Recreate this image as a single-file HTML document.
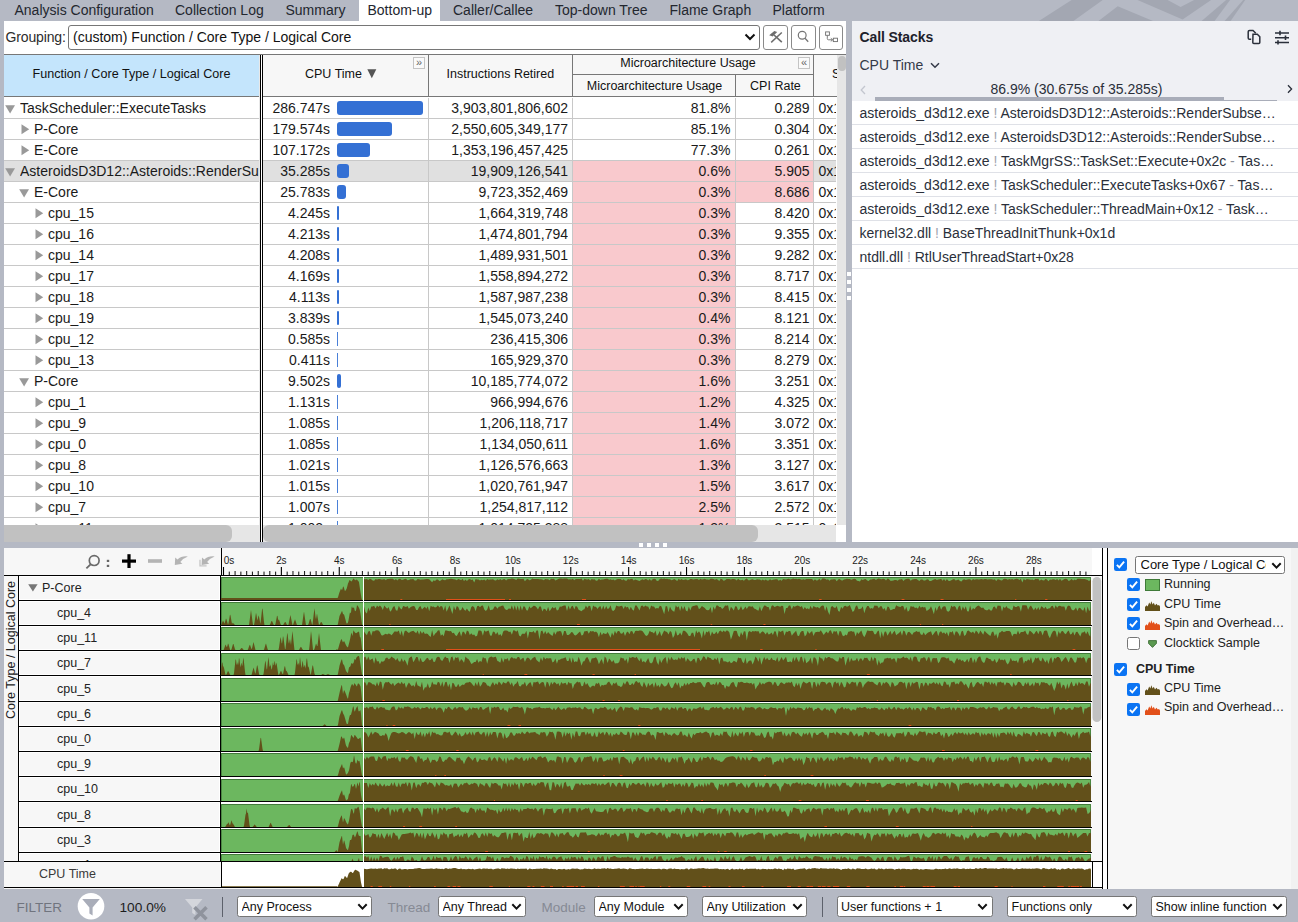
<!DOCTYPE html><html><head><meta charset="utf-8"><title>VTune</title><style>
*{box-sizing:border-box;margin:0;padding:0}
html,body{width:1298px;height:922px;overflow:hidden}
body{background:#b5b9c4;font-family:"Liberation Sans",sans-serif;font-size:14px;color:#1a1a1a;position:relative}
.abs{position:absolute}
.tab{position:absolute;top:0;height:21px;line-height:20px;font-size:14px;color:#23272f;white-space:nowrap}
.tab.act{background:#fff}
#tl{position:absolute;left:4px;top:21px;width:842px;height:521px;background:#fff;overflow:hidden}
.sel{position:absolute;background:#fff;border:1px solid #767676;border-radius:3px;white-space:nowrap;overflow:hidden}
.btn{position:absolute;top:4px;width:25px;height:25px;border:1px solid #8a8a8a;border-radius:3px;background:#fff}
.hd{position:absolute;background:#f7f7f7;font-size:12.5px;color:#111;text-align:center;white-space:nowrap}
.row{position:absolute;left:0;width:832px;height:21px;border-bottom:1px solid #c8c8c8;font-size:14px;line-height:21px;white-space:nowrap}
.row.selr{background:#e0e0e0}
.c{position:absolute;top:0;height:20px;overflow:hidden}
.num{text-align:right}
.pink{background:#f9c9cd}
.bar{position:absolute;left:337px;top:3px;height:14px;background:#3470d4;border-radius:3px}
</style></head><body>
<div class="tab" style="left:14.5px">Analysis Configuration</div>
<div class="tab" style="left:175px">Collection Log</div>
<div class="tab" style="left:285.5px">Summary</div>
<div class="tab act" style="left:359px;width:81px;padding-left:8.5px">Bottom-up</div>
<div class="tab" style="left:453px">Caller/Callee</div>
<div class="tab" style="left:555px">Top-down Tree</div>
<div class="tab" style="left:669.5px">Flame Graph</div>
<div class="tab" style="left:772.5px">Platform</div>
<svg class="abs" style="left:1030px;top:0" width="268" height="21" viewBox="1030 0 268 21"><g fill="#a3a7b2"><polygon points="1038.9,21 1071.6,0 1102.7,0 1073.4,21"/><polygon points="1098.5,21 1117.7,6.2 1153,21"/><polygon points="1137.5,0 1167.6,0 1180.6,7 1194.1,0 1211.1,0 1182.6,19.5"/><polygon points="1201.6,21 1226.1,0 1230.1,0 1214.6,21"/><polygon points="1224.6,21 1243.2,0 1245.2,0 1230.6,21"/></g></svg>
<div id="tl">
<div class="abs" style="left:1.6px;top:0;height:33px;line-height:32px;font-size:14px;letter-spacing:-0.15px;color:#2c2c2c">Grouping:</div>
<div class="sel" style="left:64px;top:4px;width:692px;height:25px;line-height:23px;font-size:14px;padding-left:4px;color:#111">(custom) Function / Core Type / Logical Core</div>
<svg class="abs" style="left:740px;top:12px" width="12" height="8" viewBox="0 0 12 8"><path d="M1.5 1.5 L6 6 L10.5 1.5" fill="none" stroke="#111" stroke-width="2"/></svg>
<div class="btn" style="left:759px;width:25px"></div>
<div class="btn" style="left:787px;width:25px"></div>
<div class="btn" style="left:815px;width:24px"></div>
<svg class="abs" style="left:759px;top:4px" width="84" height="25" viewBox="763 25 84 25"><g stroke="#6e6e6e" fill="none"><path d="M771.2 42.4 L781.8 32.5" stroke-width="1.5"/><path d="M774 35 L781.8 42.2" stroke-width="1.7"/><polygon points="769.2,35.3 774.3,30.9 777.2,32 772.7,36.6" fill="#6e6e6e" stroke="none"/><circle cx="802.2" cy="35.3" r="3.9" stroke-width="1.2" stroke="#757575"/><path d="M805 38.2 L808.2 41.7" stroke-width="1.3" stroke="#757575"/><rect x="825.6" y="31.9" width="3.8" height="3.4" stroke-width="0.9"/><rect x="833.3" y="38.2" width="4.2" height="3.4" stroke-width="0.9"/><path d="M827.3 35.5 V38.6 Q827.3 39.8 828.5 39.8 H832.6" stroke-width="0.9"/><path d="M830.8 38.2 L832.6 39.8 L830.8 41.4" stroke-width="0.9"/></g></svg>
<div class="abs" style="left:0;top:33px;width:843px;height:1px;background:#777"></div>
<div class="hd" style="left:0;top:34px;width:255px;height:41px;background:#c4e5fc;line-height:38px;font-size:12.6px">Function / Core Type / Logical Core</div>
<div class="abs" style="left:259px;top:34px;width:584px;height:41px;background:#f7f7f7"></div>
<div class="hd" style="left:259px;top:34px;width:165px;height:41px;line-height:38px;"><span style="position:absolute;left:42px;top:0">CPU Time</span></div>
<div class="hd" style="left:425px;top:34px;width:143px;height:41px;line-height:38px;"><span style="position:absolute;left:17.5px;top:0">Instructions Retired</span></div>
<div class="hd" style="left:569px;top:34px;width:240px;height:19px;line-height:17px;"><span style="position:absolute;left:47.3px;top:0">Microarchitecture Usage</span></div>
<div class="hd" style="left:569px;top:54px;width:162px;height:21px;line-height:22px;"><span style="position:absolute;left:13.8px;top:0">Microarchitecture Usage</span></div>
<div class="hd" style="left:732px;top:54px;width:77px;height:21px;line-height:22px;"><span style="position:absolute;left:14.1px;top:0">CPI Rate</span></div>
<div class="hd" style="left:810px;top:34px;width:23px;height:41px;line-height:38px;"><span style="position:absolute;left:18px;top:0">S</span></div>
<div class="abs" style="left:424px;top:34px;width:1px;height:41px;background:#777"></div>
<div class="abs" style="left:568px;top:34px;width:1px;height:41px;background:#777"></div>
<div class="abs" style="left:809px;top:34px;width:1px;height:41px;background:#777"></div>
<div class="abs" style="left:731px;top:54px;width:1px;height:21px;background:#777"></div>
<div class="abs" style="left:568px;top:53px;width:242px;height:1px;background:#777"></div>
<div class="abs" style="left:0px;top:75px;width:833px;height:1px;background:#777"></div>
<svg class="abs" style="left:363px;top:48px" width="10" height="10" viewBox="0 0 10 10"><polygon points="0.3,0.3 9.3,0.3 4.8,9.3" fill="#555"/></svg>
<div class="abs" style="left:409px;top:36px;width:12px;height:12px;border:1px solid #c4c4c4;background:#fafafa;font-size:11px;line-height:9px;text-align:center;color:#666">&raquo;</div>
<div class="abs" style="left:794px;top:36px;width:12px;height:12px;border:1px solid #c4c4c4;background:#fafafa;font-size:11px;line-height:9px;text-align:center;color:#666">&laquo;</div>
<div class="abs" style="left:0;top:77px;width:833px;height:427px;overflow:hidden">
<div class="row" style="top:0px">
<svg class="abs" style="left:1px;top:7px" width="11" height="9" viewBox="0 0 11 9"><polygon points="0.2,0.3 10,0.3 5.1,8.6" fill="#999"/></svg>
<div class="c" style="left:16px;width:239px">TaskScheduler::ExecuteTasks</div>
<div class="c num" style="left:259px;width:67px">286.747s</div>
<div class="bar" style="left:333px;width:86.0px"></div>
<div class="c num" style="left:425px;width:139px">3,903,801,806,602</div>
<div class="c num" style="left:569px;width:162px;padding-right:4.5px">81.8%</div>
<div class="c num" style="left:732px;width:77px;padding-right:3.5px">0.289</div>
<div class="c" style="left:810px;width:22px;padding-left:4.5px">0x1</div>
</div>
<div class="row" style="top:21px">
<svg class="abs" style="left:17px;top:5px" width="9" height="11" viewBox="0 0 9 11"><polygon points="0.5,0.3 8.2,5.3 0.5,10.3" fill="#999"/></svg>
<div class="c" style="left:30px;width:225px">P-Core</div>
<div class="c num" style="left:259px;width:67px">179.574s</div>
<div class="bar" style="left:333px;width:54.9px"></div>
<div class="c num" style="left:425px;width:139px">2,550,605,349,177</div>
<div class="c num" style="left:569px;width:162px;padding-right:4.5px">85.1%</div>
<div class="c num" style="left:732px;width:77px;padding-right:3.5px">0.304</div>
<div class="c" style="left:810px;width:22px;padding-left:4.5px">0x1</div>
</div>
<div class="row" style="top:42px">
<svg class="abs" style="left:17px;top:5px" width="9" height="11" viewBox="0 0 9 11"><polygon points="0.5,0.3 8.2,5.3 0.5,10.3" fill="#999"/></svg>
<div class="c" style="left:30px;width:225px">E-Core</div>
<div class="c num" style="left:259px;width:67px">107.172s</div>
<div class="bar" style="left:333px;width:33.1px"></div>
<div class="c num" style="left:425px;width:139px">1,353,196,457,425</div>
<div class="c num" style="left:569px;width:162px;padding-right:4.5px">77.3%</div>
<div class="c num" style="left:732px;width:77px;padding-right:3.5px">0.261</div>
<div class="c" style="left:810px;width:22px;padding-left:4.5px">0x1</div>
</div>
<div class="row selr" style="top:63px">
<svg class="abs" style="left:1px;top:7px" width="11" height="9" viewBox="0 0 11 9"><polygon points="0.2,0.3 10,0.3 5.1,8.6" fill="#999"/></svg>
<div class="c" style="left:16px;width:239px">AsteroidsD3D12::Asteroids::RenderSubsetFrame</div>
<div class="c num" style="left:259px;width:67px">35.285s</div>
<div class="bar" style="left:333px;width:11.6px"></div>
<div class="c num" style="left:425px;width:139px">19,909,126,541</div>
<div class="c num pink" style="left:569px;width:162px;padding-right:4.5px">0.6%</div>
<div class="c num pink" style="left:732px;width:77px;padding-right:3.5px">5.905</div>
<div class="c" style="left:810px;width:22px;padding-left:4.5px">0x1</div>
</div>
<div class="row" style="top:84px">
<svg class="abs" style="left:15px;top:7px" width="11" height="9" viewBox="0 0 11 9"><polygon points="0.2,0.3 10,0.3 5.1,8.6" fill="#999"/></svg>
<div class="c" style="left:30px;width:225px">E-Core</div>
<div class="c num" style="left:259px;width:67px">25.783s</div>
<div class="bar" style="left:333px;width:8.7px"></div>
<div class="c num" style="left:425px;width:139px">9,723,352,469</div>
<div class="c num pink" style="left:569px;width:162px;padding-right:4.5px">0.3%</div>
<div class="c num pink" style="left:732px;width:77px;padding-right:3.5px">8.686</div>
<div class="c" style="left:810px;width:22px;padding-left:4.5px">0x1</div>
</div>
<div class="row" style="top:105px">
<svg class="abs" style="left:31px;top:5px" width="9" height="11" viewBox="0 0 9 11"><polygon points="0.5,0.3 8.2,5.3 0.5,10.3" fill="#999"/></svg>
<div class="c" style="left:44px;width:211px">cpu_15</div>
<div class="c num" style="left:259px;width:67px">4.245s</div>
<div class="bar" style="left:333px;width:2.3px"></div>
<div class="c num" style="left:425px;width:139px">1,664,319,748</div>
<div class="c num pink" style="left:569px;width:162px;padding-right:4.5px">0.3%</div>
<div class="c num" style="left:732px;width:77px;padding-right:3.5px">8.420</div>
<div class="c" style="left:810px;width:22px;padding-left:4.5px">0x1</div>
</div>
<div class="row" style="top:126px">
<svg class="abs" style="left:31px;top:5px" width="9" height="11" viewBox="0 0 9 11"><polygon points="0.5,0.3 8.2,5.3 0.5,10.3" fill="#999"/></svg>
<div class="c" style="left:44px;width:211px">cpu_16</div>
<div class="c num" style="left:259px;width:67px">4.213s</div>
<div class="bar" style="left:333px;width:2.3px"></div>
<div class="c num" style="left:425px;width:139px">1,474,801,794</div>
<div class="c num pink" style="left:569px;width:162px;padding-right:4.5px">0.3%</div>
<div class="c num" style="left:732px;width:77px;padding-right:3.5px">9.355</div>
<div class="c" style="left:810px;width:22px;padding-left:4.5px">0x1</div>
</div>
<div class="row" style="top:147px">
<svg class="abs" style="left:31px;top:5px" width="9" height="11" viewBox="0 0 9 11"><polygon points="0.5,0.3 8.2,5.3 0.5,10.3" fill="#999"/></svg>
<div class="c" style="left:44px;width:211px">cpu_14</div>
<div class="c num" style="left:259px;width:67px">4.208s</div>
<div class="bar" style="left:333px;width:2.3px"></div>
<div class="c num" style="left:425px;width:139px">1,489,931,501</div>
<div class="c num pink" style="left:569px;width:162px;padding-right:4.5px">0.3%</div>
<div class="c num" style="left:732px;width:77px;padding-right:3.5px">9.282</div>
<div class="c" style="left:810px;width:22px;padding-left:4.5px">0x1</div>
</div>
<div class="row" style="top:168px">
<svg class="abs" style="left:31px;top:5px" width="9" height="11" viewBox="0 0 9 11"><polygon points="0.5,0.3 8.2,5.3 0.5,10.3" fill="#999"/></svg>
<div class="c" style="left:44px;width:211px">cpu_17</div>
<div class="c num" style="left:259px;width:67px">4.169s</div>
<div class="bar" style="left:333px;width:2.3px"></div>
<div class="c num" style="left:425px;width:139px">1,558,894,272</div>
<div class="c num pink" style="left:569px;width:162px;padding-right:4.5px">0.3%</div>
<div class="c num" style="left:732px;width:77px;padding-right:3.5px">8.717</div>
<div class="c" style="left:810px;width:22px;padding-left:4.5px">0x1</div>
</div>
<div class="row" style="top:189px">
<svg class="abs" style="left:31px;top:5px" width="9" height="11" viewBox="0 0 9 11"><polygon points="0.5,0.3 8.2,5.3 0.5,10.3" fill="#999"/></svg>
<div class="c" style="left:44px;width:211px">cpu_18</div>
<div class="c num" style="left:259px;width:67px">4.113s</div>
<div class="bar" style="left:333px;width:2.2px"></div>
<div class="c num" style="left:425px;width:139px">1,587,987,238</div>
<div class="c num pink" style="left:569px;width:162px;padding-right:4.5px">0.3%</div>
<div class="c num" style="left:732px;width:77px;padding-right:3.5px">8.415</div>
<div class="c" style="left:810px;width:22px;padding-left:4.5px">0x1</div>
</div>
<div class="row" style="top:210px">
<svg class="abs" style="left:31px;top:5px" width="9" height="11" viewBox="0 0 9 11"><polygon points="0.5,0.3 8.2,5.3 0.5,10.3" fill="#999"/></svg>
<div class="c" style="left:44px;width:211px">cpu_19</div>
<div class="c num" style="left:259px;width:67px">3.839s</div>
<div class="bar" style="left:333px;width:2.2px"></div>
<div class="c num" style="left:425px;width:139px">1,545,073,240</div>
<div class="c num pink" style="left:569px;width:162px;padding-right:4.5px">0.4%</div>
<div class="c num" style="left:732px;width:77px;padding-right:3.5px">8.121</div>
<div class="c" style="left:810px;width:22px;padding-left:4.5px">0x1</div>
</div>
<div class="row" style="top:231px">
<svg class="abs" style="left:31px;top:5px" width="9" height="11" viewBox="0 0 9 11"><polygon points="0.5,0.3 8.2,5.3 0.5,10.3" fill="#999"/></svg>
<div class="c" style="left:44px;width:211px">cpu_12</div>
<div class="c num" style="left:259px;width:67px">0.585s</div>
<div class="bar" style="left:333px;width:1.2px;border-radius:0;background:#4a80d8"></div>
<div class="c num" style="left:425px;width:139px">236,415,306</div>
<div class="c num pink" style="left:569px;width:162px;padding-right:4.5px">0.3%</div>
<div class="c num" style="left:732px;width:77px;padding-right:3.5px">8.214</div>
<div class="c" style="left:810px;width:22px;padding-left:4.5px">0x1</div>
</div>
<div class="row" style="top:252px">
<svg class="abs" style="left:31px;top:5px" width="9" height="11" viewBox="0 0 9 11"><polygon points="0.5,0.3 8.2,5.3 0.5,10.3" fill="#999"/></svg>
<div class="c" style="left:44px;width:211px">cpu_13</div>
<div class="c num" style="left:259px;width:67px">0.411s</div>
<div class="bar" style="left:333px;width:1.2px;border-radius:0;background:#4a80d8"></div>
<div class="c num" style="left:425px;width:139px">165,929,370</div>
<div class="c num pink" style="left:569px;width:162px;padding-right:4.5px">0.3%</div>
<div class="c num" style="left:732px;width:77px;padding-right:3.5px">8.279</div>
<div class="c" style="left:810px;width:22px;padding-left:4.5px">0x1</div>
</div>
<div class="row" style="top:273px">
<svg class="abs" style="left:15px;top:7px" width="11" height="9" viewBox="0 0 11 9"><polygon points="0.2,0.3 10,0.3 5.1,8.6" fill="#999"/></svg>
<div class="c" style="left:30px;width:225px">P-Core</div>
<div class="c num" style="left:259px;width:67px">9.502s</div>
<div class="bar" style="left:333px;width:3.8px"></div>
<div class="c num" style="left:425px;width:139px">10,185,774,072</div>
<div class="c num pink" style="left:569px;width:162px;padding-right:4.5px">1.6%</div>
<div class="c num" style="left:732px;width:77px;padding-right:3.5px">3.251</div>
<div class="c" style="left:810px;width:22px;padding-left:4.5px">0x1</div>
</div>
<div class="row" style="top:294px">
<svg class="abs" style="left:31px;top:5px" width="9" height="11" viewBox="0 0 9 11"><polygon points="0.5,0.3 8.2,5.3 0.5,10.3" fill="#999"/></svg>
<div class="c" style="left:44px;width:211px">cpu_1</div>
<div class="c num" style="left:259px;width:67px">1.131s</div>
<div class="bar" style="left:333px;width:1.2px;border-radius:0;background:#4a80d8"></div>
<div class="c num" style="left:425px;width:139px">966,994,676</div>
<div class="c num pink" style="left:569px;width:162px;padding-right:4.5px">1.2%</div>
<div class="c num" style="left:732px;width:77px;padding-right:3.5px">4.325</div>
<div class="c" style="left:810px;width:22px;padding-left:4.5px">0x1</div>
</div>
<div class="row" style="top:315px">
<svg class="abs" style="left:31px;top:5px" width="9" height="11" viewBox="0 0 9 11"><polygon points="0.5,0.3 8.2,5.3 0.5,10.3" fill="#999"/></svg>
<div class="c" style="left:44px;width:211px">cpu_9</div>
<div class="c num" style="left:259px;width:67px">1.085s</div>
<div class="bar" style="left:333px;width:1.2px;border-radius:0;background:#4a80d8"></div>
<div class="c num" style="left:425px;width:139px">1,206,118,717</div>
<div class="c num pink" style="left:569px;width:162px;padding-right:4.5px">1.4%</div>
<div class="c num" style="left:732px;width:77px;padding-right:3.5px">3.072</div>
<div class="c" style="left:810px;width:22px;padding-left:4.5px">0x1</div>
</div>
<div class="row" style="top:336px">
<svg class="abs" style="left:31px;top:5px" width="9" height="11" viewBox="0 0 9 11"><polygon points="0.5,0.3 8.2,5.3 0.5,10.3" fill="#999"/></svg>
<div class="c" style="left:44px;width:211px">cpu_0</div>
<div class="c num" style="left:259px;width:67px">1.085s</div>
<div class="bar" style="left:333px;width:1.2px;border-radius:0;background:#4a80d8"></div>
<div class="c num" style="left:425px;width:139px">1,134,050,611</div>
<div class="c num pink" style="left:569px;width:162px;padding-right:4.5px">1.6%</div>
<div class="c num" style="left:732px;width:77px;padding-right:3.5px">3.351</div>
<div class="c" style="left:810px;width:22px;padding-left:4.5px">0x1</div>
</div>
<div class="row" style="top:357px">
<svg class="abs" style="left:31px;top:5px" width="9" height="11" viewBox="0 0 9 11"><polygon points="0.5,0.3 8.2,5.3 0.5,10.3" fill="#999"/></svg>
<div class="c" style="left:44px;width:211px">cpu_8</div>
<div class="c num" style="left:259px;width:67px">1.021s</div>
<div class="bar" style="left:333px;width:1.2px;border-radius:0;background:#4a80d8"></div>
<div class="c num" style="left:425px;width:139px">1,126,576,663</div>
<div class="c num pink" style="left:569px;width:162px;padding-right:4.5px">1.3%</div>
<div class="c num" style="left:732px;width:77px;padding-right:3.5px">3.127</div>
<div class="c" style="left:810px;width:22px;padding-left:4.5px">0x1</div>
</div>
<div class="row" style="top:378px">
<svg class="abs" style="left:31px;top:5px" width="9" height="11" viewBox="0 0 9 11"><polygon points="0.5,0.3 8.2,5.3 0.5,10.3" fill="#999"/></svg>
<div class="c" style="left:44px;width:211px">cpu_10</div>
<div class="c num" style="left:259px;width:67px">1.015s</div>
<div class="bar" style="left:333px;width:1.2px;border-radius:0;background:#4a80d8"></div>
<div class="c num" style="left:425px;width:139px">1,020,761,947</div>
<div class="c num pink" style="left:569px;width:162px;padding-right:4.5px">1.5%</div>
<div class="c num" style="left:732px;width:77px;padding-right:3.5px">3.617</div>
<div class="c" style="left:810px;width:22px;padding-left:4.5px">0x1</div>
</div>
<div class="row" style="top:399px">
<svg class="abs" style="left:31px;top:5px" width="9" height="11" viewBox="0 0 9 11"><polygon points="0.5,0.3 8.2,5.3 0.5,10.3" fill="#999"/></svg>
<div class="c" style="left:44px;width:211px">cpu_7</div>
<div class="c num" style="left:259px;width:67px">1.007s</div>
<div class="bar" style="left:333px;width:1.2px;border-radius:0;background:#4a80d8"></div>
<div class="c num" style="left:425px;width:139px">1,254,817,112</div>
<div class="c num pink" style="left:569px;width:162px;padding-right:4.5px">2.5%</div>
<div class="c num" style="left:732px;width:77px;padding-right:3.5px">2.572</div>
<div class="c" style="left:810px;width:22px;padding-left:4.5px">0x1</div>
</div>
<div class="row" style="top:420px">
<svg class="abs" style="left:31px;top:5px" width="9" height="11" viewBox="0 0 9 11"><polygon points="0.5,0.3 8.2,5.3 0.5,10.3" fill="#999"/></svg>
<div class="c" style="left:44px;width:211px">cpu_11</div>
<div class="c num" style="left:259px;width:67px">1.002s</div>
<div class="bar" style="left:333px;width:1.2px;border-radius:0;background:#4a80d8"></div>
<div class="c num" style="left:425px;width:139px">1,014,725,388</div>
<div class="c num pink" style="left:569px;width:162px;padding-right:4.5px">1.3%</div>
<div class="c num" style="left:732px;width:77px;padding-right:3.5px">3.515</div>
<div class="c" style="left:810px;width:22px;padding-left:4.5px">0x1</div>
</div>
<div class="abs" style="left:424px;top:0;width:1px;height:428px;background:#c8c8c8"></div>
<div class="abs" style="left:568px;top:0;width:1px;height:428px;background:#c8c8c8"></div>
<div class="abs" style="left:731px;top:0;width:1px;height:428px;background:#c8c8c8"></div>
<div class="abs" style="left:809px;top:0;width:1px;height:428px;background:#c8c8c8"></div>
</div>
<div class="abs" style="left:255px;top:34px;width:1px;height:470px;background:#e8e8e8"></div>
<div class="abs" style="left:256px;top:34px;width:1px;height:487px;background:#000"></div>
<div class="abs" style="left:257px;top:34px;width:1px;height:487px;background:#fff"></div>
<div class="abs" style="left:258px;top:34px;width:1px;height:487px;background:#000"></div>
<div class="abs" style="left:833px;top:34px;width:9px;height:470px;background:#e6e6e6"></div>
<div class="abs" style="left:833.5px;top:35px;width:8.5px;height:15px;background:#c1c1c1;border-radius:4.5px"></div>
<div class="abs" style="left:0;top:504px;width:832px;height:17px;background:#e6e6e6"></div>
<div class="abs" style="left:0;top:504px;width:228px;height:17px;background:#c1c1c1;border-radius:0 6px 6px 0"></div>
<div class="abs" style="left:259px;top:504px;width:495px;height:17px;background:#c1c1c1;border-radius:6px"></div>
<div class="abs" style="left:256px;top:504px;width:1px;height:17px;background:#000"></div>
<div class="abs" style="left:257px;top:504px;width:1px;height:17px;background:#fff"></div>
<div class="abs" style="left:258px;top:504px;width:1px;height:17px;background:#000"></div>
</div>
<div class="abs" style="left:847px;top:272px;width:4px;height:4px;background:#fff"></div>
<div class="abs" style="left:847px;top:280px;width:4px;height:4px;background:#fff"></div>
<div class="abs" style="left:847px;top:288px;width:4px;height:4px;background:#fff"></div>
<div class="abs" style="left:847px;top:296px;width:4px;height:4px;background:#fff"></div>
<div class="abs" id="cs" style="left:852px;top:21px;width:446px;height:521px;background:#fff;overflow:hidden">
<div class="abs" style="left:0;top:0;width:446px;height:80px;background:#eff0f4"></div>
<div class="abs" style="left:7.5px;top:8px;font-size:14px;font-weight:bold;line-height:16px;color:#1d212b;letter-spacing:-0.1px">Call Stacks</div>
<div class="abs" style="left:7.5px;top:36px;font-size:14px;line-height:16px;color:#343a48">CPU Time</div>
<svg class="abs" style="left:78px;top:41px" width="10" height="7" viewBox="0 0 10 7"><path d="M1 1.2 L5 5.2 L9 1.2" fill="none" stroke="#343a48" stroke-width="1.5"/></svg>
<svg class="abs" style="left:395px;top:8px" width="15" height="16" viewBox="0 0 15 16"><g fill="none" stroke="#2a2f3a" stroke-width="1.5"><path d="M4.2 10.2 H2.5 Q1.2 10.2 1.2 8.9 V2.8 Q1.2 1.5 2.5 1.5 H6 L8.8 4.3"/><path d="M6 5.2 H10.3 L12.8 7.7 V13.4 Q12.8 14.4 11.8 14.4 H6.8 Q5.8 14.4 5.8 13.4 Z"/></g></svg>
<svg class="abs" style="left:422px;top:9px" width="16" height="15" viewBox="0 0 16 15"><g fill="none" stroke="#2a2f3a" stroke-width="1.5"><path d="M1 3 H15 M1 7.7 H15 M1 12.4 H15"/><path d="M6 0.8 V5.2 M11.5 5.5 V9.9 M4 10.2 V14.6" stroke-width="1.6"/></g></svg>
<svg class="abs" style="left:8px;top:64px" width="6" height="10" viewBox="0 0 6 10"><path d="M5 1 L1.2 5 L5 9" fill="none" stroke="#c3c6cf" stroke-width="1.3"/></svg>
<svg class="abs" style="left:434.6px;top:63.4px" width="6" height="10" viewBox="0 0 6 10"><path d="M1 1.2 L4.6 5 L1 8.8" fill="none" stroke="#2a2f3a" stroke-width="1.3"/></svg>
<div class="abs" style="left:0;top:59.6px;width:446px;text-align:center;font-size:14px;line-height:16px;color:#2a2f3a;padding-left:3px">86.9% (30.675s of 35.285s)</div>
<div class="abs" style="left:23px;top:76.2px;width:349px;height:3.8px;background:#a9adb9"></div>
<div class="abs" style="left:372px;top:79px;width:53px;height:1px;background:#a9adb9"></div>
<div class="abs" style="left:0;top:80px;width:446px;height:24px;border-bottom:1px solid #dfe1e7;line-height:25px;font-size:14px;color:#2a2f3a;padding-left:7.5px;white-space:nowrap">asteroids_d3d12.exe <span style="color:#a0a4af">!</span> AsteroidsD3D12::Asteroids::RenderSubse&hellip;</div>
<div class="abs" style="left:0;top:104px;width:446px;height:24px;border-bottom:1px solid #dfe1e7;line-height:25px;font-size:14px;color:#2a2f3a;padding-left:7.5px;white-space:nowrap">asteroids_d3d12.exe <span style="color:#a0a4af">!</span> AsteroidsD3D12::Asteroids::RenderSubse&hellip;</div>
<div class="abs" style="left:0;top:128px;width:446px;height:24px;border-bottom:1px solid #dfe1e7;line-height:25px;font-size:14px;color:#2a2f3a;padding-left:7.5px;white-space:nowrap">asteroids_d3d12.exe <span style="color:#a0a4af">!</span> TaskMgrSS::TaskSet::Execute+0x2c <span style="color:#8d919c">-</span> Tas&hellip;</div>
<div class="abs" style="left:0;top:152px;width:446px;height:24px;border-bottom:1px solid #dfe1e7;line-height:25px;font-size:14px;color:#2a2f3a;padding-left:7.5px;white-space:nowrap">asteroids_d3d12.exe <span style="color:#a0a4af">!</span> TaskScheduler::ExecuteTasks+0x67 <span style="color:#8d919c">-</span> Tas&hellip;</div>
<div class="abs" style="left:0;top:176px;width:446px;height:24px;border-bottom:1px solid #dfe1e7;line-height:25px;font-size:14px;color:#2a2f3a;padding-left:7.5px;white-space:nowrap">asteroids_d3d12.exe <span style="color:#a0a4af">!</span> TaskScheduler::ThreadMain+0x12 <span style="color:#8d919c">-</span> Task&hellip;</div>
<div class="abs" style="left:0;top:200px;width:446px;height:24px;border-bottom:1px solid #dfe1e7;line-height:25px;font-size:14px;color:#2a2f3a;padding-left:7.5px;white-space:nowrap">kernel32.dll <span style="color:#a0a4af">!</span> BaseThreadInitThunk+0x1d</div>
<div class="abs" style="left:0;top:224px;width:446px;height:24px;border-bottom:1px solid #dfe1e7;line-height:25px;font-size:14px;color:#2a2f3a;padding-left:7.5px;white-space:nowrap">ntdll.dll <span style="color:#a0a4af">!</span> RtlUserThreadStart+0x28</div>
</div>
<div class="abs" style="left:639px;top:543px;width:4px;height:4px;background:#fff"></div>
<div class="abs" style="left:647px;top:543px;width:4px;height:4px;background:#fff"></div>
<div class="abs" style="left:655px;top:543px;width:4px;height:4px;background:#fff"></div>
<div class="abs" style="left:663px;top:543px;width:4px;height:4px;background:#fff"></div>
<div class="abs" id="tp" style="left:4px;top:548px;width:1099px;height:341px;background:#f7f7f7;overflow:hidden">
<svg class="abs" style="left:0;top:0" width="1099" height="341" viewBox="4 548 1099 341">
<rect x="221" y="576" width="870" height="285" fill="#fff"/>
<rect x="222" y="862" width="880" height="25" fill="#fff"/>
<rect x="1092" y="576" width="10" height="285" fill="#f8f8f8"/>
<rect x="1092" y="548" width="10" height="27" fill="#fff"/>
<rect x="221" y="577" width="870" height="23" fill="#6cb75f"/>
<rect x="221" y="577" width="870" height="1" fill="#417a39"/>
<rect x="221" y="577" width="1" height="23" fill="#4a8741"/>
<rect x="1090" y="577" width="1" height="23" fill="#4a8741"/>
<path d="M221 600L221.0 598.0L221.5 598.0L222.0 598.0L222.5 598.0L223.0 598.0L223.5 598.0L224.0 598.0L224.5 598.0L225.0 598.0L225.5 598.0L226.0 598.0L226.5 598.0L227.0 598.0L227.5 598.0L228.0 598.0L228.5 598.0L229.0 598.0L229.5 598.0L230.0 598.0L230.5 598.0L231.0 598.0L231.5 598.0L232.0 598.0L232.5 598.0L233.0 598.0L233.5 598.0L234.0 598.0L234.5 598.0L235.0 598.0L235.5 598.0L236.0 598.0L236.5 598.0L237.0 598.0L237.5 598.0L238.0 598.0L238.5 598.0L239.0 598.0L239.5 598.0L240.0 598.0L240.5 598.0L241.0 598.0L241.5 598.0L242.0 598.0L242.5 598.0L243.0 598.0L243.5 598.0L244.0 598.0L244.5 598.0L245.0 598.0L245.5 598.0L246.0 598.0L246.5 598.0L247.0 598.0L247.5 598.0L248.0 598.0L248.5 598.0L249.0 598.0L249.5 598.0L250.0 598.0L250.5 598.0L251.0 598.0L251.5 598.0L252.0 598.0L252.5 598.0L253.0 598.0L253.5 598.0L254.0 598.0L254.5 598.0L255.0 598.0L255.5 598.0L256.0 598.0L256.5 598.0L257.0 598.0L257.5 598.0L258.0 598.0L258.5 598.0L259.0 598.0L259.5 598.0L260.0 598.0L260.5 598.0L261.0 598.0L261.5 598.0L262.0 598.0L262.5 598.0L263.0 598.0L263.5 598.0L264.0 598.0L264.5 598.0L265.0 598.0L265.5 598.0L266.0 598.0L266.5 598.0L267.0 598.0L267.5 598.0L268.0 598.0L268.5 598.0L269.0 598.0L269.5 598.0L270.0 598.0L270.5 598.0L271.0 598.0L271.5 598.0L272.0 598.0L272.5 598.0L273.0 598.0L273.5 598.0L274.0 598.0L274.5 598.0L275.0 598.0L275.5 598.0L276.0 598.0L276.5 598.0L277.0 598.0L277.5 598.0L278.0 598.0L278.5 598.0L279.0 598.0L279.5 598.0L280.0 598.0L280.5 598.0L281.0 598.0L281.5 598.0L282.0 598.0L282.5 598.0L283.0 598.0L283.5 598.0L284.0 598.0L284.5 598.0L285.0 598.0L285.5 598.0L286.0 598.0L286.5 598.0L287.0 598.0L287.5 598.0L288.0 598.0L288.5 598.0L289.0 598.0L289.5 598.0L290.0 598.0L290.5 598.0L291.0 598.0L291.5 598.0L292.0 598.0L292.5 598.0L293.0 598.0L293.5 598.0L294.0 598.0L294.5 598.0L295.0 598.0L295.5 598.0L296.0 598.0L296.5 598.0L297.0 598.0L297.5 598.0L298.0 598.0L298.5 598.0L299.0 598.0L299.5 598.0L300.0 598.0L300.5 598.0L301.0 598.0L301.5 598.0L302.0 598.0L302.5 598.0L303.0 598.0L303.5 598.0L304.0 598.0L304.5 598.0L305.0 598.0L305.5 598.0L306.0 598.0L306.5 598.0L307.0 598.0L307.5 598.0L308.0 598.0L308.5 598.0L309.0 598.0L309.5 598.0L310.0 598.0L310.5 598.0L311.0 598.0L311.5 598.0L312.0 598.0L312.5 598.0L313.0 598.0L313.5 598.0L314.0 598.0L314.5 598.0L315.0 598.0L315.5 598.0L316.0 598.0L316.5 598.0L317.0 598.0L317.5 598.0L318.0 598.0L318.5 598.0L319.0 598.0L319.5 598.0L320.0 598.0L320.5 598.0L321.0 598.0L321.5 598.0L322.0 598.0L322.5 598.0L323.0 598.0L323.5 598.0L324.0 598.0L324.5 598.0L325.0 598.0L325.5 598.0L326.0 598.0L326.5 598.0L327.0 598.0L327.5 598.0L328.0 598.0L328.5 598.0L329.0 598.0L329.5 598.0L330.0 598.0L330.5 598.0L331.0 598.0L331.5 598.0L332.0 598.0L332.5 598.0L333.0 598.0L333.5 598.0L334.0 598.0L334.5 598.0L335.0 598.0L335.5 598.0L336.0 598.0L336.5 598.0L337.0 598.0L337.5 598.0L338.0 597.3L338.5 595.6L339.0 593.8L339.5 592.3L340.0 591.0L340.5 589.7L341.0 588.6L341.5 589.4L342.0 590.2L342.5 588.8L343.0 586.8L343.5 586.5L344.0 588.1L344.5 589.7L345.0 591.3L345.5 590.5L346.0 589.7L346.5 588.9L347.0 587.4L347.5 585.5L348.0 583.6L348.5 582.5L349.0 581.3L349.5 580.1L350.0 580.2L350.5 580.7L351.0 581.2L351.5 581.4L352.0 580.7L352.5 579.9L353.0 579.2L353.5 578.4L354.0 578.7L354.5 579.5L355.0 580.2L355.5 580.2L356.0 579.8L356.5 579.4L357.0 579.7L357.5 580.2L358.0 580.7L358.5 581.2L359.0 582.3L359.5 585.6L360.0 589.0L360.5 592.3L361.0 595.3L361.5 598.3L362.0 600.0L362.5 600.0L363.0 600.0L363.5 579.1L364.0 579.1L365.4 579.2L366.9 578.9L368.3 580.1L369.8 578.8L371.2 579.3L372.7 580.4L374.1 580.7L375.6 578.9L377.0 579.6L378.5 579.1L379.9 579.1L381.4 579.4L382.8 579.5L384.3 579.0L385.7 580.3L387.2 579.1L388.6 579.1L390.1 578.7L391.5 578.8L393.0 578.8L394.4 580.3L395.9 579.1L397.3 580.4L398.8 579.1L400.2 578.8L401.7 580.1L403.1 579.8L404.6 578.9L406.0 578.8L407.5 580.3L408.9 579.9L410.4 579.2L411.8 579.3L413.3 579.1L414.7 580.4L416.2 580.5L417.6 579.0L419.1 579.2L420.5 579.7L422.0 579.4L423.4 579.5L424.9 579.3L426.3 578.9L427.8 579.1L429.2 579.3L430.7 580.7L432.1 582.2L433.6 580.2L435.0 581.1L436.5 579.4L437.9 579.4L439.4 581.0L440.8 580.4L442.3 579.3L443.7 580.0L445.2 580.3L446.6 579.3L448.1 579.2L449.5 579.0L451.0 578.8L452.4 578.9L453.9 579.2L455.3 579.6L456.8 580.3L458.2 579.1L459.7 579.5L461.1 580.2L462.6 578.8L464.0 580.9L465.5 579.4L466.9 581.1L468.4 579.5L469.8 579.1L471.3 579.9L472.7 579.4L474.2 582.5L475.6 579.1L477.1 579.4L478.5 579.5L480.0 580.5L481.4 579.7L482.9 580.3L484.3 579.4L485.8 580.7L487.2 579.1L488.7 579.7L490.1 579.4L491.6 579.4L493.0 579.3L494.5 580.3L495.9 580.5L497.4 579.3L498.8 580.0L500.3 578.9L501.7 580.3L503.2 579.2L504.6 578.9L506.1 580.6L507.5 579.3L509.0 578.9L510.4 579.1L511.9 578.5L513.3 578.7L514.8 579.2L516.2 580.1L517.7 578.6L519.1 578.7L520.6 578.9L522.0 578.9L523.5 578.7L524.9 581.2L526.4 579.5L527.8 578.9L529.3 580.2L530.7 579.9L532.2 578.6L533.6 579.0L535.1 578.9L536.5 579.0L538.0 579.0L539.4 579.2L540.9 579.2L542.3 579.5L543.8 580.2L545.2 579.1L546.7 579.2L548.1 579.3L549.6 580.3L551.1 578.8L552.5 579.0L554.0 578.8L555.4 580.4L556.9 579.7L558.3 578.9L559.8 578.6L561.2 578.4L562.7 578.8L564.1 578.4L565.6 578.5L567.0 578.6L568.5 579.5L569.9 579.3L571.4 579.6L572.8 578.7L574.3 580.3L575.7 578.9L577.2 579.1L578.6 578.9L580.1 579.1L581.5 578.6L583.0 580.8L584.4 578.8L585.9 579.3L587.3 579.4L588.8 579.1L590.2 580.5L591.7 579.1L593.1 579.4L594.6 579.3L596.0 580.7L597.5 580.5L598.9 578.8L600.4 580.1L601.8 579.5L603.3 579.4L604.7 578.9L606.2 578.7L607.6 578.7L609.1 579.7L610.5 579.2L612.0 580.0L613.4 579.4L614.9 580.6L616.3 579.4L617.8 579.0L619.2 578.9L620.7 578.9L622.1 580.2L623.6 579.2L625.0 580.4L626.5 580.7L627.9 579.1L629.4 579.5L630.8 579.1L632.3 578.8L633.7 580.5L635.2 579.4L636.6 580.0L638.1 580.4L639.5 581.0L641.0 580.1L642.4 579.3L643.9 580.0L645.3 578.9L646.8 579.3L648.2 580.5L649.7 579.0L651.1 580.7L652.6 579.3L654.0 578.7L655.5 579.0L656.9 581.0L658.4 580.8L659.8 578.9L661.3 578.6L662.7 579.1L664.2 578.6L665.6 578.9L667.1 578.8L668.5 579.2L670.0 579.3L671.4 580.3L672.9 579.7L674.3 579.0L675.8 579.9L677.2 581.1L678.7 578.8L680.1 580.0L681.6 579.1L683.0 579.9L684.5 579.7L685.9 579.2L687.4 580.3L688.8 579.9L690.3 578.9L691.7 579.1L693.2 579.5L694.6 579.2L696.1 579.0L697.5 578.9L699.0 579.9L700.4 578.8L701.9 579.5L703.3 579.3L704.8 578.7L706.2 579.4L707.7 579.4L709.1 579.8L710.6 578.7L712.0 578.8L713.5 578.9L714.9 579.7L716.4 579.1L717.8 579.8L719.3 581.1L720.7 578.8L722.2 579.2L723.6 580.8L725.1 580.2L726.5 579.0L728.0 578.9L729.4 579.1L730.9 579.4L732.3 579.0L733.8 579.0L735.2 579.3L736.7 580.4L738.1 578.7L739.6 580.1L741.0 580.2L742.5 579.8L743.9 580.7L745.4 579.2L746.8 578.6L748.3 580.2L749.7 580.3L751.2 579.5L752.6 579.3L754.1 580.0L755.5 580.0L757.0 579.2L758.4 579.6L759.9 579.5L761.3 580.4L762.8 579.4L764.2 580.4L765.7 579.4L767.1 580.4L768.6 580.4L770.0 579.2L771.5 580.3L772.9 579.7L774.4 579.4L775.8 579.2L777.3 579.2L778.7 580.8L780.2 579.7L781.6 580.7L783.1 579.0L784.5 579.2L786.0 579.6L787.4 578.9L788.9 578.8L790.3 579.4L791.8 578.9L793.2 578.6L794.7 579.0L796.1 578.7L797.6 579.2L799.0 578.8L800.5 579.2L801.9 579.7L803.4 579.2L804.8 579.7L806.3 579.0L807.7 578.9L809.2 578.9L810.6 578.9L812.1 579.0L813.5 580.7L815.0 579.3L816.4 580.5L817.9 580.2L819.3 578.8L820.8 580.5L822.2 578.6L823.7 578.6L825.1 578.8L826.6 579.8L828.0 579.3L829.5 580.7L830.9 579.5L832.4 579.4L833.8 579.3L835.3 579.3L836.7 581.3L838.2 579.5L839.6 579.1L841.1 580.2L842.5 580.5L844.0 579.4L845.4 579.3L846.9 578.8L848.3 578.9L849.8 579.1L851.2 579.7L852.7 579.3L854.1 578.7L855.6 578.9L857.0 580.7L858.5 580.9L859.9 581.4L861.4 579.2L862.8 580.1L864.3 579.2L865.7 579.0L867.2 580.5L868.6 581.1L870.1 579.5L871.5 579.6L873.0 579.0L874.4 578.8L875.9 580.0L877.3 578.9L878.8 578.6L880.2 579.1L881.7 579.2L883.1 578.8L884.6 578.9L886.0 580.6L887.5 578.6L888.9 579.0L890.4 580.7L891.8 580.8L893.3 580.4L894.7 580.0L896.2 580.1L897.6 580.7L899.1 579.5L900.5 579.6L902.0 579.1L903.4 581.1L904.9 579.5L906.3 579.1L907.8 578.8L909.2 578.8L910.7 580.8L912.1 579.4L913.6 579.3L915.0 579.0L916.5 579.0L917.9 580.0L919.4 580.9L920.8 579.4L922.3 579.4L923.7 580.4L925.2 580.6L926.6 579.6L928.1 579.3L929.5 581.0L931.0 581.0L932.4 580.3L933.9 579.6L935.3 579.1L936.8 580.1L938.2 579.6L939.7 579.3L941.1 578.8L942.6 580.7L944.0 579.1L945.5 580.9L946.9 578.9L948.4 580.7L949.8 581.0L951.3 580.3L952.7 579.5L954.2 579.0L955.6 580.6L957.1 580.0L958.5 579.4L960.0 580.9L961.4 581.4L962.9 579.7L964.3 579.3L965.8 580.0L967.2 579.4L968.7 579.3L970.1 579.2L971.6 580.5L973.0 579.1L974.5 579.8L975.9 579.3L977.4 579.2L978.8 579.4L980.3 579.2L981.7 579.1L983.2 579.4L984.6 579.1L986.1 579.1L987.5 579.6L989.0 579.3L990.4 579.2L991.9 579.3L993.3 579.8L994.8 579.2L996.2 581.1L997.7 579.3L999.1 579.4L1000.6 580.3L1002.0 580.4L1003.5 579.0L1004.9 578.7L1006.4 578.9L1007.8 579.7L1009.3 578.9L1010.7 579.4L1012.2 579.1L1013.6 579.7L1015.1 578.9L1016.5 578.8L1018.0 578.9L1019.4 580.0L1020.9 578.8L1022.3 582.5L1023.8 578.8L1025.2 580.3L1026.7 579.1L1028.1 579.3L1029.6 579.6L1031.0 579.7L1032.5 579.5L1033.9 580.2L1035.4 578.8L1036.8 579.1L1038.3 578.7L1039.7 580.7L1041.2 579.6L1042.6 580.3L1044.1 580.4L1045.5 578.7L1047.0 579.4L1048.4 581.3L1049.9 579.4L1051.3 579.8L1052.8 579.3L1054.2 579.2L1055.7 580.0L1057.1 579.0L1058.6 580.6L1060.0 578.8L1061.5 580.7L1062.9 580.1L1064.4 579.1L1065.8 578.8L1067.3 579.2L1068.7 580.9L1070.2 580.3L1071.6 579.1L1073.1 580.4L1074.5 579.4L1076.0 580.3L1077.4 578.8L1078.9 578.7L1080.3 578.7L1081.8 579.0L1083.2 579.0L1084.7 578.9L1086.1 579.4L1087.6 580.0L1089.0 581.0L1090.5 580.1L1091.0 580.6L1091 600Z" fill="#62501a"/>
<rect x="221" y="602" width="870" height="23" fill="#6cb75f"/>
<rect x="221" y="602" width="870" height="1" fill="#417a39"/>
<rect x="221" y="602" width="1" height="23" fill="#4a8741"/>
<rect x="1090" y="602" width="1" height="23" fill="#4a8741"/>
<path d="M221 625L221.0 625.0L221.5 624.1L222.0 622.9L222.5 621.7L223.0 620.6L223.5 621.4L224.0 622.6L224.5 623.7L225.0 622.0L225.5 620.3L226.0 618.5L226.5 619.4L227.0 621.2L227.5 622.9L228.0 624.7L228.5 623.3L229.0 620.4L229.5 617.5L230.0 614.6L230.5 615.4L231.0 618.3L231.5 621.2L232.0 623.7L232.5 623.2L233.0 622.8L233.5 623.4L234.0 624.0L234.5 624.6L235.0 625.0L235.5 625.0L236.0 625.0L236.5 625.0L237.0 625.0L237.5 625.0L238.0 625.0L238.5 625.0L239.0 625.0L239.5 625.0L240.0 625.0L240.5 625.0L241.0 625.0L241.5 625.0L242.0 625.0L242.5 625.0L243.0 625.0L243.5 625.0L244.0 625.0L244.5 625.0L245.0 625.0L245.5 625.0L246.0 625.0L246.5 625.0L247.0 625.0L247.5 625.0L248.0 625.0L248.5 625.0L249.0 625.0L249.5 621.4L250.0 617.6L250.5 613.8L251.0 610.1L251.5 613.9L252.0 617.7L252.5 621.5L253.0 625.0L253.5 625.0L254.0 625.0L254.5 622.4L255.0 619.2L255.5 616.0L256.0 612.8L256.5 615.1L257.0 618.3L257.5 620.5L258.0 617.9L258.5 615.2L259.0 616.7L259.5 619.3L260.0 622.0L260.5 623.7L261.0 619.1L261.5 614.4L262.0 609.7L262.5 608.2L263.0 612.8L263.5 617.5L264.0 622.2L264.5 625.0L265.0 625.0L265.5 625.0L266.0 625.0L266.5 625.0L267.0 625.0L267.5 625.0L268.0 625.0L268.5 625.0L269.0 625.0L269.5 625.0L270.0 624.6L270.5 623.5L271.0 622.3L271.5 621.1L272.0 620.9L272.5 622.0L273.0 623.2L273.5 624.4L274.0 625.0L274.5 625.0L275.0 625.0L275.5 623.7L276.0 621.1L276.5 618.4L277.0 615.8L277.5 616.1L278.0 618.7L278.5 620.5L279.0 619.5L279.5 621.0L280.0 622.4L280.5 623.9L281.0 625.0L281.5 625.0L282.0 625.0L282.5 625.0L283.0 625.0L283.5 624.5L284.0 623.6L284.5 622.7L285.0 621.9L285.5 622.1L286.0 623.0L286.5 623.9L287.0 624.8L287.5 625.0L288.0 625.0L288.5 624.7L289.0 622.1L289.5 619.5L290.0 616.9L290.5 615.1L291.0 617.7L291.5 620.3L292.0 623.0L292.5 625.0L293.0 625.0L293.5 623.6L294.0 622.1L294.5 620.7L295.0 619.3L295.5 620.7L296.0 622.2L296.5 623.7L297.0 625.0L297.5 625.0L298.0 625.0L298.5 625.0L299.0 625.0L299.5 625.0L300.0 625.0L300.5 625.0L301.0 625.0L301.5 625.0L302.0 624.9L302.5 621.4L303.0 617.9L303.5 614.4L304.0 611.5L304.5 615.0L305.0 618.5L305.5 622.0L306.0 625.0L306.5 625.0L307.0 625.0L307.5 625.0L308.0 625.0L308.5 624.1L309.0 622.4L309.5 620.6L310.0 618.9L310.5 619.1L311.0 620.8L311.5 622.6L312.0 624.4L312.5 624.8L313.0 620.4L313.5 616.0L314.0 611.7L314.5 608.2L315.0 612.6L315.5 617.0L316.0 619.3L316.5 616.3L317.0 613.6L317.5 616.5L318.0 619.4L318.5 622.4L319.0 625.0L319.5 624.6L320.0 623.7L320.5 622.8L321.0 621.9L321.5 622.0L322.0 622.9L322.5 623.8L323.0 624.7L323.5 625.0L324.0 625.0L324.5 625.0L325.0 625.0L325.5 625.0L326.0 625.0L326.5 625.0L327.0 625.0L327.5 625.0L328.0 625.0L328.5 625.0L329.0 625.0L329.5 625.0L330.0 625.0L330.5 625.0L331.0 625.0L331.5 625.0L332.0 625.0L332.5 625.0L333.0 625.0L333.5 625.0L334.0 625.0L334.5 625.0L335.0 625.0L335.5 625.0L336.0 625.0L336.5 625.0L337.0 625.0L337.5 625.0L338.0 623.7L338.5 621.1L339.0 618.4L339.5 616.1L340.0 615.1L340.5 614.0L341.0 612.9L341.5 611.9L342.0 610.8L342.5 612.3L343.0 614.1L343.5 614.2L344.0 614.4L344.5 615.9L345.0 617.9L345.5 619.8L346.0 621.8L346.5 623.5L347.0 623.4L347.5 623.3L348.0 622.6L348.5 620.2L349.0 617.6L349.5 614.6L350.0 612.2L350.5 613.3L351.0 612.5L351.5 607.8L352.0 606.3L352.5 607.7L353.0 608.3L353.5 607.5L354.0 607.4L354.5 609.4L355.0 611.3L355.5 610.9L356.0 610.4L356.5 608.1L357.0 605.2L357.5 605.6L358.0 606.2L358.5 607.0L359.0 608.0L359.5 609.1L360.0 611.0L360.5 613.6L361.0 617.0L361.5 620.7L362.0 624.5L362.5 625.0L363.0 625.0L363.5 606.3L364.0 606.3L365.4 612.0L366.9 613.6L368.3 607.6L369.8 611.1L371.2 606.6L372.7 606.4L374.1 605.7L375.6 608.5L377.0 605.6L378.5 607.0L379.9 605.6L381.4 606.9L382.8 610.1L384.3 605.5L385.7 607.2L387.2 608.8L388.6 607.0L390.1 611.8L391.5 610.2L393.0 607.0L394.4 606.1L395.9 610.2L397.3 610.7L398.8 605.7L400.2 608.3L401.7 609.5L403.1 605.9L404.6 606.4L406.0 606.9L407.5 605.9L408.9 608.7L410.4 607.3L411.8 606.5L413.3 606.0L414.7 606.4L416.2 609.9L417.6 610.1L419.1 607.0L420.5 606.0L422.0 609.6L423.4 608.0L424.9 606.8L426.3 608.7L427.8 606.2L429.2 611.2L430.7 605.8L432.1 606.7L433.6 606.4L435.0 607.5L436.5 607.0L437.9 605.2L439.4 607.5L440.8 606.0L442.3 606.6L443.7 610.6L445.2 605.6L446.6 611.7L448.1 608.5L449.5 605.4L451.0 609.8L452.4 614.0L453.9 606.1L455.3 610.2L456.8 605.9L458.2 606.9L459.7 610.4L461.1 609.9L462.6 607.1L464.0 609.4L465.5 610.8L466.9 608.6L468.4 610.8L469.8 611.8L471.3 607.0L472.7 606.0L474.2 607.2L475.6 611.2L477.1 606.3L478.5 605.8L480.0 607.3L481.4 605.7L482.9 605.5L484.3 609.6L485.8 611.1L487.2 609.5L488.7 605.2L490.1 610.2L491.6 609.8L493.0 609.6L494.5 606.6L495.9 606.6L497.4 608.7L498.8 606.8L500.3 606.6L501.7 605.7L503.2 605.5L504.6 608.4L506.1 610.0L507.5 609.8L509.0 608.2L510.4 609.2L511.9 605.2L513.3 610.1L514.8 605.3L516.2 610.4L517.7 605.4L519.1 610.9L520.6 605.5L522.0 610.5L523.5 606.3L524.9 606.7L526.4 610.3L527.8 610.4L529.3 606.3L530.7 608.3L532.2 607.1L533.6 605.8L535.1 606.1L536.5 607.2L538.0 609.6L539.4 606.5L540.9 606.6L542.3 611.4L543.8 608.8L545.2 608.9L546.7 611.2L548.1 606.8L549.6 611.2L551.1 608.9L552.5 606.9L554.0 608.4L555.4 607.1L556.9 610.5L558.3 610.1L559.8 606.5L561.2 606.7L562.7 605.9L564.1 605.5L565.6 605.4L567.0 611.0L568.5 605.5L569.9 609.6L571.4 606.6L572.8 605.8L574.3 609.5L575.7 606.0L577.2 606.7L578.6 609.8L580.1 610.5L581.5 611.3L583.0 609.8L584.4 609.2L585.9 605.6L587.3 607.9L588.8 605.8L590.2 606.0L591.7 611.3L593.1 605.6L594.6 606.7L596.0 606.8L597.5 608.9L598.9 607.1L600.4 606.1L601.8 609.8L603.3 605.5L604.7 609.6L606.2 606.1L607.6 609.0L609.1 608.3L610.5 605.3L612.0 610.2L613.4 611.1L614.9 609.6L616.3 605.4L617.8 606.2L619.2 606.6L620.7 605.9L622.1 605.8L623.6 609.1L625.0 606.1L626.5 607.5L627.9 606.8L629.4 610.0L630.8 606.8L632.3 609.4L633.7 610.8L635.2 605.4L636.6 605.4L638.1 608.0L639.5 610.5L641.0 605.9L642.4 605.6L643.9 607.1L645.3 605.6L646.8 606.5L648.2 606.6L649.7 609.8L651.1 605.6L652.6 606.6L654.0 606.5L655.5 608.7L656.9 608.0L658.4 608.6L659.8 605.7L661.3 606.3L662.7 610.1L664.2 614.3L665.6 606.2L667.1 606.3L668.5 612.2L670.0 606.4L671.4 609.5L672.9 610.9L674.3 611.8L675.8 605.2L677.2 607.6L678.7 606.2L680.1 610.9L681.6 605.7L683.0 609.7L684.5 606.1L685.9 610.4L687.4 611.4L688.8 606.5L690.3 610.5L691.7 606.7L693.2 606.1L694.6 605.8L696.1 605.3L697.5 605.5L699.0 609.2L700.4 608.1L701.9 606.0L703.3 607.1L704.8 608.1L706.2 609.7L707.7 610.3L709.1 609.9L710.6 606.9L712.0 613.2L713.5 606.5L714.9 609.7L716.4 605.5L717.8 605.6L719.3 606.9L720.7 606.9L722.2 609.0L723.6 607.8L725.1 605.5L726.5 605.8L728.0 605.3L729.4 611.5L730.9 606.7L732.3 608.3L733.8 610.6L735.2 606.2L736.7 606.5L738.1 610.2L739.6 609.3L741.0 605.9L742.5 610.0L743.9 609.0L745.4 606.6L746.8 609.0L748.3 606.6L749.7 606.2L751.2 606.7L752.6 606.3L754.1 608.4L755.5 609.0L757.0 610.0L758.4 610.7L759.9 606.3L761.3 611.3L762.8 607.9L764.2 605.5L765.7 605.8L767.1 607.0L768.6 606.9L770.0 610.7L771.5 606.1L772.9 605.3L774.4 607.0L775.8 606.4L777.3 605.8L778.7 606.2L780.2 606.7L781.6 605.7L783.1 606.0L784.5 614.0L786.0 607.9L787.4 607.9L788.9 605.5L790.3 605.5L791.8 609.4L793.2 605.9L794.7 606.8L796.1 606.1L797.6 605.4L799.0 605.9L800.5 607.0L801.9 606.1L803.4 609.6L804.8 606.9L806.3 609.1L807.7 608.3L809.2 609.4L810.6 605.8L812.1 609.0L813.5 605.9L815.0 607.0L816.4 607.6L817.9 607.1L819.3 608.6L820.8 606.5L822.2 605.4L823.7 605.8L825.1 610.9L826.6 606.3L828.0 611.4L829.5 614.9L830.9 606.9L832.4 605.9L833.8 607.6L835.3 608.0L836.7 605.9L838.2 611.1L839.6 611.7L841.1 606.8L842.5 608.8L844.0 606.2L845.4 605.7L846.9 606.8L848.3 606.2L849.8 605.1L851.2 608.4L852.7 612.1L854.1 610.7L855.6 606.6L857.0 605.3L858.5 609.2L859.9 608.9L861.4 608.6L862.8 606.2L864.3 613.2L865.7 608.8L867.2 606.0L868.6 606.1L870.1 608.8L871.5 607.9L873.0 608.7L874.4 605.4L875.9 605.8L877.3 605.7L878.8 608.3L880.2 606.2L881.7 606.3L883.1 609.6L884.6 608.1L886.0 611.2L887.5 606.5L888.9 606.9L890.4 610.3L891.8 609.7L893.3 609.1L894.7 609.1L896.2 605.3L897.6 606.2L899.1 606.8L900.5 606.9L902.0 605.8L903.4 606.3L904.9 610.6L906.3 606.7L907.8 611.7L909.2 610.5L910.7 606.1L912.1 606.7L913.6 606.5L915.0 607.9L916.5 607.6L917.9 608.7L919.4 605.7L920.8 607.8L922.3 606.8L923.7 607.4L925.2 606.9L926.6 611.1L928.1 610.0L929.5 608.9L931.0 606.2L932.4 609.7L933.9 614.3L935.3 607.1L936.8 611.1L938.2 607.0L939.7 605.6L941.1 609.7L942.6 607.0L944.0 606.2L945.5 606.6L946.9 611.0L948.4 611.7L949.8 610.6L951.3 605.4L952.7 607.0L954.2 606.0L955.6 607.0L957.1 610.5L958.5 606.7L960.0 605.4L961.4 610.8L962.9 606.3L964.3 609.5L965.8 606.3L967.2 611.3L968.7 611.6L970.1 605.5L971.6 610.6L973.0 608.1L974.5 609.3L975.9 607.2L977.4 606.0L978.8 605.5L980.3 606.9L981.7 608.1L983.2 607.6L984.6 609.6L986.1 610.2L987.5 610.2L989.0 609.1L990.4 610.4L991.9 610.4L993.3 607.0L994.8 606.4L996.2 609.2L997.7 605.5L999.1 605.8L1000.6 605.8L1002.0 611.5L1003.5 606.4L1004.9 608.3L1006.4 606.0L1007.8 608.3L1009.3 608.5L1010.7 609.8L1012.2 610.3L1013.6 605.6L1015.1 606.9L1016.5 606.9L1018.0 606.1L1019.4 606.4L1020.9 611.7L1022.3 605.2L1023.8 605.2L1025.2 605.2L1026.7 605.5L1028.1 609.7L1029.6 606.7L1031.0 605.6L1032.5 608.2L1033.9 610.3L1035.4 607.4L1036.8 610.1L1038.3 606.9L1039.7 610.2L1041.2 606.2L1042.6 607.0L1044.1 608.8L1045.5 606.7L1047.0 609.3L1048.4 608.6L1049.9 608.2L1051.3 606.2L1052.8 605.8L1054.2 609.1L1055.7 605.2L1057.1 607.8L1058.6 606.0L1060.0 605.7L1061.5 606.4L1062.9 606.6L1064.4 606.4L1065.8 610.7L1067.3 606.4L1068.7 605.5L1070.2 606.2L1071.6 609.5L1073.1 610.4L1074.5 609.5L1076.0 607.5L1077.4 611.0L1078.9 607.7L1080.3 608.0L1081.8 609.7L1083.2 610.8L1084.7 607.0L1086.1 613.3L1087.6 606.5L1089.0 610.7L1090.5 610.2L1091.0 606.6L1091 625Z" fill="#62501a"/>
<rect x="221" y="627" width="870" height="23" fill="#6cb75f"/>
<rect x="221" y="627" width="870" height="1" fill="#417a39"/>
<rect x="221" y="627" width="1" height="23" fill="#4a8741"/>
<rect x="1090" y="627" width="1" height="23" fill="#4a8741"/>
<path d="M221 650L221.0 650.0L221.5 650.0L222.0 650.0L222.5 650.0L223.0 650.0L223.5 650.0L224.0 649.0L224.5 647.5L225.0 646.0L225.5 644.6L226.0 645.4L226.5 646.8L227.0 647.1L227.5 645.4L228.0 643.6L228.5 644.3L229.0 646.1L229.5 647.8L230.0 649.6L230.5 650.0L231.0 650.0L231.5 649.2L232.0 647.4L232.5 645.7L233.0 643.9L233.5 644.1L234.0 645.8L234.5 647.6L235.0 649.3L235.5 650.0L236.0 650.0L236.5 650.0L237.0 650.0L237.5 650.0L238.0 650.0L238.5 650.0L239.0 650.0L239.5 650.0L240.0 649.7L240.5 649.1L241.0 648.5L241.5 647.9L242.0 648.1L242.5 648.6L243.0 649.2L243.5 649.8L244.0 650.0L244.5 650.0L245.0 650.0L245.5 650.0L246.0 650.0L246.5 650.0L247.0 650.0L247.5 650.0L248.0 649.5L248.5 648.1L249.0 646.6L249.5 645.2L250.0 644.8L250.5 646.3L251.0 647.7L251.5 649.2L252.0 648.2L252.5 646.2L253.0 644.1L253.5 642.1L254.0 643.9L254.5 645.9L255.0 648.0L255.5 650.0L256.0 650.0L256.5 650.0L257.0 650.0L257.5 650.0L258.0 650.0L258.5 650.0L259.0 650.0L259.5 650.0L260.0 650.0L260.5 650.0L261.0 650.0L261.5 650.0L262.0 650.0L262.5 650.0L263.0 650.0L263.5 650.0L264.0 649.7L264.5 648.0L265.0 646.2L265.5 644.4L266.0 643.5L266.5 645.3L267.0 647.0L267.5 648.8L268.0 650.0L268.5 650.0L269.0 650.0L269.5 650.0L270.0 650.0L270.5 650.0L271.0 650.0L271.5 650.0L272.0 650.0L272.5 650.0L273.0 650.0L273.5 650.0L274.0 650.0L274.5 650.0L275.0 650.0L275.5 650.0L276.0 650.0L276.5 650.0L277.0 650.0L277.5 650.0L278.0 650.0L278.5 650.0L279.0 647.5L279.5 644.0L280.0 640.4L280.5 636.9L281.0 639.0L281.5 642.5L282.0 643.7L282.5 639.9L283.0 636.1L283.5 637.8L284.0 641.6L284.5 645.4L285.0 649.2L285.5 649.1L286.0 644.4L286.5 639.8L287.0 635.1L287.5 632.8L288.0 637.5L288.5 642.1L289.0 643.8L289.5 640.9L290.0 639.0L290.5 641.9L291.0 644.9L291.5 639.9L292.0 634.9L292.5 630.9L293.0 635.9L293.5 640.9L294.0 645.8L294.5 650.0L295.0 650.0L295.5 650.0L296.0 650.0L296.5 650.0L297.0 650.0L297.5 650.0L298.0 650.0L298.5 650.0L299.0 649.9L299.5 649.0L300.0 648.1L300.5 647.3L301.0 646.7L301.5 647.6L302.0 648.5L302.5 649.3L303.0 650.0L303.5 650.0L304.0 650.0L304.5 650.0L305.0 650.0L305.5 650.0L306.0 650.0L306.5 650.0L307.0 650.0L307.5 650.0L308.0 650.0L308.5 650.0L309.0 650.0L309.5 646.0L310.0 641.0L310.5 636.0L311.0 631.1L311.5 634.8L312.0 639.8L312.5 644.7L313.0 649.7L313.5 650.0L314.0 650.0L314.5 648.8L315.0 647.1L315.5 645.3L316.0 643.6L316.5 644.4L317.0 646.1L317.5 646.0L318.0 641.6L318.5 637.3L319.0 632.9L319.5 637.0L320.0 641.4L320.5 645.8L321.0 650.0L321.5 650.0L322.0 650.0L322.5 650.0L323.0 650.0L323.5 650.0L324.0 650.0L324.5 650.0L325.0 650.0L325.5 650.0L326.0 650.0L326.5 650.0L327.0 650.0L327.5 650.0L328.0 650.0L328.5 650.0L329.0 650.0L329.5 650.0L330.0 650.0L330.5 650.0L331.0 650.0L331.5 650.0L332.0 650.0L332.5 650.0L333.0 650.0L333.5 650.0L334.0 650.0L334.5 650.0L335.0 650.0L335.5 650.0L336.0 650.0L336.5 649.6L337.0 649.0L337.5 650.0L338.0 649.2L338.5 647.5L339.0 645.7L339.5 644.0L340.0 642.5L340.5 641.1L341.0 639.7L341.5 638.9L342.0 640.1L342.5 641.4L343.0 642.5L343.5 641.8L344.0 641.0L344.5 641.7L345.0 642.9L345.5 644.1L346.0 645.3L346.5 646.1L347.0 646.7L347.5 647.2L348.0 647.3L348.5 645.3L349.0 643.4L349.5 641.5L350.0 639.6L350.5 636.9L351.0 634.2L351.5 632.5L352.0 634.4L352.5 636.0L353.0 632.8L353.5 630.2L354.0 631.1L354.5 631.9L355.0 632.5L355.5 633.0L356.0 633.3L356.5 633.1L357.0 632.8L357.5 632.3L358.0 632.0L358.5 631.8L359.0 631.6L359.5 634.6L360.0 637.5L360.5 636.9L361.0 640.2L361.5 644.8L362.0 649.3L362.5 650.0L363.0 650.0L363.5 631.4L364.0 631.4L365.4 633.6L366.9 635.3L368.3 631.4L369.8 631.0L371.2 635.8L372.7 631.0L374.1 631.4L375.6 630.4L377.0 630.3L378.5 630.4L379.9 632.1L381.4 635.3L382.8 635.4L384.3 634.4L385.7 633.8L387.2 634.5L388.6 633.4L390.1 633.9L391.5 635.2L393.0 633.6L394.4 631.4L395.9 631.5L397.3 631.7L398.8 630.4L400.2 635.2L401.7 630.6L403.1 636.7L404.6 631.3L406.0 630.5L407.5 631.9L408.9 632.9L410.4 631.7L411.8 631.2L413.3 630.8L414.7 632.1L416.2 633.2L417.6 630.4L419.1 634.8L420.5 630.7L422.0 633.7L423.4 631.6L424.9 634.1L426.3 633.6L427.8 634.0L429.2 635.8L430.7 637.0L432.1 630.1L433.6 636.2L435.0 633.8L436.5 632.5L437.9 630.5L439.4 630.2L440.8 635.8L442.3 634.2L443.7 636.2L445.2 630.6L446.6 630.5L448.1 630.9L449.5 631.3L451.0 631.1L452.4 633.3L453.9 632.8L455.3 635.2L456.8 636.0L458.2 633.3L459.7 631.2L461.1 636.6L462.6 631.8L464.0 631.7L465.5 634.7L466.9 630.5L468.4 631.3L469.8 635.0L471.3 633.2L472.7 635.0L474.2 634.6L475.6 636.6L477.1 635.8L478.5 630.5L480.0 630.4L481.4 631.0L482.9 635.8L484.3 630.3L485.8 631.8L487.2 631.0L488.7 630.5L490.1 635.4L491.6 635.7L493.0 631.5L494.5 632.0L495.9 634.4L497.4 631.9L498.8 635.4L500.3 634.0L501.7 636.3L503.2 631.6L504.6 630.6L506.1 630.5L507.5 630.8L509.0 631.9L510.4 631.5L511.9 634.8L513.3 630.2L514.8 630.4L516.2 631.7L517.7 630.2L519.1 635.6L520.6 636.6L522.0 633.7L523.5 633.7L524.9 633.7L526.4 630.8L527.8 638.5L529.3 631.7L530.7 632.1L532.2 632.3L533.6 631.1L535.1 633.6L536.5 630.5L538.0 630.6L539.4 639.6L540.9 631.3L542.3 630.5L543.8 634.2L545.2 631.1L546.7 634.2L548.1 632.1L549.6 633.8L551.1 635.0L552.5 636.0L554.0 631.4L555.4 634.7L556.9 631.5L558.3 631.4L559.8 630.9L561.2 631.4L562.7 636.3L564.1 631.0L565.6 631.1L567.0 634.9L568.5 634.9L569.9 634.0L571.4 632.0L572.8 632.6L574.3 635.1L575.7 635.4L577.2 634.2L578.6 632.8L580.1 631.5L581.5 635.5L583.0 635.0L584.4 631.2L585.9 631.2L587.3 630.7L588.8 633.7L590.2 631.0L591.7 631.5L593.1 631.1L594.6 632.2L596.0 631.5L597.5 633.1L598.9 637.3L600.4 631.8L601.8 635.3L603.3 632.9L604.7 633.8L606.2 634.1L607.6 632.0L609.1 634.8L610.5 637.7L612.0 632.6L613.4 635.7L614.9 630.8L616.3 633.8L617.8 631.1L619.2 631.0L620.7 633.5L622.1 633.7L623.6 631.8L625.0 636.1L626.5 632.5L627.9 631.6L629.4 634.3L630.8 631.0L632.3 631.3L633.7 634.3L635.2 630.9L636.6 630.8L638.1 631.0L639.5 630.6L641.0 630.4L642.4 630.9L643.9 633.0L645.3 635.3L646.8 636.0L648.2 634.6L649.7 630.7L651.1 631.9L652.6 632.2L654.0 633.6L655.5 630.4L656.9 636.1L658.4 634.0L659.8 631.0L661.3 636.2L662.7 633.6L664.2 630.5L665.6 631.4L667.1 632.0L668.5 634.4L670.0 631.0L671.4 631.9L672.9 638.1L674.3 635.7L675.8 630.2L677.2 635.6L678.7 634.8L680.1 632.5L681.6 635.5L683.0 630.8L684.5 630.7L685.9 631.8L687.4 633.4L688.8 635.9L690.3 636.0L691.7 632.8L693.2 632.7L694.6 637.6L696.1 630.2L697.5 633.2L699.0 631.2L700.4 633.4L701.9 638.6L703.3 630.3L704.8 636.0L706.2 631.5L707.7 632.6L709.1 630.4L710.6 636.2L712.0 631.5L713.5 633.9L714.9 633.7L716.4 631.4L717.8 634.2L719.3 631.3L720.7 630.6L722.2 632.2L723.6 630.5L725.1 631.9L726.5 630.6L728.0 630.8L729.4 632.6L730.9 639.7L732.3 635.8L733.8 630.9L735.2 630.8L736.7 631.1L738.1 635.6L739.6 637.2L741.0 632.0L742.5 635.4L743.9 631.2L745.4 631.5L746.8 640.4L748.3 632.0L749.7 631.1L751.2 632.2L752.6 631.1L754.1 631.5L755.5 631.0L757.0 631.5L758.4 631.1L759.9 634.0L761.3 632.3L762.8 631.2L764.2 632.4L765.7 634.5L767.1 632.1L768.6 634.5L770.0 634.0L771.5 632.6L772.9 635.1L774.4 631.3L775.8 631.6L777.3 637.5L778.7 630.6L780.2 632.1L781.6 631.2L783.1 630.6L784.5 635.8L786.0 631.4L787.4 632.1L788.9 631.1L790.3 631.0L791.8 635.8L793.2 633.8L794.7 632.2L796.1 630.8L797.6 635.8L799.0 636.0L800.5 632.3L801.9 630.9L803.4 631.0L804.8 636.4L806.3 634.8L807.7 630.7L809.2 633.8L810.6 632.2L812.1 631.1L813.5 636.0L815.0 632.5L816.4 632.1L817.9 631.8L819.3 632.1L820.8 630.3L822.2 632.6L823.7 635.1L825.1 632.9L826.6 631.4L828.0 633.4L829.5 630.8L830.9 630.3L832.4 634.2L833.8 631.0L835.3 631.8L836.7 631.0L838.2 636.0L839.6 631.0L841.1 631.5L842.5 635.5L844.0 636.2L845.4 634.4L846.9 635.4L848.3 631.7L849.8 631.5L851.2 630.9L852.7 631.8L854.1 631.4L855.6 636.4L857.0 632.1L858.5 634.1L859.9 632.0L861.4 630.4L862.8 634.8L864.3 637.2L865.7 634.5L867.2 630.4L868.6 630.7L870.1 631.0L871.5 630.8L873.0 631.1L874.4 634.3L875.9 634.2L877.3 631.5L878.8 630.6L880.2 638.5L881.7 631.2L883.1 636.9L884.6 631.8L886.0 631.6L887.5 635.7L888.9 633.2L890.4 630.8L891.8 634.7L893.3 632.3L894.7 630.8L896.2 635.2L897.6 633.9L899.1 633.1L900.5 630.9L902.0 635.8L903.4 630.4L904.9 631.5L906.3 635.7L907.8 632.3L909.2 631.8L910.7 633.3L912.1 634.9L913.6 632.5L915.0 632.1L916.5 631.0L917.9 631.9L919.4 631.5L920.8 634.6L922.3 635.1L923.7 632.3L925.2 635.3L926.6 633.7L928.1 632.4L929.5 631.9L931.0 631.2L932.4 635.5L933.9 633.5L935.3 631.5L936.8 631.0L938.2 636.2L939.7 632.0L941.1 631.3L942.6 633.4L944.0 632.2L945.5 634.3L946.9 632.0L948.4 636.5L949.8 631.4L951.3 632.4L952.7 631.1L954.2 635.8L955.6 631.4L957.1 631.6L958.5 633.5L960.0 636.4L961.4 631.6L962.9 630.7L964.3 636.1L965.8 634.7L967.2 631.1L968.7 630.5L970.1 632.0L971.6 632.8L973.0 631.6L974.5 633.7L975.9 630.5L977.4 632.0L978.8 634.3L980.3 630.6L981.7 632.4L983.2 634.7L984.6 630.8L986.1 632.4L987.5 633.7L989.0 634.9L990.4 636.1L991.9 631.9L993.3 631.4L994.8 636.2L996.2 633.4L997.7 638.7L999.1 632.8L1000.6 632.2L1002.0 630.7L1003.5 632.1L1004.9 631.8L1006.4 631.0L1007.8 631.1L1009.3 631.1L1010.7 632.0L1012.2 636.5L1013.6 634.1L1015.1 633.8L1016.5 634.4L1018.0 630.5L1019.4 634.3L1020.9 632.1L1022.3 632.0L1023.8 631.7L1025.2 630.6L1026.7 634.1L1028.1 635.0L1029.6 630.5L1031.0 631.6L1032.5 633.0L1033.9 634.5L1035.4 631.9L1036.8 630.8L1038.3 634.2L1039.7 630.8L1041.2 631.4L1042.6 635.4L1044.1 630.9L1045.5 630.4L1047.0 630.8L1048.4 635.4L1049.9 638.2L1051.3 634.2L1052.8 631.6L1054.2 630.6L1055.7 631.5L1057.1 637.6L1058.6 631.0L1060.0 633.9L1061.5 631.3L1062.9 631.1L1064.4 633.2L1065.8 634.3L1067.3 631.8L1068.7 630.6L1070.2 634.6L1071.6 634.0L1073.1 631.4L1074.5 635.4L1076.0 632.0L1077.4 631.7L1078.9 634.2L1080.3 636.4L1081.8 632.5L1083.2 632.5L1084.7 631.3L1086.1 634.2L1087.6 631.2L1089.0 634.9L1090.5 636.7L1091.0 630.7L1091 650Z" fill="#62501a"/>
<rect x="221" y="653" width="870" height="22" fill="#6cb75f"/>
<rect x="221" y="653" width="870" height="1" fill="#417a39"/>
<rect x="221" y="653" width="1" height="22" fill="#4a8741"/>
<rect x="1090" y="653" width="1" height="22" fill="#4a8741"/>
<path d="M221 675L221.0 669.6L221.5 666.0L222.0 662.4L222.5 662.7L223.0 666.3L223.5 666.6L224.0 668.1L224.5 670.3L225.0 672.5L225.5 674.8L226.0 675.0L226.5 674.3L227.0 673.2L227.5 672.1L228.0 670.9L228.5 671.4L229.0 672.5L229.5 673.6L230.0 674.7L230.5 675.0L231.0 675.0L231.5 675.0L232.0 675.0L232.5 675.0L233.0 675.0L233.5 675.0L234.0 673.2L234.5 668.7L235.0 664.3L235.5 659.8L236.0 659.5L236.5 664.0L237.0 664.9L237.5 662.1L238.0 665.4L238.5 662.5L239.0 657.7L239.5 659.6L240.0 664.4L240.5 667.5L241.0 664.1L241.5 662.8L242.0 666.2L242.5 664.7L243.0 659.9L243.5 657.4L244.0 662.2L244.5 666.9L245.0 671.7L245.5 675.0L246.0 675.0L246.5 675.0L247.0 675.0L247.5 675.0L248.0 675.0L248.5 675.0L249.0 675.0L249.5 675.0L250.0 675.0L250.5 675.0L251.0 675.0L251.5 675.0L252.0 673.3L252.5 671.3L253.0 669.4L253.5 667.4L254.0 669.1L254.5 671.1L255.0 673.0L255.5 673.8L256.0 671.0L256.5 668.2L257.0 665.4L257.5 665.4L258.0 668.2L258.5 671.0L259.0 673.8L259.5 675.0L260.0 675.0L260.5 675.0L261.0 675.0L261.5 675.0L262.0 675.0L262.5 675.0L263.0 675.0L263.5 674.3L264.0 670.4L264.5 666.5L265.0 662.6L265.5 660.6L266.0 664.5L266.5 668.4L267.0 669.8L267.5 665.1L268.0 660.3L268.5 657.0L269.0 661.8L269.5 666.5L270.0 666.5L270.5 664.3L271.0 667.1L271.5 669.8L272.0 668.5L272.5 665.1L273.0 661.9L273.5 665.2L274.0 664.9L274.5 661.0L275.0 662.1L275.5 666.0L276.0 664.3L276.5 662.6L277.0 666.0L277.5 669.3L278.0 672.7L278.5 675.0L279.0 674.9L279.5 673.8L280.0 672.7L280.5 671.6L281.0 670.7L281.5 671.8L282.0 673.0L282.5 674.1L283.0 674.3L283.5 671.8L284.0 669.3L284.5 666.8L285.0 665.9L285.5 668.4L286.0 671.0L286.5 670.7L287.0 671.7L287.5 672.8L288.0 673.9L288.5 675.0L289.0 675.0L289.5 675.0L290.0 675.0L290.5 675.0L291.0 675.0L291.5 675.0L292.0 675.0L292.5 675.0L293.0 675.0L293.5 675.0L294.0 675.0L294.5 675.0L295.0 672.4L295.5 668.0L296.0 663.5L296.5 659.0L297.0 660.3L297.5 664.7L298.0 664.3L298.5 662.7L299.0 666.0L299.5 661.7L300.0 656.9L300.5 660.4L301.0 665.2L301.5 668.2L302.0 664.3L302.5 660.4L303.0 662.7L303.5 666.6L304.0 667.5L304.5 664.7L305.0 666.1L305.5 668.8L306.0 664.2L306.5 659.5L307.0 657.9L307.5 662.6L308.0 667.4L308.5 666.3L309.0 668.3L309.5 670.6L310.0 672.8L310.5 675.0L311.0 673.8L311.5 671.0L312.0 668.2L312.5 665.4L313.0 665.4L313.5 668.2L314.0 671.0L314.5 673.8L315.0 675.0L315.5 675.0L316.0 675.0L316.5 675.0L317.0 675.0L317.5 675.0L318.0 675.0L318.5 675.0L319.0 675.0L319.5 675.0L320.0 675.0L320.5 675.0L321.0 675.0L321.5 674.7L322.0 674.4L322.5 674.1L323.0 674.0L323.5 674.2L324.0 674.5L324.5 674.8L325.0 675.0L325.5 675.0L326.0 675.0L326.5 674.7L327.0 674.4L327.5 674.2L328.0 673.9L328.5 674.2L329.0 674.5L329.5 674.7L330.0 675.0L330.5 675.0L331.0 675.0L331.5 675.0L332.0 675.0L332.5 675.0L333.0 675.0L333.5 675.0L334.0 675.0L334.5 675.0L335.0 675.0L335.5 675.0L336.0 675.0L336.5 675.0L337.0 675.0L337.5 675.0L338.0 673.7L338.5 671.1L339.0 668.4L339.5 665.7L340.0 664.0L340.5 662.6L341.0 661.1L341.5 659.7L342.0 659.3L342.5 661.8L343.0 664.1L343.5 664.5L344.0 665.0L344.5 666.3L345.0 667.9L345.5 669.6L346.0 671.1L346.5 671.7L347.0 672.3L347.5 672.9L348.0 672.8L348.5 670.0L349.0 667.4L349.5 667.0L350.0 666.7L350.5 665.9L351.0 664.0L351.5 663.1L352.0 663.4L352.5 663.7L353.0 663.4L353.5 663.0L354.0 661.3L354.5 659.1L355.0 659.3L355.5 659.9L356.0 658.8L356.5 657.6L357.0 656.7L357.5 656.5L358.0 656.2L358.5 656.0L359.0 655.9L359.5 658.1L360.0 661.2L360.5 664.4L361.0 667.7L361.5 671.1L362.0 674.5L362.5 675.0L363.0 675.0L363.5 657.6L364.0 657.6L365.4 656.6L366.9 660.2L368.3 656.6L369.8 660.2L371.2 659.3L372.7 658.4L374.1 663.8L375.6 657.2L377.0 661.5L378.5 661.1L379.9 664.2L381.4 661.2L382.8 661.7L384.3 661.1L385.7 657.9L387.2 657.4L388.6 659.3L390.1 658.5L391.5 656.4L393.0 657.8L394.4 658.6L395.9 660.6L397.3 657.9L398.8 661.2L400.2 661.8L401.7 658.3L403.1 661.9L404.6 659.6L406.0 662.0L407.5 665.7L408.9 658.5L410.4 657.1L411.8 656.6L413.3 662.3L414.7 659.9L416.2 657.0L417.6 656.9L419.1 661.9L420.5 657.7L422.0 661.8L423.4 662.1L424.9 660.6L426.3 658.4L427.8 657.7L429.2 660.3L430.7 660.1L432.1 658.0L433.6 661.9L435.0 661.7L436.5 657.7L437.9 656.7L439.4 657.0L440.8 660.1L442.3 661.0L443.7 658.4L445.2 656.6L446.6 657.9L448.1 657.9L449.5 662.9L451.0 657.3L452.4 656.6L453.9 661.2L455.3 657.2L456.8 658.0L458.2 657.1L459.7 662.0L461.1 659.0L462.6 660.6L464.0 662.8L465.5 656.5L466.9 658.3L468.4 659.0L469.8 660.9L471.3 664.0L472.7 663.3L474.2 662.1L475.6 661.9L477.1 658.9L478.5 662.8L480.0 660.7L481.4 662.1L482.9 656.9L484.3 658.3L485.8 658.2L487.2 663.7L488.7 658.0L490.1 657.1L491.6 656.6L493.0 657.5L494.5 656.9L495.9 656.8L497.4 661.1L498.8 661.6L500.3 662.7L501.7 657.6L503.2 662.6L504.6 658.6L506.1 659.5L507.5 658.0L509.0 661.4L510.4 658.2L511.9 657.0L513.3 658.4L514.8 658.3L516.2 659.1L517.7 656.9L519.1 656.9L520.6 659.9L522.0 658.6L523.5 657.8L524.9 661.9L526.4 658.4L527.8 657.4L529.3 658.5L530.7 660.6L532.2 658.4L533.6 657.6L535.1 656.7L536.5 660.0L538.0 661.2L539.4 662.4L540.9 657.4L542.3 660.9L543.8 656.8L545.2 659.2L546.7 658.1L548.1 658.6L549.6 658.3L551.1 658.2L552.5 662.6L554.0 661.6L555.4 658.6L556.9 663.8L558.3 659.7L559.8 659.7L561.2 658.7L562.7 658.5L564.1 658.1L565.6 657.2L567.0 661.1L568.5 661.0L569.9 657.2L571.4 663.1L572.8 657.6L574.3 662.3L575.7 661.3L577.2 661.9L578.6 656.7L580.1 660.4L581.5 665.7L583.0 661.6L584.4 661.3L585.9 658.0L587.3 656.9L588.8 659.7L590.2 663.3L591.7 658.6L593.1 658.2L594.6 658.1L596.0 657.2L597.5 659.7L598.9 664.2L600.4 660.9L601.8 658.9L603.3 664.6L604.7 656.5L606.2 658.2L607.6 663.0L609.1 658.5L610.5 659.9L612.0 662.2L613.4 660.1L614.9 663.4L616.3 663.3L617.8 663.3L619.2 662.1L620.7 657.3L622.1 658.3L623.6 658.2L625.0 661.3L626.5 658.5L627.9 663.8L629.4 656.9L630.8 658.0L632.3 656.9L633.7 657.2L635.2 657.9L636.6 656.8L638.1 659.2L639.5 661.3L641.0 657.7L642.4 662.3L643.9 660.9L645.3 662.8L646.8 660.5L648.2 658.0L649.7 662.6L651.1 663.4L652.6 662.2L654.0 657.8L655.5 656.5L656.9 661.9L658.4 665.0L659.8 658.4L661.3 663.0L662.7 660.0L664.2 658.3L665.6 656.9L667.1 664.3L668.5 656.9L670.0 660.5L671.4 656.7L672.9 659.6L674.3 660.1L675.8 659.2L677.2 660.3L678.7 657.2L680.1 659.4L681.6 657.1L683.0 658.8L684.5 657.1L685.9 662.0L687.4 658.2L688.8 659.7L690.3 661.5L691.7 661.0L693.2 659.0L694.6 658.8L696.1 663.5L697.5 657.8L699.0 658.0L700.4 661.2L701.9 659.3L703.3 656.3L704.8 657.1L706.2 659.9L707.7 656.6L709.1 657.7L710.6 658.0L712.0 659.7L713.5 660.0L714.9 658.0L716.4 660.0L717.8 657.2L719.3 664.6L720.7 658.3L722.2 657.6L723.6 661.5L725.1 661.3L726.5 661.8L728.0 662.5L729.4 661.0L730.9 663.3L732.3 662.5L733.8 660.7L735.2 661.5L736.7 662.6L738.1 657.5L739.6 658.3L741.0 657.9L742.5 662.1L743.9 663.2L745.4 657.4L746.8 664.0L748.3 661.6L749.7 660.6L751.2 660.6L752.6 664.6L754.1 660.9L755.5 656.6L757.0 658.5L758.4 661.7L759.9 656.9L761.3 664.7L762.8 660.2L764.2 656.9L765.7 660.0L767.1 657.8L768.6 660.1L770.0 660.0L771.5 657.4L772.9 659.9L774.4 660.1L775.8 660.9L777.3 657.1L778.7 661.9L780.2 659.7L781.6 656.9L783.1 660.4L784.5 658.8L786.0 656.8L787.4 661.9L788.9 661.9L790.3 661.2L791.8 662.6L793.2 657.1L794.7 661.2L796.1 656.8L797.6 659.8L799.0 662.2L800.5 657.1L801.9 656.7L803.4 663.0L804.8 657.3L806.3 663.3L807.7 661.9L809.2 660.8L810.6 657.6L812.1 664.3L813.5 657.5L815.0 657.4L816.4 659.5L817.9 666.0L819.3 656.6L820.8 658.3L822.2 658.5L823.7 661.4L825.1 656.9L826.6 658.4L828.0 657.1L829.5 656.9L830.9 658.2L832.4 658.3L833.8 659.3L835.3 660.4L836.7 661.6L838.2 661.6L839.6 656.9L841.1 658.9L842.5 657.1L844.0 657.1L845.4 665.7L846.9 660.4L848.3 656.8L849.8 662.6L851.2 658.0L852.7 660.7L854.1 660.5L855.6 660.3L857.0 657.7L858.5 661.7L859.9 658.6L861.4 658.6L862.8 660.9L864.3 657.7L865.7 658.1L867.2 657.8L868.6 660.3L870.1 661.5L871.5 656.5L873.0 661.2L874.4 657.5L875.9 658.5L877.3 665.8L878.8 659.7L880.2 664.0L881.7 662.6L883.1 662.4L884.6 658.6L886.0 658.4L887.5 657.7L888.9 658.6L890.4 657.7L891.8 659.8L893.3 658.4L894.7 658.4L896.2 662.9L897.6 657.7L899.1 658.5L900.5 658.6L902.0 657.8L903.4 656.5L904.9 658.2L906.3 657.4L907.8 658.2L909.2 660.2L910.7 656.7L912.1 661.8L913.6 657.0L915.0 656.6L916.5 656.9L917.9 661.1L919.4 662.3L920.8 658.2L922.3 658.3L923.7 657.2L925.2 657.8L926.6 661.2L928.1 657.3L929.5 657.5L931.0 662.9L932.4 658.6L933.9 658.1L935.3 658.2L936.8 657.9L938.2 663.3L939.7 661.5L941.1 657.8L942.6 657.3L944.0 657.2L945.5 657.8L946.9 658.7L948.4 657.4L949.8 661.1L951.3 660.6L952.7 661.8L954.2 663.8L955.6 660.4L957.1 657.7L958.5 660.2L960.0 658.9L961.4 661.1L962.9 660.1L964.3 662.3L965.8 661.3L967.2 658.8L968.7 662.6L970.1 658.0L971.6 657.4L973.0 663.2L974.5 658.4L975.9 662.9L977.4 658.4L978.8 656.8L980.3 656.6L981.7 660.7L983.2 662.7L984.6 662.5L986.1 657.7L987.5 657.8L989.0 659.1L990.4 659.0L991.9 661.3L993.3 661.2L994.8 658.7L996.2 662.9L997.7 661.5L999.1 658.0L1000.6 660.2L1002.0 659.4L1003.5 660.4L1004.9 658.9L1006.4 662.8L1007.8 664.6L1009.3 662.1L1010.7 657.8L1012.2 661.1L1013.6 660.5L1015.1 661.3L1016.5 660.3L1018.0 663.2L1019.4 658.6L1020.9 657.4L1022.3 657.1L1023.8 663.7L1025.2 660.8L1026.7 661.6L1028.1 659.2L1029.6 660.7L1031.0 657.1L1032.5 663.4L1033.9 661.3L1035.4 657.4L1036.8 658.7L1038.3 657.2L1039.7 660.5L1041.2 661.6L1042.6 657.4L1044.1 660.3L1045.5 662.4L1047.0 659.4L1048.4 664.1L1049.9 659.0L1051.3 657.1L1052.8 663.3L1054.2 657.8L1055.7 658.8L1057.1 656.9L1058.6 656.9L1060.0 658.2L1061.5 661.9L1062.9 660.2L1064.4 658.3L1065.8 657.1L1067.3 659.7L1068.7 662.4L1070.2 657.8L1071.6 657.5L1073.1 659.8L1074.5 662.5L1076.0 662.5L1077.4 657.2L1078.9 658.0L1080.3 657.3L1081.8 658.4L1083.2 657.0L1084.7 658.5L1086.1 663.3L1087.6 658.8L1089.0 657.4L1090.5 658.6L1091.0 657.7L1091 675Z" fill="#62501a"/>
<rect x="221" y="678" width="870" height="23" fill="#6cb75f"/>
<rect x="221" y="678" width="870" height="1" fill="#417a39"/>
<rect x="221" y="678" width="1" height="23" fill="#4a8741"/>
<rect x="1090" y="678" width="1" height="23" fill="#4a8741"/>
<path d="M221 701L221.0 701.0L221.5 701.0L222.0 701.0L222.5 701.0L223.0 701.0L223.5 701.0L224.0 701.0L224.5 701.0L225.0 701.0L225.5 701.0L226.0 701.0L226.5 701.0L227.0 701.0L227.5 701.0L228.0 701.0L228.5 701.0L229.0 701.0L229.5 701.0L230.0 701.0L230.5 701.0L231.0 701.0L231.5 701.0L232.0 701.0L232.5 701.0L233.0 701.0L233.5 701.0L234.0 701.0L234.5 701.0L235.0 701.0L235.5 701.0L236.0 701.0L236.5 701.0L237.0 701.0L237.5 701.0L238.0 701.0L238.5 701.0L239.0 701.0L239.5 701.0L240.0 701.0L240.5 701.0L241.0 701.0L241.5 701.0L242.0 701.0L242.5 701.0L243.0 701.0L243.5 701.0L244.0 701.0L244.5 701.0L245.0 701.0L245.5 701.0L246.0 701.0L246.5 701.0L247.0 701.0L247.5 701.0L248.0 701.0L248.5 701.0L249.0 701.0L249.5 701.0L250.0 701.0L250.5 701.0L251.0 701.0L251.5 701.0L252.0 701.0L252.5 701.0L253.0 701.0L253.5 701.0L254.0 701.0L254.5 701.0L255.0 701.0L255.5 701.0L256.0 701.0L256.5 701.0L257.0 701.0L257.5 701.0L258.0 701.0L258.5 701.0L259.0 701.0L259.5 701.0L260.0 701.0L260.5 701.0L261.0 701.0L261.5 701.0L262.0 701.0L262.5 701.0L263.0 701.0L263.5 701.0L264.0 701.0L264.5 701.0L265.0 701.0L265.5 701.0L266.0 701.0L266.5 701.0L267.0 701.0L267.5 701.0L268.0 701.0L268.5 701.0L269.0 701.0L269.5 701.0L270.0 701.0L270.5 701.0L271.0 701.0L271.5 701.0L272.0 701.0L272.5 701.0L273.0 701.0L273.5 701.0L274.0 701.0L274.5 701.0L275.0 701.0L275.5 701.0L276.0 701.0L276.5 701.0L277.0 701.0L277.5 701.0L278.0 701.0L278.5 701.0L279.0 701.0L279.5 701.0L280.0 701.0L280.5 701.0L281.0 701.0L281.5 701.0L282.0 701.0L282.5 701.0L283.0 701.0L283.5 701.0L284.0 701.0L284.5 701.0L285.0 701.0L285.5 701.0L286.0 701.0L286.5 701.0L287.0 701.0L287.5 701.0L288.0 701.0L288.5 701.0L289.0 701.0L289.5 701.0L290.0 701.0L290.5 701.0L291.0 701.0L291.5 701.0L292.0 701.0L292.5 701.0L293.0 701.0L293.5 701.0L294.0 701.0L294.5 701.0L295.0 701.0L295.5 701.0L296.0 701.0L296.5 701.0L297.0 701.0L297.5 701.0L298.0 701.0L298.5 701.0L299.0 701.0L299.5 701.0L300.0 701.0L300.5 701.0L301.0 701.0L301.5 701.0L302.0 701.0L302.5 701.0L303.0 701.0L303.5 701.0L304.0 701.0L304.5 701.0L305.0 701.0L305.5 701.0L306.0 701.0L306.5 701.0L307.0 701.0L307.5 701.0L308.0 701.0L308.5 701.0L309.0 701.0L309.5 701.0L310.0 701.0L310.5 701.0L311.0 701.0L311.5 701.0L312.0 701.0L312.5 701.0L313.0 701.0L313.5 701.0L314.0 701.0L314.5 701.0L315.0 701.0L315.5 701.0L316.0 701.0L316.5 701.0L317.0 701.0L317.5 701.0L318.0 701.0L318.5 701.0L319.0 701.0L319.5 701.0L320.0 701.0L320.5 701.0L321.0 701.0L321.5 701.0L322.0 701.0L322.5 701.0L323.0 701.0L323.5 701.0L324.0 701.0L324.5 701.0L325.0 701.0L325.5 701.0L326.0 701.0L326.5 701.0L327.0 701.0L327.5 701.0L328.0 701.0L328.5 701.0L329.0 701.0L329.5 701.0L330.0 701.0L330.5 701.0L331.0 701.0L331.5 701.0L332.0 701.0L332.5 701.0L333.0 701.0L333.5 701.0L334.0 701.0L334.5 701.0L335.0 701.0L335.5 701.0L336.0 701.0L336.5 701.0L337.0 701.0L337.5 701.0L338.0 699.9L338.5 697.6L339.0 695.3L339.5 693.0L340.0 690.7L340.5 688.9L341.0 687.1L341.5 685.3L342.0 685.2L342.5 689.7L343.0 693.9L343.5 692.0L344.0 690.2L344.5 690.6L345.0 691.8L345.5 693.0L346.0 694.3L346.5 695.5L347.0 696.9L347.5 698.3L348.0 698.8L348.5 695.8L349.0 693.1L349.5 691.5L350.0 689.7L350.5 687.6L351.0 685.9L351.5 684.9L352.0 683.9L352.5 684.2L353.0 685.4L353.5 685.7L354.0 684.4L354.5 683.1L355.0 683.7L355.5 684.4L356.0 685.3L356.5 686.2L357.0 686.3L357.5 684.6L358.0 683.5L358.5 683.4L359.0 683.8L359.5 684.6L360.0 685.4L360.5 686.3L361.0 690.2L361.5 695.3L362.0 700.3L362.5 701.0L363.0 701.0L363.5 682.3L364.0 682.3L365.4 682.5L366.9 685.9L368.3 682.2L369.8 682.2L371.2 682.9L372.7 684.4L374.1 684.3L375.6 686.3L377.0 682.0L378.5 686.2L379.9 681.5L381.4 682.0L382.8 689.8L384.3 683.7L385.7 682.0L387.2 682.5L388.6 681.7L390.1 683.6L391.5 684.8L393.0 682.7L394.4 686.1L395.9 684.3L397.3 683.2L398.8 682.6L400.2 684.3L401.7 681.8L403.1 684.2L404.6 682.7L406.0 688.0L407.5 684.8L408.9 682.4L410.4 684.6L411.8 686.3L413.3 685.1L414.7 687.1L416.2 681.1L417.6 685.4L419.1 686.1L420.5 687.2L422.0 681.7L423.4 690.8L424.9 687.3L426.3 687.6L427.8 683.3L429.2 688.0L430.7 686.7L432.1 681.6L433.6 684.5L435.0 684.2L436.5 685.0L437.9 681.8L439.4 682.6L440.8 686.5L442.3 681.5L443.7 686.9L445.2 682.2L446.6 681.7L448.1 687.3L449.5 683.5L451.0 690.3L452.4 682.8L453.9 683.4L455.3 686.8L456.8 686.8L458.2 683.7L459.7 686.9L461.1 685.6L462.6 684.6L464.0 685.1L465.5 682.9L466.9 682.4L468.4 682.6L469.8 681.8L471.3 682.9L472.7 684.7L474.2 686.4L475.6 682.2L477.1 686.1L478.5 681.2L480.0 686.7L481.4 684.9L482.9 681.9L484.3 682.3L485.8 683.1L487.2 685.5L488.7 685.8L490.1 687.0L491.6 684.1L493.0 682.1L494.5 685.4L495.9 683.0L497.4 684.9L498.8 681.6L500.3 682.9L501.7 685.1L503.2 682.0L504.6 682.9L506.1 683.6L507.5 681.6L509.0 681.4L510.4 685.1L511.9 682.2L513.3 686.7L514.8 684.3L516.2 683.6L517.7 681.1L519.1 685.9L520.6 686.4L522.0 684.3L523.5 684.4L524.9 681.8L526.4 686.6L527.8 684.4L529.3 682.8L530.7 682.3L532.2 687.2L533.6 682.1L535.1 682.4L536.5 682.0L538.0 681.5L539.4 684.6L540.9 682.8L542.3 682.0L543.8 682.5L545.2 687.8L546.7 681.8L548.1 682.6L549.6 686.8L551.1 681.7L552.5 684.6L554.0 682.0L555.4 682.7L556.9 684.5L558.3 683.0L559.8 686.2L561.2 682.1L562.7 683.8L564.1 683.3L565.6 682.8L567.0 685.6L568.5 681.8L569.9 683.5L571.4 682.9L572.8 688.9L574.3 684.5L575.7 683.2L577.2 681.4L578.6 682.4L580.1 682.0L581.5 686.3L583.0 685.9L584.4 681.5L585.9 685.0L587.3 683.1L588.8 686.1L590.2 687.8L591.7 686.2L593.1 685.4L594.6 686.4L596.0 682.9L597.5 684.1L598.9 682.5L600.4 687.1L601.8 684.8L603.3 685.6L604.7 684.7L606.2 684.8L607.6 682.6L609.1 681.6L610.5 683.7L612.0 686.1L613.4 682.8L614.9 684.0L616.3 681.9L617.8 685.8L619.2 685.7L620.7 686.9L622.1 686.2L623.6 682.3L625.0 684.8L626.5 681.5L627.9 681.6L629.4 685.0L630.8 685.0L632.3 682.9L633.7 685.0L635.2 681.8L636.6 681.1L638.1 682.9L639.5 681.9L641.0 685.6L642.4 687.0L643.9 681.7L645.3 684.7L646.8 687.8L648.2 682.7L649.7 685.9L651.1 684.6L652.6 683.3L654.0 687.8L655.5 682.0L656.9 686.8L658.4 684.8L659.8 687.5L661.3 683.2L662.7 684.6L664.2 686.6L665.6 686.3L667.1 685.1L668.5 682.0L670.0 685.7L671.4 688.2L672.9 687.6L674.3 683.9L675.8 682.3L677.2 685.7L678.7 682.3L680.1 688.4L681.6 685.4L683.0 686.4L684.5 682.9L685.9 685.7L687.4 682.8L688.8 685.0L690.3 682.9L691.7 683.0L693.2 682.1L694.6 683.1L696.1 683.3L697.5 682.3L699.0 682.2L700.4 682.1L701.9 684.0L703.3 686.5L704.8 687.4L706.2 683.0L707.7 681.9L709.1 682.0L710.6 684.7L712.0 684.8L713.5 683.8L714.9 684.9L716.4 681.6L717.8 685.6L719.3 682.1L720.7 682.6L722.2 684.9L723.6 684.9L725.1 689.0L726.5 685.4L728.0 686.8L729.4 686.5L730.9 683.5L732.3 682.3L733.8 682.2L735.2 686.3L736.7 687.5L738.1 682.0L739.6 682.6L741.0 681.7L742.5 681.9L743.9 683.0L745.4 683.0L746.8 682.4L748.3 682.9L749.7 683.4L751.2 682.7L752.6 684.7L754.1 682.7L755.5 689.4L757.0 686.6L758.4 685.1L759.9 681.7L761.3 684.8L762.8 683.1L764.2 684.3L765.7 682.7L767.1 682.2L768.6 681.8L770.0 681.7L771.5 682.4L772.9 685.5L774.4 682.0L775.8 682.5L777.3 686.0L778.7 685.7L780.2 683.1L781.6 682.3L783.1 683.4L784.5 684.2L786.0 682.4L787.4 682.7L788.9 682.3L790.3 683.0L791.8 681.5L793.2 685.7L794.7 687.3L796.1 682.4L797.6 686.0L799.0 682.4L800.5 688.9L801.9 684.1L803.4 681.6L804.8 682.6L806.3 683.5L807.7 683.1L809.2 681.8L810.6 682.6L812.1 689.1L813.5 682.0L815.0 682.3L816.4 687.3L817.9 682.3L819.3 686.0L820.8 682.3L822.2 681.8L823.7 682.1L825.1 682.2L826.6 684.8L828.0 682.8L829.5 682.3L830.9 683.0L832.4 687.9L833.8 682.7L835.3 681.5L836.7 683.8L838.2 682.1L839.6 686.8L841.1 681.8L842.5 683.8L844.0 687.6L845.4 687.0L846.9 681.5L848.3 683.1L849.8 684.5L851.2 682.2L852.7 681.7L854.1 682.7L855.6 681.9L857.0 687.0L858.5 682.8L859.9 681.4L861.4 682.8L862.8 688.0L864.3 684.8L865.7 683.2L867.2 681.8L868.6 681.3L870.1 682.1L871.5 681.8L873.0 682.1L874.4 683.5L875.9 684.6L877.3 685.5L878.8 682.2L880.2 682.1L881.7 686.2L883.1 682.3L884.6 683.8L886.0 681.8L887.5 682.8L888.9 684.3L890.4 687.6L891.8 682.0L893.3 682.9L894.7 686.5L896.2 685.6L897.6 684.7L899.1 682.2L900.5 681.8L902.0 681.9L903.4 683.6L904.9 682.1L906.3 689.2L907.8 682.9L909.2 681.9L910.7 687.1L912.1 681.9L913.6 683.7L915.0 682.7L916.5 681.8L917.9 682.3L919.4 689.5L920.8 683.3L922.3 682.7L923.7 686.7L925.2 682.5L926.6 683.1L928.1 686.2L929.5 683.1L931.0 684.1L932.4 683.1L933.9 681.9L935.3 684.3L936.8 682.3L938.2 684.9L939.7 682.3L941.1 685.5L942.6 686.2L944.0 681.5L945.5 682.1L946.9 684.9L948.4 684.3L949.8 687.7L951.3 682.2L952.7 682.3L954.2 681.5L955.6 684.4L957.1 683.0L958.5 684.4L960.0 681.6L961.4 681.2L962.9 682.9L964.3 685.6L965.8 683.5L967.2 686.3L968.7 688.8L970.1 683.6L971.6 681.8L973.0 687.6L974.5 686.3L975.9 683.5L977.4 681.9L978.8 682.5L980.3 684.6L981.7 683.3L983.2 686.9L984.6 681.7L986.1 681.7L987.5 683.1L989.0 681.5L990.4 685.1L991.9 681.8L993.3 684.5L994.8 682.6L996.2 686.7L997.7 682.1L999.1 682.4L1000.6 681.6L1002.0 683.0L1003.5 682.2L1004.9 685.7L1006.4 682.6L1007.8 682.8L1009.3 683.2L1010.7 685.3L1012.2 687.2L1013.6 682.1L1015.1 685.7L1016.5 684.9L1018.0 681.7L1019.4 682.0L1020.9 683.0L1022.3 685.7L1023.8 686.3L1025.2 682.3L1026.7 684.8L1028.1 681.8L1029.6 685.9L1031.0 685.2L1032.5 683.1L1033.9 686.4L1035.4 682.1L1036.8 683.5L1038.3 682.6L1039.7 686.2L1041.2 682.1L1042.6 682.5L1044.1 682.3L1045.5 683.2L1047.0 682.9L1048.4 684.7L1049.9 685.8L1051.3 682.7L1052.8 687.1L1054.2 690.9L1055.7 687.3L1057.1 681.5L1058.6 684.6L1060.0 681.4L1061.5 688.4L1062.9 684.5L1064.4 685.6L1065.8 689.8L1067.3 683.5L1068.7 688.7L1070.2 684.2L1071.6 681.5L1073.1 686.2L1074.5 685.9L1076.0 682.3L1077.4 686.0L1078.9 681.5L1080.3 684.1L1081.8 682.9L1083.2 683.5L1084.7 685.2L1086.1 681.5L1087.6 681.5L1089.0 686.7L1090.5 683.3L1091.0 683.2L1091 701Z" fill="#62501a"/>
<rect x="221" y="703" width="870" height="23" fill="#6cb75f"/>
<rect x="221" y="703" width="870" height="1" fill="#417a39"/>
<rect x="221" y="703" width="1" height="23" fill="#4a8741"/>
<rect x="1090" y="703" width="1" height="23" fill="#4a8741"/>
<path d="M221 726L221.0 726.0L221.5 726.0L222.0 726.0L222.5 726.0L223.0 726.0L223.5 726.0L224.0 726.0L224.5 726.0L225.0 726.0L225.5 726.0L226.0 726.0L226.5 726.0L227.0 726.0L227.5 726.0L228.0 726.0L228.5 726.0L229.0 726.0L229.5 726.0L230.0 726.0L230.5 726.0L231.0 726.0L231.5 726.0L232.0 726.0L232.5 726.0L233.0 726.0L233.5 726.0L234.0 726.0L234.5 726.0L235.0 726.0L235.5 726.0L236.0 726.0L236.5 726.0L237.0 726.0L237.5 726.0L238.0 726.0L238.5 726.0L239.0 726.0L239.5 726.0L240.0 726.0L240.5 726.0L241.0 726.0L241.5 726.0L242.0 726.0L242.5 726.0L243.0 726.0L243.5 726.0L244.0 726.0L244.5 726.0L245.0 726.0L245.5 726.0L246.0 726.0L246.5 726.0L247.0 726.0L247.5 726.0L248.0 726.0L248.5 726.0L249.0 726.0L249.5 726.0L250.0 726.0L250.5 726.0L251.0 726.0L251.5 726.0L252.0 726.0L252.5 726.0L253.0 726.0L253.5 726.0L254.0 726.0L254.5 726.0L255.0 726.0L255.5 726.0L256.0 726.0L256.5 726.0L257.0 726.0L257.5 726.0L258.0 726.0L258.5 726.0L259.0 726.0L259.5 726.0L260.0 726.0L260.5 726.0L261.0 726.0L261.5 726.0L262.0 726.0L262.5 726.0L263.0 726.0L263.5 726.0L264.0 726.0L264.5 726.0L265.0 726.0L265.5 726.0L266.0 726.0L266.5 726.0L267.0 726.0L267.5 726.0L268.0 726.0L268.5 726.0L269.0 726.0L269.5 726.0L270.0 726.0L270.5 726.0L271.0 726.0L271.5 726.0L272.0 726.0L272.5 726.0L273.0 726.0L273.5 726.0L274.0 726.0L274.5 726.0L275.0 726.0L275.5 726.0L276.0 726.0L276.5 726.0L277.0 726.0L277.5 726.0L278.0 726.0L278.5 726.0L279.0 726.0L279.5 726.0L280.0 726.0L280.5 726.0L281.0 726.0L281.5 726.0L282.0 726.0L282.5 726.0L283.0 726.0L283.5 726.0L284.0 726.0L284.5 726.0L285.0 726.0L285.5 726.0L286.0 726.0L286.5 726.0L287.0 726.0L287.5 726.0L288.0 726.0L288.5 726.0L289.0 726.0L289.5 726.0L290.0 726.0L290.5 726.0L291.0 726.0L291.5 726.0L292.0 726.0L292.5 726.0L293.0 726.0L293.5 726.0L294.0 726.0L294.5 726.0L295.0 726.0L295.5 726.0L296.0 726.0L296.5 726.0L297.0 726.0L297.5 726.0L298.0 726.0L298.5 726.0L299.0 726.0L299.5 726.0L300.0 726.0L300.5 726.0L301.0 726.0L301.5 726.0L302.0 726.0L302.5 726.0L303.0 726.0L303.5 726.0L304.0 726.0L304.5 726.0L305.0 726.0L305.5 726.0L306.0 726.0L306.5 726.0L307.0 726.0L307.5 726.0L308.0 726.0L308.5 726.0L309.0 726.0L309.5 726.0L310.0 726.0L310.5 726.0L311.0 726.0L311.5 726.0L312.0 726.0L312.5 726.0L313.0 726.0L313.5 726.0L314.0 726.0L314.5 726.0L315.0 726.0L315.5 726.0L316.0 726.0L316.5 726.0L317.0 726.0L317.5 726.0L318.0 726.0L318.5 726.0L319.0 726.0L319.5 726.0L320.0 726.0L320.5 726.0L321.0 726.0L321.5 726.0L322.0 726.0L322.5 726.0L323.0 725.7L323.5 725.2L324.0 724.7L324.5 724.3L325.0 724.5L325.5 725.0L326.0 725.5L326.5 725.9L327.0 726.0L327.5 726.0L328.0 726.0L328.5 726.0L329.0 726.0L329.5 726.0L330.0 726.0L330.5 726.0L331.0 726.0L331.5 726.0L332.0 726.0L332.5 726.0L333.0 726.0L333.5 726.0L334.0 726.0L334.5 726.0L335.0 726.0L335.5 726.0L336.0 726.0L336.5 726.0L337.0 726.0L337.5 726.0L338.0 724.7L338.5 721.9L339.0 719.0L339.5 716.2L340.0 714.8L340.5 713.5L341.0 712.1L341.5 710.7L342.0 709.9L342.5 711.6L343.0 713.3L343.5 714.2L344.0 715.0L344.5 716.5L345.0 718.3L345.5 720.1L346.0 721.8L346.5 723.6L347.0 723.9L347.5 724.1L348.0 723.7L348.5 721.1L349.0 718.5L349.5 716.6L350.0 715.0L350.5 714.9L351.0 714.7L351.5 712.8L352.0 710.9L352.5 708.7L353.0 706.5L353.5 706.6L354.0 709.1L354.5 711.5L355.0 711.2L355.5 709.8L356.0 708.4L356.5 707.5L357.0 706.8L357.5 706.1L358.0 708.5L358.5 711.0L359.0 711.6L359.5 711.1L360.0 710.5L360.5 710.0L361.0 714.1L361.5 719.6L362.0 725.2L362.5 726.0L363.0 726.0L363.5 707.4L364.0 707.4L365.4 708.0L366.9 706.7L368.3 708.8L369.8 706.7L371.2 707.1L372.7 706.5L374.1 709.0L375.6 709.6L377.0 706.4L378.5 708.7L379.9 707.3L381.4 706.9L382.8 707.7L384.3 707.6L385.7 709.8L387.2 709.8L388.6 710.3L390.1 710.2L391.5 707.5L393.0 706.5L394.4 706.5L395.9 710.4L397.3 709.5L398.8 706.4L400.2 708.4L401.7 707.3L403.1 708.9L404.6 706.5L406.0 706.9L407.5 706.6L408.9 706.8L410.4 707.4L411.8 708.8L413.3 708.2L414.7 707.0L416.2 708.2L417.6 707.1L419.1 707.8L420.5 709.5L422.0 707.5L423.4 708.0L424.9 708.0L426.3 707.0L427.8 707.3L429.2 709.3L430.7 707.0L432.1 709.3L433.6 707.7L435.0 707.3L436.5 710.2L437.9 708.0L439.4 707.4L440.8 707.7L442.3 709.4L443.7 712.8L445.2 708.1L446.6 709.2L448.1 706.7L449.5 707.2L451.0 709.0L452.4 709.9L453.9 708.0L455.3 707.1L456.8 709.1L458.2 707.4L459.7 706.9L461.1 707.6L462.6 707.1L464.0 709.1L465.5 710.4L466.9 710.6L468.4 709.3L469.8 707.0L471.3 709.7L472.7 707.3L474.2 707.9L475.6 708.3L477.1 707.4L478.5 710.0L480.0 706.9L481.4 706.9L482.9 710.1L484.3 709.2L485.8 708.0L487.2 707.5L488.7 706.6L490.1 714.1L491.6 707.0L493.0 708.0L494.5 706.8L495.9 707.7L497.4 706.7L498.8 707.0L500.3 710.1L501.7 709.7L503.2 707.5L504.6 710.6L506.1 709.9L507.5 712.4L509.0 707.2L510.4 708.9L511.9 707.9L513.3 706.7L514.8 706.9L516.2 707.1L517.7 706.8L519.1 707.7L520.6 707.8L522.0 706.8L523.5 709.6L524.9 714.5L526.4 707.8L527.8 707.3L529.3 708.3L530.7 708.0L532.2 709.5L533.6 708.0L535.1 707.7L536.5 707.6L538.0 707.4L539.4 706.7L540.9 708.1L542.3 708.2L543.8 708.0L545.2 708.6L546.7 707.7L548.1 708.1L549.6 707.6L551.1 709.1L552.5 709.9L554.0 707.6L555.4 710.2L556.9 708.6L558.3 706.8L559.8 708.5L561.2 709.9L562.7 709.1L564.1 707.9L565.6 709.9L567.0 707.7L568.5 707.4L569.9 707.2L571.4 708.3L572.8 707.5L574.3 707.8L575.7 707.2L577.2 708.2L578.6 707.5L580.1 707.2L581.5 709.0L583.0 709.6L584.4 706.7L585.9 707.6L587.3 708.7L588.8 709.6L590.2 708.8L591.7 708.7L593.1 714.2L594.6 708.7L596.0 707.7L597.5 709.2L598.9 708.9L600.4 707.5L601.8 707.8L603.3 708.0L604.7 706.7L606.2 707.7L607.6 709.7L609.1 709.5L610.5 707.9L612.0 710.6L613.4 709.3L614.9 707.6L616.3 712.2L617.8 709.4L619.2 707.7L620.7 706.4L622.1 707.2L623.6 711.0L625.0 707.2L626.5 707.4L627.9 707.6L629.4 708.0L630.8 707.2L632.3 707.3L633.7 709.1L635.2 710.2L636.6 709.0L638.1 710.7L639.5 707.1L641.0 707.8L642.4 708.1L643.9 707.7L645.3 708.2L646.8 708.1L648.2 708.1L649.7 708.5L651.1 709.8L652.6 709.1L654.0 707.8L655.5 708.2L656.9 707.3L658.4 707.2L659.8 710.4L661.3 710.6L662.7 707.6L664.2 707.8L665.6 709.1L667.1 707.3L668.5 709.3L670.0 709.9L671.4 707.3L672.9 708.1L674.3 709.1L675.8 706.8L677.2 710.7L678.7 707.8L680.1 707.5L681.6 706.9L683.0 709.3L684.5 708.1L685.9 707.9L687.4 711.6L688.8 708.8L690.3 708.5L691.7 711.2L693.2 708.5L694.6 708.4L696.1 708.9L697.5 708.2L699.0 707.6L700.4 706.8L701.9 708.9L703.3 706.6L704.8 709.9L706.2 709.7L707.7 710.3L709.1 710.3L710.6 708.1L712.0 707.6L713.5 707.1L714.9 708.5L716.4 706.8L717.8 708.6L719.3 707.7L720.7 706.8L722.2 707.9L723.6 709.7L725.1 709.0L726.5 707.6L728.0 708.0L729.4 709.3L730.9 707.2L732.3 707.0L733.8 710.2L735.2 707.1L736.7 707.8L738.1 709.8L739.6 707.1L741.0 706.8L742.5 710.6L743.9 710.6L745.4 706.8L746.8 707.7L748.3 707.6L749.7 707.8L751.2 707.0L752.6 707.3L754.1 707.7L755.5 709.7L757.0 708.1L758.4 707.4L759.9 707.1L761.3 708.0L762.8 709.5L764.2 708.1L765.7 708.8L767.1 709.2L768.6 709.0L770.0 707.6L771.5 707.2L772.9 708.0L774.4 707.9L775.8 707.8L777.3 709.9L778.7 708.1L780.2 708.2L781.6 708.8L783.1 707.2L784.5 707.8L786.0 715.9L787.4 708.1L788.9 710.9L790.3 706.8L791.8 709.1L793.2 707.2L794.7 708.3L796.1 709.0L797.6 707.4L799.0 707.8L800.5 708.0L801.9 708.2L803.4 710.2L804.8 709.9L806.3 706.9L807.7 709.2L809.2 707.0L810.6 707.9L812.1 707.4L813.5 711.2L815.0 709.0L816.4 708.9L817.9 707.6L819.3 708.3L820.8 710.1L822.2 710.7L823.7 708.9L825.1 707.7L826.6 710.0L828.0 709.3L829.5 711.3L830.9 708.3L832.4 709.3L833.8 710.5L835.3 714.0L836.7 710.5L838.2 708.2L839.6 709.1L841.1 707.4L842.5 706.9L844.0 709.8L845.4 707.8L846.9 709.3L848.3 707.9L849.8 709.6L851.2 711.0L852.7 709.2L854.1 709.5L855.6 710.6L857.0 707.2L858.5 707.9L859.9 706.9L861.4 708.0L862.8 707.7L864.3 707.0L865.7 707.2L867.2 708.9L868.6 708.0L870.1 709.6L871.5 708.1L873.0 708.3L874.4 707.5L875.9 708.0L877.3 707.9L878.8 709.7L880.2 709.6L881.7 707.6L883.1 709.3L884.6 710.2L886.0 707.7L887.5 709.6L888.9 706.5L890.4 708.8L891.8 709.4L893.3 707.4L894.7 706.9L896.2 710.2L897.6 707.6L899.1 707.6L900.5 709.1L902.0 708.4L903.4 709.7L904.9 708.4L906.3 707.4L907.8 709.3L909.2 706.9L910.7 708.1L912.1 710.6L913.6 707.6L915.0 710.5L916.5 707.9L917.9 708.0L919.4 708.9L920.8 711.4L922.3 707.5L923.7 707.7L925.2 709.6L926.6 710.3L928.1 706.8L929.5 707.4L931.0 706.9L932.4 708.2L933.9 708.0L935.3 710.5L936.8 706.9L938.2 706.6L939.7 707.0L941.1 709.3L942.6 708.1L944.0 709.3L945.5 707.8L946.9 708.1L948.4 707.8L949.8 707.1L951.3 710.4L952.7 707.4L954.2 707.8L955.6 710.4L957.1 707.6L958.5 707.7L960.0 707.8L961.4 710.9L962.9 707.0L964.3 709.6L965.8 707.5L967.2 707.5L968.7 709.8L970.1 707.1L971.6 707.1L973.0 707.0L974.5 707.6L975.9 707.9L977.4 708.9L978.8 707.9L980.3 707.2L981.7 707.7L983.2 707.0L984.6 707.8L986.1 709.6L987.5 708.6L989.0 706.6L990.4 708.6L991.9 708.0L993.3 706.9L994.8 707.5L996.2 707.5L997.7 707.7L999.1 711.2L1000.6 709.0L1002.0 709.8L1003.5 708.1L1004.9 707.4L1006.4 706.5L1007.8 709.2L1009.3 709.6L1010.7 707.4L1012.2 706.5L1013.6 708.0L1015.1 709.2L1016.5 708.9L1018.0 706.8L1019.4 706.6L1020.9 709.3L1022.3 708.0L1023.8 706.8L1025.2 707.4L1026.7 707.1L1028.1 708.3L1029.6 708.1L1031.0 707.0L1032.5 706.8L1033.9 706.7L1035.4 708.2L1036.8 707.0L1038.3 708.2L1039.7 707.8L1041.2 709.2L1042.6 708.6L1044.1 708.9L1045.5 707.4L1047.0 709.0L1048.4 708.7L1049.9 706.8L1051.3 707.6L1052.8 706.6L1054.2 715.2L1055.7 708.4L1057.1 707.7L1058.6 706.7L1060.0 710.1L1061.5 709.4L1062.9 707.7L1064.4 708.0L1065.8 710.0L1067.3 709.2L1068.7 707.9L1070.2 707.8L1071.6 710.1L1073.1 709.6L1074.5 706.7L1076.0 707.6L1077.4 707.6L1078.9 707.8L1080.3 706.5L1081.8 707.1L1083.2 714.4L1084.7 708.2L1086.1 708.7L1087.6 707.4L1089.0 707.0L1090.5 706.5L1091.0 709.4L1091 726Z" fill="#62501a"/>
<rect x="221" y="728" width="870" height="23" fill="#6cb75f"/>
<rect x="221" y="728" width="870" height="1" fill="#417a39"/>
<rect x="221" y="728" width="1" height="23" fill="#4a8741"/>
<rect x="1090" y="728" width="1" height="23" fill="#4a8741"/>
<path d="M221 751L221.0 751.0L221.5 751.0L222.0 751.0L222.5 751.0L223.0 751.0L223.5 751.0L224.0 751.0L224.5 751.0L225.0 751.0L225.5 751.0L226.0 751.0L226.5 751.0L227.0 751.0L227.5 751.0L228.0 751.0L228.5 751.0L229.0 751.0L229.5 751.0L230.0 751.0L230.5 751.0L231.0 751.0L231.5 751.0L232.0 751.0L232.5 751.0L233.0 751.0L233.5 751.0L234.0 751.0L234.5 751.0L235.0 751.0L235.5 751.0L236.0 751.0L236.5 751.0L237.0 751.0L237.5 751.0L238.0 751.0L238.5 751.0L239.0 751.0L239.5 751.0L240.0 751.0L240.5 751.0L241.0 751.0L241.5 751.0L242.0 751.0L242.5 751.0L243.0 751.0L243.5 751.0L244.0 751.0L244.5 751.0L245.0 751.0L245.5 751.0L246.0 751.0L246.5 751.0L247.0 751.0L247.5 751.0L248.0 751.0L248.5 751.0L249.0 751.0L249.5 751.0L250.0 751.0L250.5 751.0L251.0 751.0L251.5 751.0L252.0 751.0L252.5 751.0L253.0 751.0L253.5 751.0L254.0 751.0L254.5 751.0L255.0 751.0L255.5 751.0L256.0 751.0L256.5 751.0L257.0 751.0L257.5 751.0L258.0 751.0L258.5 751.0L259.0 749.6L259.5 745.8L260.0 742.0L260.5 738.2L261.0 737.7L261.5 741.5L262.0 745.3L262.5 749.1L263.0 751.0L263.5 751.0L264.0 751.0L264.5 751.0L265.0 751.0L265.5 751.0L266.0 751.0L266.5 751.0L267.0 751.0L267.5 751.0L268.0 751.0L268.5 751.0L269.0 751.0L269.5 751.0L270.0 751.0L270.5 751.0L271.0 751.0L271.5 751.0L272.0 751.0L272.5 751.0L273.0 751.0L273.5 751.0L274.0 751.0L274.5 751.0L275.0 751.0L275.5 751.0L276.0 751.0L276.5 751.0L277.0 751.0L277.5 751.0L278.0 751.0L278.5 751.0L279.0 751.0L279.5 751.0L280.0 751.0L280.5 751.0L281.0 751.0L281.5 751.0L282.0 751.0L282.5 751.0L283.0 751.0L283.5 751.0L284.0 751.0L284.5 751.0L285.0 751.0L285.5 751.0L286.0 751.0L286.5 751.0L287.0 751.0L287.5 751.0L288.0 751.0L288.5 751.0L289.0 751.0L289.5 751.0L290.0 751.0L290.5 751.0L291.0 751.0L291.5 751.0L292.0 751.0L292.5 751.0L293.0 751.0L293.5 751.0L294.0 751.0L294.5 751.0L295.0 751.0L295.5 751.0L296.0 751.0L296.5 751.0L297.0 751.0L297.5 751.0L298.0 751.0L298.5 751.0L299.0 751.0L299.5 751.0L300.0 751.0L300.5 751.0L301.0 751.0L301.5 751.0L302.0 751.0L302.5 751.0L303.0 751.0L303.5 751.0L304.0 751.0L304.5 751.0L305.0 751.0L305.5 751.0L306.0 751.0L306.5 751.0L307.0 751.0L307.5 751.0L308.0 751.0L308.5 751.0L309.0 751.0L309.5 751.0L310.0 751.0L310.5 751.0L311.0 751.0L311.5 751.0L312.0 751.0L312.5 751.0L313.0 751.0L313.5 751.0L314.0 751.0L314.5 751.0L315.0 751.0L315.5 751.0L316.0 751.0L316.5 751.0L317.0 751.0L317.5 751.0L318.0 751.0L318.5 751.0L319.0 751.0L319.5 751.0L320.0 751.0L320.5 751.0L321.0 751.0L321.5 751.0L322.0 751.0L322.5 751.0L323.0 751.0L323.5 751.0L324.0 751.0L324.5 751.0L325.0 751.0L325.5 751.0L326.0 751.0L326.5 751.0L327.0 751.0L327.5 751.0L328.0 751.0L328.5 751.0L329.0 751.0L329.5 751.0L330.0 751.0L330.5 751.0L331.0 751.0L331.5 751.0L332.0 751.0L332.5 751.0L333.0 751.0L333.5 751.0L334.0 751.0L334.5 751.0L335.0 751.0L335.5 751.0L336.0 751.0L336.5 751.0L337.0 751.0L337.5 751.0L338.0 750.0L338.5 748.0L339.0 745.9L339.5 743.9L340.0 741.8L340.5 739.4L341.0 737.0L341.5 736.3L342.0 737.3L342.5 738.3L343.0 739.2L343.5 738.3L344.0 737.4L344.5 738.8L345.0 741.2L345.5 743.5L346.0 745.6L346.5 746.3L347.0 747.0L347.5 747.8L348.0 747.8L348.5 745.2L349.0 743.0L349.5 742.1L350.0 740.9L350.5 738.2L351.0 735.4L351.5 734.9L352.0 735.8L352.5 736.6L353.0 737.3L353.5 737.9L354.0 736.8L354.5 735.0L355.0 735.0L355.5 735.8L356.0 736.4L356.5 737.1L357.0 737.8L357.5 738.4L358.0 739.1L358.5 738.9L359.0 738.6L359.5 738.3L360.0 737.8L360.5 737.4L361.0 740.8L361.5 745.6L362.0 750.3L362.5 751.0L363.0 751.0L363.5 732.3L364.0 732.3L365.4 732.2L366.9 734.1L368.3 737.5L369.8 734.8L371.2 731.5L372.7 734.7L374.1 732.6L375.6 731.9L377.0 732.8L378.5 733.5L379.9 735.7L381.4 735.9L382.8 735.1L384.3 735.8L385.7 733.0L387.2 735.5L388.6 740.9L390.1 736.2L391.5 733.0L393.0 732.0L394.4 731.9L395.9 732.2L397.3 733.0L398.8 733.5L400.2 733.0L401.7 732.0L403.1 732.3L404.6 733.3L406.0 734.6L407.5 733.1L408.9 732.0L410.4 732.7L411.8 734.2L413.3 732.4L414.7 738.9L416.2 732.1L417.6 734.6L419.1 734.9L420.5 731.4L422.0 737.1L423.4 732.9L424.9 737.5L426.3 732.7L427.8 734.7L429.2 731.3L430.7 737.0L432.1 731.4L433.6 732.9L435.0 732.5L436.5 734.4L437.9 734.1L439.4 734.9L440.8 735.4L442.3 735.2L443.7 732.0L445.2 731.7L446.6 732.4L448.1 732.7L449.5 731.6L451.0 735.2L452.4 735.5L453.9 733.5L455.3 731.6L456.8 732.9L458.2 736.1L459.7 733.1L461.1 736.6L462.6 736.1L464.0 735.0L465.5 732.1L466.9 735.0L468.4 733.8L469.8 731.7L471.3 735.4L472.7 731.5L474.2 735.8L475.6 732.5L477.1 731.9L478.5 731.6L480.0 734.0L481.4 734.8L482.9 732.4L484.3 732.1L485.8 736.9L487.2 731.6L488.7 737.0L490.1 732.1L491.6 735.3L493.0 731.9L494.5 732.0L495.9 732.3L497.4 738.4L498.8 733.1L500.3 732.3L501.7 733.6L503.2 739.3L504.6 733.0L506.1 738.2L507.5 737.4L509.0 735.8L510.4 732.5L511.9 732.6L513.3 735.4L514.8 735.8L516.2 732.9L517.7 733.7L519.1 733.1L520.6 734.2L522.0 731.5L523.5 733.3L524.9 734.2L526.4 731.9L527.8 731.4L529.3 733.6L530.7 732.4L532.2 732.4L533.6 732.2L535.1 731.9L536.5 733.4L538.0 734.0L539.4 735.2L540.9 731.9L542.3 732.8L543.8 732.0L545.2 732.6L546.7 736.8L548.1 734.8L549.6 731.5L551.1 732.3L552.5 731.8L554.0 733.9L555.4 739.7L556.9 731.7L558.3 731.6L559.8 731.7L561.2 732.4L562.7 737.8L564.1 731.6L565.6 736.5L567.0 732.3L568.5 734.3L569.9 732.4L571.4 739.8L572.8 732.8L574.3 737.6L575.7 731.6L577.2 731.6L578.6 736.0L580.1 736.2L581.5 732.3L583.0 732.2L584.4 731.8L585.9 735.4L587.3 731.7L588.8 734.5L590.2 732.4L591.7 736.6L593.1 736.3L594.6 732.0L596.0 736.8L597.5 736.7L598.9 731.3L600.4 734.3L601.8 732.8L603.3 731.9L604.7 735.5L606.2 731.7L607.6 732.8L609.1 736.0L610.5 732.6L612.0 737.0L613.4 734.0L614.9 735.1L616.3 732.7L617.8 734.7L619.2 734.9L620.7 731.6L622.1 732.4L623.6 734.3L625.0 734.9L626.5 735.1L627.9 731.2L629.4 732.8L630.8 739.3L632.3 732.4L633.7 732.4L635.2 736.1L636.6 732.0L638.1 736.3L639.5 732.2L641.0 732.9L642.4 734.8L643.9 734.4L645.3 735.3L646.8 732.7L648.2 731.5L649.7 732.1L651.1 735.8L652.6 734.6L654.0 735.4L655.5 740.0L656.9 732.1L658.4 732.2L659.8 733.2L661.3 732.9L662.7 732.3L664.2 736.2L665.6 731.9L667.1 733.4L668.5 734.9L670.0 734.2L671.4 735.9L672.9 734.1L674.3 733.0L675.8 734.6L677.2 735.5L678.7 735.1L680.1 731.8L681.6 731.4L683.0 735.9L684.5 734.4L685.9 735.7L687.4 737.2L688.8 732.6L690.3 736.5L691.7 738.4L693.2 733.5L694.6 735.3L696.1 733.3L697.5 733.1L699.0 732.9L700.4 732.1L701.9 733.5L703.3 732.7L704.8 731.9L706.2 731.6L707.7 732.8L709.1 733.2L710.6 737.9L712.0 732.8L713.5 732.3L714.9 735.9L716.4 734.7L717.8 734.9L719.3 736.2L720.7 732.9L722.2 735.9L723.6 731.6L725.1 732.0L726.5 731.4L728.0 734.8L729.4 736.1L730.9 737.6L732.3 731.1L733.8 737.1L735.2 732.4L736.7 735.0L738.1 736.4L739.6 732.1L741.0 734.3L742.5 731.4L743.9 736.9L745.4 732.6L746.8 732.2L748.3 731.7L749.7 736.0L751.2 731.7L752.6 732.5L754.1 732.4L755.5 735.5L757.0 735.8L758.4 735.3L759.9 736.1L761.3 732.3L762.8 734.4L764.2 738.0L765.7 737.3L767.1 732.7L768.6 731.5L770.0 736.8L771.5 736.6L772.9 739.5L774.4 731.9L775.8 733.6L777.3 732.1L778.7 732.2L780.2 731.8L781.6 731.4L783.1 736.2L784.5 732.2L786.0 736.4L787.4 735.3L788.9 733.1L790.3 736.8L791.8 732.4L793.2 731.8L794.7 732.6L796.1 734.6L797.6 732.5L799.0 734.4L800.5 736.1L801.9 736.7L803.4 732.4L804.8 734.8L806.3 732.8L807.7 735.5L809.2 732.0L810.6 733.9L812.1 738.7L813.5 733.0L815.0 732.4L816.4 734.9L817.9 735.1L819.3 733.2L820.8 732.7L822.2 731.7L823.7 732.8L825.1 735.2L826.6 734.4L828.0 738.9L829.5 732.6L830.9 733.0L832.4 733.1L833.8 732.2L835.3 734.9L836.7 731.4L838.2 733.0L839.6 733.8L841.1 735.8L842.5 732.4L844.0 733.0L845.4 732.9L846.9 734.4L848.3 735.7L849.8 731.7L851.2 731.5L852.7 733.4L854.1 736.3L855.6 734.3L857.0 732.9L858.5 736.8L859.9 735.6L861.4 735.1L862.8 737.2L864.3 731.8L865.7 731.9L867.2 732.7L868.6 735.4L870.1 731.6L871.5 732.1L873.0 732.5L874.4 731.7L875.9 734.5L877.3 735.0L878.8 736.2L880.2 733.0L881.7 734.0L883.1 732.6L884.6 736.6L886.0 731.7L887.5 735.9L888.9 737.1L890.4 735.4L891.8 732.9L893.3 736.5L894.7 737.8L896.2 733.3L897.6 733.2L899.1 733.2L900.5 732.9L902.0 734.0L903.4 731.5L904.9 736.9L906.3 735.3L907.8 731.8L909.2 732.0L910.7 734.9L912.1 734.6L913.6 736.2L915.0 732.5L916.5 735.8L917.9 733.8L919.4 731.3L920.8 731.6L922.3 732.3L923.7 731.7L925.2 731.4L926.6 736.1L928.1 732.5L929.5 733.3L931.0 733.2L932.4 735.2L933.9 731.9L935.3 734.1L936.8 733.7L938.2 731.9L939.7 731.9L941.1 736.3L942.6 733.9L944.0 738.4L945.5 732.7L946.9 732.9L948.4 737.0L949.8 735.9L951.3 733.5L952.7 736.1L954.2 733.1L955.6 732.3L957.1 734.4L958.5 731.9L960.0 733.5L961.4 733.2L962.9 732.3L964.3 735.1L965.8 732.8L967.2 735.7L968.7 732.1L970.1 735.1L971.6 734.3L973.0 733.1L974.5 734.8L975.9 731.7L977.4 733.2L978.8 732.6L980.3 737.1L981.7 732.3L983.2 735.5L984.6 733.1L986.1 735.7L987.5 733.4L989.0 733.3L990.4 734.7L991.9 732.2L993.3 737.7L994.8 732.4L996.2 737.9L997.7 732.8L999.1 736.9L1000.6 732.9L1002.0 733.0L1003.5 732.6L1004.9 733.0L1006.4 735.3L1007.8 731.6L1009.3 734.6L1010.7 731.7L1012.2 736.6L1013.6 731.4L1015.1 736.0L1016.5 737.0L1018.0 733.7L1019.4 734.2L1020.9 735.3L1022.3 736.7L1023.8 731.3L1025.2 734.4L1026.7 732.8L1028.1 733.8L1029.6 734.1L1031.0 736.8L1032.5 732.3L1033.9 732.0L1035.4 734.4L1036.8 736.3L1038.3 732.0L1039.7 732.3L1041.2 735.6L1042.6 732.6L1044.1 733.8L1045.5 734.2L1047.0 732.0L1048.4 736.0L1049.9 737.0L1051.3 732.3L1052.8 731.5L1054.2 736.0L1055.7 736.9L1057.1 731.7L1058.6 732.7L1060.0 731.7L1061.5 731.4L1062.9 732.5L1064.4 734.1L1065.8 731.2L1067.3 736.1L1068.7 732.9L1070.2 735.3L1071.6 737.8L1073.1 733.9L1074.5 735.9L1076.0 732.9L1077.4 731.5L1078.9 738.9L1080.3 734.0L1081.8 732.9L1083.2 731.8L1084.7 733.2L1086.1 732.5L1087.6 732.5L1089.0 731.6L1090.5 737.1L1091.0 732.8L1091 751Z" fill="#62501a"/>
<rect x="221" y="753" width="870" height="23" fill="#6cb75f"/>
<rect x="221" y="753" width="870" height="1" fill="#417a39"/>
<rect x="221" y="753" width="1" height="23" fill="#4a8741"/>
<rect x="1090" y="753" width="1" height="23" fill="#4a8741"/>
<path d="M221 776L221.0 776.0L221.5 776.0L222.0 776.0L222.5 776.0L223.0 776.0L223.5 776.0L224.0 776.0L224.5 776.0L225.0 776.0L225.5 776.0L226.0 776.0L226.5 776.0L227.0 776.0L227.5 776.0L228.0 776.0L228.5 776.0L229.0 776.0L229.5 776.0L230.0 776.0L230.5 776.0L231.0 776.0L231.5 776.0L232.0 776.0L232.5 776.0L233.0 776.0L233.5 776.0L234.0 776.0L234.5 776.0L235.0 776.0L235.5 776.0L236.0 776.0L236.5 776.0L237.0 776.0L237.5 776.0L238.0 776.0L238.5 776.0L239.0 776.0L239.5 776.0L240.0 776.0L240.5 776.0L241.0 776.0L241.5 776.0L242.0 776.0L242.5 776.0L243.0 776.0L243.5 776.0L244.0 776.0L244.5 776.0L245.0 776.0L245.5 776.0L246.0 776.0L246.5 776.0L247.0 776.0L247.5 776.0L248.0 776.0L248.5 776.0L249.0 776.0L249.5 776.0L250.0 776.0L250.5 776.0L251.0 776.0L251.5 776.0L252.0 776.0L252.5 776.0L253.0 776.0L253.5 776.0L254.0 776.0L254.5 776.0L255.0 776.0L255.5 776.0L256.0 776.0L256.5 776.0L257.0 776.0L257.5 776.0L258.0 776.0L258.5 776.0L259.0 776.0L259.5 776.0L260.0 776.0L260.5 776.0L261.0 776.0L261.5 776.0L262.0 776.0L262.5 776.0L263.0 776.0L263.5 776.0L264.0 776.0L264.5 776.0L265.0 776.0L265.5 776.0L266.0 776.0L266.5 776.0L267.0 776.0L267.5 776.0L268.0 776.0L268.5 776.0L269.0 776.0L269.5 776.0L270.0 776.0L270.5 776.0L271.0 776.0L271.5 776.0L272.0 776.0L272.5 776.0L273.0 776.0L273.5 776.0L274.0 776.0L274.5 776.0L275.0 776.0L275.5 776.0L276.0 776.0L276.5 776.0L277.0 776.0L277.5 776.0L278.0 776.0L278.5 776.0L279.0 776.0L279.5 776.0L280.0 776.0L280.5 776.0L281.0 776.0L281.5 776.0L282.0 776.0L282.5 776.0L283.0 776.0L283.5 776.0L284.0 776.0L284.5 776.0L285.0 776.0L285.5 776.0L286.0 776.0L286.5 776.0L287.0 776.0L287.5 776.0L288.0 776.0L288.5 776.0L289.0 776.0L289.5 776.0L290.0 776.0L290.5 776.0L291.0 776.0L291.5 776.0L292.0 776.0L292.5 776.0L293.0 776.0L293.5 776.0L294.0 776.0L294.5 776.0L295.0 776.0L295.5 776.0L296.0 776.0L296.5 776.0L297.0 776.0L297.5 776.0L298.0 776.0L298.5 776.0L299.0 776.0L299.5 776.0L300.0 776.0L300.5 776.0L301.0 776.0L301.5 776.0L302.0 776.0L302.5 776.0L303.0 776.0L303.5 776.0L304.0 776.0L304.5 776.0L305.0 776.0L305.5 776.0L306.0 776.0L306.5 776.0L307.0 776.0L307.5 776.0L308.0 776.0L308.5 776.0L309.0 776.0L309.5 776.0L310.0 776.0L310.5 776.0L311.0 776.0L311.5 776.0L312.0 776.0L312.5 776.0L313.0 776.0L313.5 776.0L314.0 776.0L314.5 776.0L315.0 776.0L315.5 776.0L316.0 776.0L316.5 776.0L317.0 776.0L317.5 776.0L318.0 776.0L318.5 776.0L319.0 776.0L319.5 776.0L320.0 776.0L320.5 776.0L321.0 776.0L321.5 776.0L322.0 776.0L322.5 776.0L323.0 776.0L323.5 776.0L324.0 776.0L324.5 776.0L325.0 776.0L325.5 776.0L326.0 776.0L326.5 776.0L327.0 776.0L327.5 776.0L328.0 776.0L328.5 776.0L329.0 776.0L329.5 776.0L330.0 776.0L330.5 776.0L331.0 776.0L331.5 776.0L332.0 776.0L332.5 776.0L333.0 776.0L333.5 776.0L334.0 776.0L334.5 776.0L335.0 776.0L335.5 776.0L336.0 776.0L336.5 776.0L337.0 776.0L337.5 776.0L338.0 775.1L338.5 773.3L339.0 771.4L339.5 769.6L340.0 768.2L340.5 767.2L341.0 766.2L341.5 765.1L342.0 764.1L342.5 766.1L343.0 768.4L343.5 767.8L344.0 767.2L344.5 768.5L345.0 770.5L345.5 772.5L346.0 774.5L346.5 774.6L347.0 774.1L347.5 773.5L348.0 772.8L348.5 771.6L349.0 770.4L349.5 768.1L350.0 765.0L350.5 762.5L351.0 762.2L351.5 761.8L352.0 761.8L352.5 762.2L353.0 761.6L353.5 758.5L354.0 755.3L354.5 757.7L355.0 760.8L355.5 763.1L356.0 763.4L356.5 763.4L357.0 761.2L357.5 759.6L358.0 760.8L358.5 761.5L359.0 760.7L359.5 760.9L360.0 763.6L360.5 766.3L361.0 769.3L361.5 772.4L362.0 775.5L362.5 776.0L363.0 776.0L363.5 757.3L364.0 757.3L365.4 759.7L366.9 756.5L368.3 758.7L369.8 756.9L371.2 756.4L372.7 756.6L374.1 756.4L375.6 760.8L377.0 761.1L378.5 756.2L379.9 757.3L381.4 759.6L382.8 756.7L384.3 756.2L385.7 756.1L387.2 761.3L388.6 758.0L390.1 758.9L391.5 757.4L393.0 757.9L394.4 757.0L395.9 758.9L397.3 756.3L398.8 760.8L400.2 762.0L401.7 757.3L403.1 757.7L404.6 757.4L406.0 759.6L407.5 759.4L408.9 757.4L410.4 756.2L411.8 756.4L413.3 757.3L414.7 759.9L416.2 762.9L417.6 756.6L419.1 756.2L420.5 759.0L422.0 758.3L423.4 762.1L424.9 759.9L426.3 760.0L427.8 756.8L429.2 759.9L430.7 763.2L432.1 759.7L433.6 760.0L435.0 759.7L436.5 762.0L437.9 760.7L439.4 756.4L440.8 757.0L442.3 761.3L443.7 761.9L445.2 759.8L446.6 759.8L448.1 757.5L449.5 756.7L451.0 757.8L452.4 759.3L453.9 760.4L455.3 762.1L456.8 757.4L458.2 757.9L459.7 757.4L461.1 760.2L462.6 760.6L464.0 764.3L465.5 760.6L466.9 758.1L468.4 756.4L469.8 757.5L471.3 758.9L472.7 760.7L474.2 757.9L475.6 757.6L477.1 762.4L478.5 761.3L480.0 758.0L481.4 760.0L482.9 760.1L484.3 759.3L485.8 760.3L487.2 761.0L488.7 757.5L490.1 757.1L491.6 761.2L493.0 758.7L494.5 757.2L495.9 758.7L497.4 762.0L498.8 756.8L500.3 757.9L501.7 759.5L503.2 761.7L504.6 757.8L506.1 764.1L507.5 757.3L509.0 761.1L510.4 759.5L511.9 759.2L513.3 760.7L514.8 757.6L516.2 757.3L517.7 758.2L519.1 759.5L520.6 758.0L522.0 757.1L523.5 761.0L524.9 760.4L526.4 757.7L527.8 761.3L529.3 757.1L530.7 759.6L532.2 756.7L533.6 757.5L535.1 758.9L536.5 760.3L538.0 757.0L539.4 756.8L540.9 756.2L542.3 758.3L543.8 757.3L545.2 756.6L546.7 758.7L548.1 762.5L549.6 760.4L551.1 759.8L552.5 760.7L554.0 760.1L555.4 762.7L556.9 756.7L558.3 756.6L559.8 757.2L561.2 757.4L562.7 763.7L564.1 756.9L565.6 757.2L567.0 762.9L568.5 760.1L569.9 757.2L571.4 757.5L572.8 758.6L574.3 762.1L575.7 762.7L577.2 760.6L578.6 757.6L580.1 756.9L581.5 762.5L583.0 759.8L584.4 756.9L585.9 757.5L587.3 756.7L588.8 757.1L590.2 756.2L591.7 756.5L593.1 761.9L594.6 759.9L596.0 756.9L597.5 762.7L598.9 757.7L600.4 757.6L601.8 757.4L603.3 761.4L604.7 761.2L606.2 760.6L607.6 759.3L609.1 760.6L610.5 757.6L612.0 761.2L613.4 757.0L614.9 758.0L616.3 757.5L617.8 757.3L619.2 764.4L620.7 757.2L622.1 756.9L623.6 756.8L625.0 758.0L626.5 759.2L627.9 759.9L629.4 763.5L630.8 758.6L632.3 764.4L633.7 761.6L635.2 761.0L636.6 757.2L638.1 756.9L639.5 761.0L641.0 758.7L642.4 757.3L643.9 756.6L645.3 762.3L646.8 756.7L648.2 761.5L649.7 756.9L651.1 759.4L652.6 756.8L654.0 757.7L655.5 760.2L656.9 760.2L658.4 757.6L659.8 757.0L661.3 761.1L662.7 757.3L664.2 759.5L665.6 762.6L667.1 757.5L668.5 762.5L670.0 762.3L671.4 759.4L672.9 757.5L674.3 760.1L675.8 757.6L677.2 762.7L678.7 757.0L680.1 757.6L681.6 756.6L683.0 759.2L684.5 763.9L685.9 760.2L687.4 759.7L688.8 757.6L690.3 760.7L691.7 763.0L693.2 757.4L694.6 758.7L696.1 762.1L697.5 762.1L699.0 759.3L700.4 756.7L701.9 761.2L703.3 757.2L704.8 757.9L706.2 758.1L707.7 756.5L709.1 757.4L710.6 760.2L712.0 756.7L713.5 757.6L714.9 760.2L716.4 759.2L717.8 760.7L719.3 760.4L720.7 762.1L722.2 761.8L723.6 760.5L725.1 758.6L726.5 757.4L728.0 757.1L729.4 756.7L730.9 756.6L732.3 756.3L733.8 756.5L735.2 757.5L736.7 760.0L738.1 756.1L739.6 757.7L741.0 761.0L742.5 757.1L743.9 758.2L745.4 760.7L746.8 756.2L748.3 760.1L749.7 760.6L751.2 758.2L752.6 756.5L754.1 757.4L755.5 757.7L757.0 757.8L758.4 761.2L759.9 761.6L761.3 760.0L762.8 757.4L764.2 759.7L765.7 757.3L767.1 756.9L768.6 757.9L770.0 757.0L771.5 758.4L772.9 765.3L774.4 762.0L775.8 762.0L777.3 760.6L778.7 761.5L780.2 757.9L781.6 760.9L783.1 763.2L784.5 757.1L786.0 759.4L787.4 759.1L788.9 757.7L790.3 757.4L791.8 758.0L793.2 760.4L794.7 761.2L796.1 757.7L797.6 760.9L799.0 757.3L800.5 760.7L801.9 758.2L803.4 765.1L804.8 762.2L806.3 756.7L807.7 758.0L809.2 758.0L810.6 762.4L812.1 758.1L813.5 757.4L815.0 759.8L816.4 763.2L817.9 756.8L819.3 760.4L820.8 757.0L822.2 758.2L823.7 761.5L825.1 759.9L826.6 758.6L828.0 757.1L829.5 761.6L830.9 758.2L832.4 760.4L833.8 761.2L835.3 757.7L836.7 760.8L838.2 756.5L839.6 758.2L841.1 757.5L842.5 757.3L844.0 760.2L845.4 757.3L846.9 757.8L848.3 757.4L849.8 756.4L851.2 757.1L852.7 757.3L854.1 759.6L855.6 757.0L857.0 760.0L858.5 756.7L859.9 757.1L861.4 760.1L862.8 757.4L864.3 759.0L865.7 759.6L867.2 757.3L868.6 760.4L870.1 763.7L871.5 759.4L873.0 758.6L874.4 756.9L875.9 757.1L877.3 757.1L878.8 762.0L880.2 758.6L881.7 760.4L883.1 760.5L884.6 757.3L886.0 756.4L887.5 758.7L888.9 761.0L890.4 762.1L891.8 759.0L893.3 761.4L894.7 756.9L896.2 756.6L897.6 758.0L899.1 756.7L900.5 762.3L902.0 758.6L903.4 760.2L904.9 757.6L906.3 762.6L907.8 761.5L909.2 757.0L910.7 757.8L912.1 759.2L913.6 760.6L915.0 760.8L916.5 760.8L917.9 762.1L919.4 759.9L920.8 757.5L922.3 757.7L923.7 757.4L925.2 757.9L926.6 761.7L928.1 756.8L929.5 761.6L931.0 758.1L932.4 762.2L933.9 762.6L935.3 759.3L936.8 758.1L938.2 756.8L939.7 758.2L941.1 757.5L942.6 757.9L944.0 760.9L945.5 757.7L946.9 760.0L948.4 757.2L949.8 757.9L951.3 758.0L952.7 762.3L954.2 758.5L955.6 760.3L957.1 757.0L958.5 759.1L960.0 756.8L961.4 757.7L962.9 759.8L964.3 756.8L965.8 759.4L967.2 756.8L968.7 756.7L970.1 761.1L971.6 761.1L973.0 762.7L974.5 757.2L975.9 761.1L977.4 758.0L978.8 756.7L980.3 762.2L981.7 757.1L983.2 757.0L984.6 756.6L986.1 759.1L987.5 762.5L989.0 758.6L990.4 756.5L991.9 761.5L993.3 762.3L994.8 761.5L996.2 757.3L997.7 762.1L999.1 756.6L1000.6 760.5L1002.0 759.3L1003.5 760.9L1004.9 759.4L1006.4 758.6L1007.8 762.1L1009.3 757.5L1010.7 758.1L1012.2 756.6L1013.6 756.7L1015.1 758.1L1016.5 756.6L1018.0 758.2L1019.4 764.5L1020.9 757.3L1022.3 757.1L1023.8 756.9L1025.2 761.3L1026.7 761.5L1028.1 761.5L1029.6 758.3L1031.0 760.0L1032.5 762.0L1033.9 760.5L1035.4 757.7L1036.8 759.0L1038.3 760.6L1039.7 757.2L1041.2 761.2L1042.6 759.8L1044.1 756.7L1045.5 758.6L1047.0 759.9L1048.4 762.4L1049.9 761.9L1051.3 762.5L1052.8 758.1L1054.2 757.4L1055.7 757.8L1057.1 757.8L1058.6 758.7L1060.0 757.9L1061.5 760.4L1062.9 760.7L1064.4 756.7L1065.8 761.3L1067.3 758.1L1068.7 762.6L1070.2 757.7L1071.6 756.8L1073.1 758.1L1074.5 758.6L1076.0 757.6L1077.4 757.4L1078.9 757.8L1080.3 760.5L1081.8 757.9L1083.2 757.6L1084.7 758.2L1086.1 759.7L1087.6 757.0L1089.0 757.8L1090.5 761.9L1091.0 756.6L1091 776Z" fill="#62501a"/>
<rect x="221" y="779" width="870" height="22" fill="#6cb75f"/>
<rect x="221" y="779" width="870" height="1" fill="#417a39"/>
<rect x="221" y="779" width="1" height="22" fill="#4a8741"/>
<rect x="1090" y="779" width="1" height="22" fill="#4a8741"/>
<path d="M221 801L221.0 801.0L221.5 801.0L222.0 801.0L222.5 801.0L223.0 801.0L223.5 801.0L224.0 801.0L224.5 801.0L225.0 801.0L225.5 801.0L226.0 801.0L226.5 801.0L227.0 801.0L227.5 801.0L228.0 801.0L228.5 801.0L229.0 801.0L229.5 801.0L230.0 801.0L230.5 801.0L231.0 801.0L231.5 801.0L232.0 801.0L232.5 801.0L233.0 801.0L233.5 801.0L234.0 801.0L234.5 801.0L235.0 801.0L235.5 801.0L236.0 801.0L236.5 801.0L237.0 801.0L237.5 801.0L238.0 801.0L238.5 801.0L239.0 801.0L239.5 801.0L240.0 801.0L240.5 801.0L241.0 801.0L241.5 801.0L242.0 801.0L242.5 801.0L243.0 801.0L243.5 801.0L244.0 801.0L244.5 801.0L245.0 801.0L245.5 801.0L246.0 801.0L246.5 801.0L247.0 801.0L247.5 801.0L248.0 801.0L248.5 801.0L249.0 801.0L249.5 801.0L250.0 801.0L250.5 801.0L251.0 801.0L251.5 801.0L252.0 801.0L252.5 801.0L253.0 801.0L253.5 801.0L254.0 801.0L254.5 801.0L255.0 801.0L255.5 801.0L256.0 801.0L256.5 801.0L257.0 801.0L257.5 801.0L258.0 801.0L258.5 801.0L259.0 801.0L259.5 801.0L260.0 801.0L260.5 801.0L261.0 801.0L261.5 801.0L262.0 801.0L262.5 801.0L263.0 801.0L263.5 801.0L264.0 801.0L264.5 801.0L265.0 801.0L265.5 801.0L266.0 801.0L266.5 801.0L267.0 801.0L267.5 801.0L268.0 801.0L268.5 801.0L269.0 801.0L269.5 801.0L270.0 801.0L270.5 801.0L271.0 801.0L271.5 801.0L272.0 801.0L272.5 801.0L273.0 801.0L273.5 801.0L274.0 801.0L274.5 801.0L275.0 801.0L275.5 801.0L276.0 801.0L276.5 801.0L277.0 801.0L277.5 801.0L278.0 801.0L278.5 801.0L279.0 801.0L279.5 801.0L280.0 801.0L280.5 801.0L281.0 801.0L281.5 801.0L282.0 801.0L282.5 801.0L283.0 801.0L283.5 801.0L284.0 801.0L284.5 801.0L285.0 801.0L285.5 801.0L286.0 801.0L286.5 801.0L287.0 801.0L287.5 801.0L288.0 801.0L288.5 801.0L289.0 801.0L289.5 801.0L290.0 801.0L290.5 801.0L291.0 801.0L291.5 801.0L292.0 801.0L292.5 801.0L293.0 801.0L293.5 801.0L294.0 801.0L294.5 801.0L295.0 801.0L295.5 801.0L296.0 801.0L296.5 801.0L297.0 801.0L297.5 801.0L298.0 801.0L298.5 801.0L299.0 801.0L299.5 801.0L300.0 801.0L300.5 801.0L301.0 801.0L301.5 801.0L302.0 801.0L302.5 801.0L303.0 801.0L303.5 801.0L304.0 801.0L304.5 801.0L305.0 801.0L305.5 801.0L306.0 801.0L306.5 801.0L307.0 801.0L307.5 801.0L308.0 801.0L308.5 801.0L309.0 801.0L309.5 801.0L310.0 801.0L310.5 801.0L311.0 801.0L311.5 801.0L312.0 801.0L312.5 801.0L313.0 801.0L313.5 801.0L314.0 801.0L314.5 801.0L315.0 801.0L315.5 801.0L316.0 801.0L316.5 801.0L317.0 801.0L317.5 801.0L318.0 801.0L318.5 801.0L319.0 801.0L319.5 801.0L320.0 801.0L320.5 801.0L321.0 801.0L321.5 801.0L322.0 801.0L322.5 801.0L323.0 801.0L323.5 801.0L324.0 801.0L324.5 801.0L325.0 801.0L325.5 801.0L326.0 801.0L326.5 801.0L327.0 801.0L327.5 801.0L328.0 801.0L328.5 801.0L329.0 801.0L329.5 801.0L330.0 801.0L330.5 801.0L331.0 801.0L331.5 801.0L332.0 801.0L332.5 801.0L333.0 801.0L333.5 801.0L334.0 801.0L334.5 801.0L335.0 801.0L335.5 801.0L336.0 801.0L336.5 801.0L337.0 801.0L337.5 801.0L338.0 800.3L338.5 798.8L339.0 797.3L339.5 795.8L340.0 794.4L340.5 793.3L341.0 792.3L341.5 791.3L342.0 790.2L342.5 793.0L343.0 795.7L343.5 795.0L344.0 794.3L344.5 795.4L345.0 797.0L345.5 798.7L346.0 800.3L346.5 800.2L347.0 799.8L347.5 799.5L348.0 798.7L348.5 796.0L349.0 793.9L349.5 793.7L350.0 792.4L350.5 788.5L351.0 784.7L351.5 783.8L352.0 786.0L352.5 786.7L353.0 786.4L353.5 786.2L354.0 785.2L354.5 784.0L355.0 783.9L355.5 786.4L356.0 788.9L356.5 787.1L357.0 784.2L357.5 782.4L358.0 784.5L358.5 786.5L359.0 784.2L359.5 781.7L360.0 783.2L360.5 790.7L361.0 794.8L361.5 797.7L362.0 800.6L362.5 801.0L363.0 801.0L363.5 783.1L364.0 783.1L365.4 783.0L366.9 782.9L368.3 788.1L369.8 783.0L371.2 785.8L372.7 783.8L374.1 785.4L375.6 782.6L377.0 784.9L378.5 786.4L379.9 783.0L381.4 785.4L382.8 786.6L384.3 783.8L385.7 786.8L387.2 785.2L388.6 786.0L390.1 785.8L391.5 782.6L393.0 786.3L394.4 781.9L395.9 786.3L397.3 787.0L398.8 782.4L400.2 787.3L401.7 783.7L403.1 783.6L404.6 784.0L406.0 782.1L407.5 786.7L408.9 782.3L410.4 783.4L411.8 790.4L413.3 782.7L414.7 782.6L416.2 788.2L417.6 784.4L419.1 784.3L420.5 786.7L422.0 782.8L423.4 783.0L424.9 782.1L426.3 782.2L427.8 785.1L429.2 782.3L430.7 783.1L432.1 783.2L433.6 785.3L435.0 787.4L436.5 782.1L437.9 784.2L439.4 786.1L440.8 782.4L442.3 782.9L443.7 783.8L445.2 785.6L446.6 785.0L448.1 785.7L449.5 785.7L451.0 784.0L452.4 788.1L453.9 783.8L455.3 783.5L456.8 783.8L458.2 787.5L459.7 785.4L461.1 783.6L462.6 785.5L464.0 783.3L465.5 783.2L466.9 782.4L468.4 784.5L469.8 785.0L471.3 783.6L472.7 783.9L474.2 782.7L475.6 783.3L477.1 784.0L478.5 787.5L480.0 783.0L481.4 784.3L482.9 784.8L484.3 786.6L485.8 782.9L487.2 783.4L488.7 786.3L490.1 788.1L491.6 782.5L493.0 783.9L494.5 783.0L495.9 783.0L497.4 783.9L498.8 785.8L500.3 785.2L501.7 789.5L503.2 783.1L504.6 784.0L506.1 783.4L507.5 786.9L509.0 782.3L510.4 787.4L511.9 783.1L513.3 785.7L514.8 782.2L516.2 785.0L517.7 783.8L519.1 789.9L520.6 782.5L522.0 783.4L523.5 787.2L524.9 783.6L526.4 783.0L527.8 784.1L529.3 782.9L530.7 782.7L532.2 786.3L533.6 783.3L535.1 785.9L536.5 784.8L538.0 782.6L539.4 783.7L540.9 782.1L542.3 782.2L543.8 782.5L545.2 787.7L546.7 783.7L548.1 782.3L549.6 789.7L551.1 790.4L552.5 782.2L554.0 782.5L555.4 787.8L556.9 783.8L558.3 784.8L559.8 787.5L561.2 782.5L562.7 789.3L564.1 782.9L565.6 781.8L567.0 786.6L568.5 786.5L569.9 785.6L571.4 790.0L572.8 789.9L574.3 786.3L575.7 783.5L577.2 783.7L578.6 783.4L580.1 785.7L581.5 782.7L583.0 784.7L584.4 785.6L585.9 783.7L587.3 784.9L588.8 783.7L590.2 785.5L591.7 783.3L593.1 783.5L594.6 784.3L596.0 782.8L597.5 786.1L598.9 782.9L600.4 785.7L601.8 783.7L603.3 783.4L604.7 785.3L606.2 784.0L607.6 782.8L609.1 782.2L610.5 787.5L612.0 782.9L613.4 783.0L614.9 785.0L616.3 787.1L617.8 783.6L619.2 782.4L620.7 783.6L622.1 787.4L623.6 782.9L625.0 782.6L626.5 787.8L627.9 788.3L629.4 783.3L630.8 786.1L632.3 783.1L633.7 782.9L635.2 784.6L636.6 784.6L638.1 782.7L639.5 783.3L641.0 785.4L642.4 784.1L643.9 783.6L645.3 787.0L646.8 782.3L648.2 783.1L649.7 787.6L651.1 782.7L652.6 786.0L654.0 786.8L655.5 783.3L656.9 785.6L658.4 785.2L659.8 783.6L661.3 782.2L662.7 787.8L664.2 787.1L665.6 783.3L667.1 785.5L668.5 783.0L670.0 783.7L671.4 783.9L672.9 782.5L674.3 787.6L675.8 783.2L677.2 785.3L678.7 783.4L680.1 783.4L681.6 786.9L683.0 783.6L684.5 786.8L685.9 782.5L687.4 783.6L688.8 787.6L690.3 785.3L691.7 782.5L693.2 783.2L694.6 788.4L696.1 785.9L697.5 786.7L699.0 782.9L700.4 786.7L701.9 783.9L703.3 787.5L704.8 782.5L706.2 786.7L707.7 783.0L709.1 785.8L710.6 782.5L712.0 782.4L713.5 782.9L714.9 786.5L716.4 788.2L717.8 790.4L719.3 783.6L720.7 785.3L722.2 783.9L723.6 787.3L725.1 783.3L726.5 783.5L728.0 787.0L729.4 783.1L730.9 783.3L732.3 782.4L733.8 782.4L735.2 782.9L736.7 787.3L738.1 783.9L739.6 784.2L741.0 782.4L742.5 784.0L743.9 786.1L745.4 788.0L746.8 783.4L748.3 788.0L749.7 786.3L751.2 783.6L752.6 782.9L754.1 782.3L755.5 786.8L757.0 787.4L758.4 782.3L759.9 787.3L761.3 784.4L762.8 787.7L764.2 786.5L765.7 783.1L767.1 782.7L768.6 783.8L770.0 787.9L771.5 786.2L772.9 783.4L774.4 783.9L775.8 783.1L777.3 785.5L778.7 786.5L780.2 792.0L781.6 786.9L783.1 785.5L784.5 782.7L786.0 783.5L787.4 784.6L788.9 783.7L790.3 787.1L791.8 783.9L793.2 782.9L794.7 783.6L796.1 782.5L797.6 782.6L799.0 784.2L800.5 782.2L801.9 785.9L803.4 782.8L804.8 785.1L806.3 784.3L807.7 782.8L809.2 783.9L810.6 783.6L812.1 785.4L813.5 783.7L815.0 787.3L816.4 786.2L817.9 783.1L819.3 782.9L820.8 787.3L822.2 782.9L823.7 782.4L825.1 789.8L826.6 783.8L828.0 783.2L829.5 788.1L830.9 783.0L832.4 786.1L833.8 783.7L835.3 787.3L836.7 782.4L838.2 785.2L839.6 786.7L841.1 784.6L842.5 782.5L844.0 783.3L845.4 782.5L846.9 785.7L848.3 785.1L849.8 787.0L851.2 787.4L852.7 785.5L854.1 783.2L855.6 782.2L857.0 783.8L858.5 782.9L859.9 787.2L861.4 782.1L862.8 784.6L864.3 783.5L865.7 787.4L867.2 782.7L868.6 782.8L870.1 783.1L871.5 783.6L873.0 783.7L874.4 783.6L875.9 782.3L877.3 784.2L878.8 782.5L880.2 783.0L881.7 787.6L883.1 787.3L884.6 786.3L886.0 785.2L887.5 783.8L888.9 784.2L890.4 783.2L891.8 784.9L893.3 785.3L894.7 785.8L896.2 783.1L897.6 783.0L899.1 782.8L900.5 783.9L902.0 783.4L903.4 783.5L904.9 782.4L906.3 787.4L907.8 783.8L909.2 785.9L910.7 783.4L912.1 783.1L913.6 783.9L915.0 782.4L916.5 782.1L917.9 786.6L919.4 785.5L920.8 786.4L922.3 787.2L923.7 782.8L925.2 784.8L926.6 784.7L928.1 786.3L929.5 782.6L931.0 788.8L932.4 788.7L933.9 782.5L935.3 786.3L936.8 786.2L938.2 782.8L939.7 782.4L941.1 783.6L942.6 782.8L944.0 784.0L945.5 787.1L946.9 782.8L948.4 783.9L949.8 789.3L951.3 782.3L952.7 782.6L954.2 783.6L955.6 783.9L957.1 786.6L958.5 791.8L960.0 783.1L961.4 785.3L962.9 783.2L964.3 783.6L965.8 782.8L967.2 783.2L968.7 782.5L970.1 785.0L971.6 783.5L973.0 783.0L974.5 787.1L975.9 784.0L977.4 785.9L978.8 783.6L980.3 783.6L981.7 785.3L983.2 788.1L984.6 782.7L986.1 783.8L987.5 783.3L989.0 785.7L990.4 783.1L991.9 782.4L993.3 786.0L994.8 786.2L996.2 783.8L997.7 783.7L999.1 783.2L1000.6 787.2L1002.0 786.5L1003.5 787.5L1004.9 783.6L1006.4 783.8L1007.8 783.4L1009.3 785.0L1010.7 787.2L1012.2 788.4L1013.6 783.7L1015.1 787.5L1016.5 787.4L1018.0 786.3L1019.4 783.4L1020.9 783.2L1022.3 786.1L1023.8 786.7L1025.2 787.5L1026.7 787.0L1028.1 783.6L1029.6 785.5L1031.0 785.8L1032.5 790.2L1033.9 784.3L1035.4 785.8L1036.8 790.0L1038.3 782.4L1039.7 785.9L1041.2 783.7L1042.6 785.0L1044.1 783.0L1045.5 783.1L1047.0 783.8L1048.4 785.6L1049.9 782.6L1051.3 783.7L1052.8 786.4L1054.2 785.6L1055.7 782.7L1057.1 783.6L1058.6 786.2L1060.0 782.6L1061.5 783.9L1062.9 782.9L1064.4 787.2L1065.8 787.9L1067.3 783.1L1068.7 783.9L1070.2 783.8L1071.6 787.4L1073.1 788.1L1074.5 785.3L1076.0 783.2L1077.4 782.6L1078.9 783.0L1080.3 784.1L1081.8 782.5L1083.2 787.7L1084.7 784.7L1086.1 784.7L1087.6 783.8L1089.0 782.1L1090.5 786.7L1091.0 783.8L1091 801Z" fill="#62501a"/>
<rect x="221" y="804" width="870" height="23" fill="#6cb75f"/>
<rect x="221" y="804" width="870" height="1" fill="#417a39"/>
<rect x="221" y="804" width="1" height="23" fill="#4a8741"/>
<rect x="1090" y="804" width="1" height="23" fill="#4a8741"/>
<path d="M221 827L221.0 827.0L221.5 827.0L222.0 827.0L222.5 827.0L223.0 827.0L223.5 827.0L224.0 827.0L224.5 827.0L225.0 827.0L225.5 826.6L226.0 825.7L226.5 824.8L227.0 823.9L227.5 824.1L228.0 822.9L228.5 822.3L229.0 823.6L229.5 824.8L230.0 825.5L230.5 823.8L231.0 822.0L231.5 820.3L232.0 821.7L232.5 823.4L233.0 823.6L233.5 824.4L234.0 825.3L234.5 826.2L235.0 827.0L235.5 827.0L236.0 827.0L236.5 827.0L237.0 827.0L237.5 827.0L238.0 827.0L238.5 827.0L239.0 827.0L239.5 827.0L240.0 827.0L240.5 827.0L241.0 827.0L241.5 827.0L242.0 827.0L242.5 827.0L243.0 827.0L243.5 827.0L244.0 825.4L244.5 821.9L245.0 818.3L245.5 814.8L246.0 813.4L246.5 808.5L247.0 811.4L247.5 813.0L248.0 812.9L248.5 817.0L249.0 821.0L249.5 825.1L250.0 827.0L250.5 827.0L251.0 827.0L251.5 827.0L252.0 827.0L252.5 827.0L253.0 826.6L253.5 825.9L254.0 825.2L254.5 824.5L255.0 824.7L255.5 825.4L256.0 826.1L256.5 826.8L257.0 827.0L257.5 827.0L258.0 827.0L258.5 827.0L259.0 827.0L259.5 827.0L260.0 827.0L260.5 827.0L261.0 827.0L261.5 827.0L262.0 827.0L262.5 827.0L263.0 827.0L263.5 827.0L264.0 827.0L264.5 827.0L265.0 827.0L265.5 827.0L266.0 827.0L266.5 827.0L267.0 827.0L267.5 827.0L268.0 827.0L268.5 827.0L269.0 826.2L269.5 825.0L270.0 823.9L270.5 822.7L271.0 823.3L271.5 824.5L272.0 825.6L272.5 826.8L273.0 827.0L273.5 827.0L274.0 827.0L274.5 827.0L275.0 827.0L275.5 827.0L276.0 827.0L276.5 827.0L277.0 827.0L277.5 827.0L278.0 827.0L278.5 827.0L279.0 827.0L279.5 827.0L280.0 827.0L280.5 827.0L281.0 827.0L281.5 827.0L282.0 827.0L282.5 827.0L283.0 827.0L283.5 827.0L284.0 827.0L284.5 827.0L285.0 827.0L285.5 827.0L286.0 827.0L286.5 827.0L287.0 827.0L287.5 826.6L288.0 826.0L288.5 825.5L289.0 824.9L289.5 825.1L290.0 825.7L290.5 826.3L291.0 826.9L291.5 827.0L292.0 827.0L292.5 827.0L293.0 827.0L293.5 827.0L294.0 827.0L294.5 827.0L295.0 827.0L295.5 827.0L296.0 827.0L296.5 827.0L297.0 827.0L297.5 827.0L298.0 827.0L298.5 827.0L299.0 827.0L299.5 827.0L300.0 827.0L300.5 827.0L301.0 827.0L301.5 827.0L302.0 827.0L302.5 827.0L303.0 827.0L303.5 827.0L304.0 827.0L304.5 827.0L305.0 827.0L305.5 827.0L306.0 827.0L306.5 827.0L307.0 827.0L307.5 827.0L308.0 827.0L308.5 827.0L309.0 827.0L309.5 827.0L310.0 827.0L310.5 827.0L311.0 827.0L311.5 827.0L312.0 827.0L312.5 827.0L313.0 827.0L313.5 827.0L314.0 827.0L314.5 827.0L315.0 827.0L315.5 827.0L316.0 827.0L316.5 827.0L317.0 827.0L317.5 827.0L318.0 827.0L318.5 827.0L319.0 827.0L319.5 827.0L320.0 827.0L320.5 827.0L321.0 827.0L321.5 827.0L322.0 827.0L322.5 827.0L323.0 827.0L323.5 827.0L324.0 827.0L324.5 827.0L325.0 827.0L325.5 827.0L326.0 827.0L326.5 827.0L327.0 827.0L327.5 827.0L328.0 827.0L328.5 827.0L329.0 827.0L329.5 827.0L330.0 827.0L330.5 827.0L331.0 827.0L331.5 827.0L332.0 827.0L332.5 827.0L333.0 827.0L333.5 827.0L334.0 827.0L334.5 827.0L335.0 827.0L335.5 827.0L336.0 827.0L336.5 827.0L337.0 827.0L337.5 827.0L338.0 826.1L338.5 824.1L339.0 822.1L339.5 820.1L340.0 818.7L340.5 817.6L341.0 816.4L341.5 815.2L342.0 816.5L342.5 819.7L343.0 822.6L343.5 820.5L344.0 818.3L344.5 818.5L345.0 819.6L345.5 820.6L346.0 821.7L346.5 822.7L347.0 823.5L347.5 824.2L348.0 824.4L348.5 822.5L349.0 820.7L349.5 818.1L350.0 814.9L350.5 812.1L351.0 809.5L351.5 808.7L352.0 809.2L352.5 809.7L353.0 811.6L353.5 813.7L354.0 813.0L354.5 809.2L355.0 807.8L355.5 808.4L356.0 809.0L356.5 808.5L357.0 808.0L357.5 807.4L358.0 806.9L358.5 806.8L359.0 808.6L359.5 810.3L360.0 813.7L360.5 817.7L361.0 820.8L361.5 823.7L362.0 826.6L362.5 827.0L363.0 827.0L363.5 808.3L364.0 808.3L365.4 810.2L366.9 807.5L368.3 807.8L369.8 807.7L371.2 808.5L372.7 807.5L374.1 808.4L375.6 812.1L377.0 808.0L378.5 812.5L379.9 809.5L381.4 808.7L382.8 807.6L384.3 809.0L385.7 809.8L387.2 807.8L388.6 807.3L390.1 816.3L391.5 809.7L393.0 809.6L394.4 812.5L395.9 808.4L397.3 812.6L398.8 809.0L400.2 808.5L401.7 808.2L403.1 813.6L404.6 809.9L406.0 808.7L407.5 807.5L408.9 810.9L410.4 812.0L411.8 807.8L413.3 807.8L414.7 809.4L416.2 807.9L417.6 808.0L419.1 810.5L420.5 812.8L422.0 817.3L423.4 808.6L424.9 808.6L426.3 809.0L427.8 807.8L429.2 809.2L430.7 807.5L432.1 815.6L433.6 807.7L435.0 810.5L436.5 808.0L437.9 814.5L439.4 807.8L440.8 808.0L442.3 810.6L443.7 807.5L445.2 807.9L446.6 811.3L448.1 808.8L449.5 809.0L451.0 808.6L452.4 808.1L453.9 807.5L455.3 807.1L456.8 808.6L458.2 807.1L459.7 808.8L461.1 811.3L462.6 811.8L464.0 812.4L465.5 811.0L466.9 813.3L468.4 812.2L469.8 808.6L471.3 807.5L472.7 808.7L474.2 808.9L475.6 813.0L477.1 808.5L478.5 810.7L480.0 807.7L481.4 810.3L482.9 810.7L484.3 810.3L485.8 813.2L487.2 807.6L488.7 808.4L490.1 809.7L491.6 809.8L493.0 810.0L494.5 810.7L495.9 809.9L497.4 814.3L498.8 808.9L500.3 812.6L501.7 811.4L503.2 807.7L504.6 811.4L506.1 807.5L507.5 811.3L509.0 807.8L510.4 811.7L511.9 808.1L513.3 810.5L514.8 808.4L516.2 809.9L517.7 809.7L519.1 812.8L520.6 808.3L522.0 811.5L523.5 809.0L524.9 808.9L526.4 809.1L527.8 807.8L529.3 808.7L530.7 808.9L532.2 808.5L533.6 810.0L535.1 807.7L536.5 809.0L538.0 811.7L539.4 809.3L540.9 808.6L542.3 808.0L543.8 815.8L545.2 809.6L546.7 808.4L548.1 808.9L549.6 809.1L551.1 809.2L552.5 808.2L554.0 813.2L555.4 813.1L556.9 810.6L558.3 809.3L559.8 809.0L561.2 808.3L562.7 814.2L564.1 809.1L565.6 808.6L567.0 808.9L568.5 807.8L569.9 813.6L571.4 808.5L572.8 808.2L574.3 808.2L575.7 808.2L577.2 812.7L578.6 808.8L580.1 807.8L581.5 810.7L583.0 809.4L584.4 809.0L585.9 808.0L587.3 809.0L588.8 807.6L590.2 811.7L591.7 813.7L593.1 810.8L594.6 808.1L596.0 811.2L597.5 811.6L598.9 811.7L600.4 811.9L601.8 812.1L603.3 811.8L604.7 809.7L606.2 808.8L607.6 814.1L609.1 808.6L610.5 807.8L612.0 810.0L613.4 809.7L614.9 808.5L616.3 808.9L617.8 811.8L619.2 809.8L620.7 807.9L622.1 807.7L623.6 811.9L625.0 810.5L626.5 808.5L627.9 808.7L629.4 808.7L630.8 808.1L632.3 812.6L633.7 809.1L635.2 809.0L636.6 812.1L638.1 807.7L639.5 808.4L641.0 809.3L642.4 809.6L643.9 811.0L645.3 811.6L646.8 812.2L648.2 812.0L649.7 808.8L651.1 808.4L652.6 808.6L654.0 811.9L655.5 808.7L656.9 807.8L658.4 807.8L659.8 809.1L661.3 812.2L662.7 809.4L664.2 811.6L665.6 808.0L667.1 808.2L668.5 811.3L670.0 813.1L671.4 811.4L672.9 810.3L674.3 811.7L675.8 808.7L677.2 808.6L678.7 809.3L680.1 808.6L681.6 815.2L683.0 809.1L684.5 813.3L685.9 809.1L687.4 807.6L688.8 807.9L690.3 811.3L691.7 813.6L693.2 807.7L694.6 807.4L696.1 809.8L697.5 811.0L699.0 810.5L700.4 813.3L701.9 807.9L703.3 814.0L704.8 810.1L706.2 808.4L707.7 808.6L709.1 808.1L710.6 807.9L712.0 809.0L713.5 809.2L714.9 809.0L716.4 807.9L717.8 814.9L719.3 808.7L720.7 814.2L722.2 810.9L723.6 809.1L725.1 808.3L726.5 811.3L728.0 810.1L729.4 816.5L730.9 808.0L732.3 807.6L733.8 811.3L735.2 812.1L736.7 808.9L738.1 811.3L739.6 813.6L741.0 810.5L742.5 808.9L743.9 809.1L745.4 812.0L746.8 812.9L748.3 812.7L749.7 807.9L751.2 808.0L752.6 809.1L754.1 807.7L755.5 816.3L757.0 807.4L758.4 812.8L759.9 809.6L761.3 809.9L762.8 811.8L764.2 807.6L765.7 809.1L767.1 812.8L768.6 812.0L770.0 809.5L771.5 807.4L772.9 811.9L774.4 807.9L775.8 811.2L777.3 811.7L778.7 810.5L780.2 807.8L781.6 811.7L783.1 812.1L784.5 810.5L786.0 812.7L787.4 816.5L788.9 816.3L790.3 809.7L791.8 813.0L793.2 807.7L794.7 807.8L796.1 808.5L797.6 809.1L799.0 808.8L800.5 813.0L801.9 813.8L803.4 809.2L804.8 812.2L806.3 809.5L807.7 809.0L809.2 808.3L810.6 812.2L812.1 809.2L813.5 807.7L815.0 808.8L816.4 809.8L817.9 808.4L819.3 808.4L820.8 808.4L822.2 815.5L823.7 808.8L825.1 809.2L826.6 808.6L828.0 807.9L829.5 810.2L830.9 808.0L832.4 808.7L833.8 807.8L835.3 812.1L836.7 810.3L838.2 812.4L839.6 808.5L841.1 811.4L842.5 809.0L844.0 811.6L845.4 808.6L846.9 808.1L848.3 815.2L849.8 812.6L851.2 809.7L852.7 810.4L854.1 809.1L855.6 808.2L857.0 808.2L858.5 811.1L859.9 813.4L861.4 809.5L862.8 807.7L864.3 812.7L865.7 811.0L867.2 812.8L868.6 810.0L870.1 813.8L871.5 808.4L873.0 807.5L874.4 811.5L875.9 807.5L877.3 811.8L878.8 808.0L880.2 808.5L881.7 807.9L883.1 810.3L884.6 808.9L886.0 809.3L887.5 808.8L888.9 816.2L890.4 813.0L891.8 810.4L893.3 808.1L894.7 809.2L896.2 813.1L897.6 811.7L899.1 808.6L900.5 807.4L902.0 807.5L903.4 811.7L904.9 807.7L906.3 812.3L907.8 813.9L909.2 813.0L910.7 808.4L912.1 808.5L913.6 808.7L915.0 808.3L916.5 807.6L917.9 810.0L919.4 813.6L920.8 807.7L922.3 808.1L923.7 808.4L925.2 809.0L926.6 810.9L928.1 811.3L929.5 807.9L931.0 807.2L932.4 813.2L933.9 808.1L935.3 807.5L936.8 809.0L938.2 808.6L939.7 810.3L941.1 808.4L942.6 812.0L944.0 808.7L945.5 812.4L946.9 810.3L948.4 812.0L949.8 811.8L951.3 812.6L952.7 811.6L954.2 808.3L955.6 811.0L957.1 809.0L958.5 815.2L960.0 812.3L961.4 813.6L962.9 807.9L964.3 808.9L965.8 810.8L967.2 810.0L968.7 808.4L970.1 811.8L971.6 812.7L973.0 811.0L974.5 815.7L975.9 808.8L977.4 813.3L978.8 808.2L980.3 808.0L981.7 811.1L983.2 808.3L984.6 812.1L986.1 808.9L987.5 814.7L989.0 812.1L990.4 809.2L991.9 811.5L993.3 810.3L994.8 808.7L996.2 810.3L997.7 810.7L999.1 807.5L1000.6 807.8L1002.0 812.3L1003.5 807.8L1004.9 808.8L1006.4 812.8L1007.8 808.8L1009.3 809.0L1010.7 807.5L1012.2 808.4L1013.6 809.5L1015.1 808.8L1016.5 811.5L1018.0 808.3L1019.4 808.6L1020.9 809.9L1022.3 811.1L1023.8 808.2L1025.2 807.3L1026.7 814.4L1028.1 812.8L1029.6 812.4L1031.0 808.8L1032.5 807.4L1033.9 807.4L1035.4 807.9L1036.8 808.9L1038.3 809.1L1039.7 807.6L1041.2 808.6L1042.6 809.2L1044.1 807.7L1045.5 810.8L1047.0 813.2L1048.4 811.2L1049.9 811.4L1051.3 809.0L1052.8 812.1L1054.2 811.4L1055.7 808.1L1057.1 813.0L1058.6 814.4L1060.0 815.3L1061.5 808.0L1062.9 812.2L1064.4 808.4L1065.8 809.0L1067.3 809.9L1068.7 808.2L1070.2 808.3L1071.6 810.8L1073.1 808.4L1074.5 810.3L1076.0 813.0L1077.4 807.9L1078.9 807.8L1080.3 807.8L1081.8 807.6L1083.2 807.7L1084.7 807.7L1086.1 807.5L1087.6 814.1L1089.0 813.3L1090.5 811.2L1091.0 808.4L1091 827Z" fill="#62501a"/>
<rect x="221" y="829" width="870" height="23" fill="#6cb75f"/>
<rect x="221" y="829" width="870" height="1" fill="#417a39"/>
<rect x="221" y="829" width="1" height="23" fill="#4a8741"/>
<rect x="1090" y="829" width="1" height="23" fill="#4a8741"/>
<path d="M221 852L221.0 852.0L221.5 852.0L222.0 852.0L222.5 852.0L223.0 852.0L223.5 852.0L224.0 852.0L224.5 852.0L225.0 852.0L225.5 852.0L226.0 852.0L226.5 852.0L227.0 852.0L227.5 852.0L228.0 852.0L228.5 852.0L229.0 852.0L229.5 852.0L230.0 852.0L230.5 852.0L231.0 852.0L231.5 852.0L232.0 852.0L232.5 852.0L233.0 852.0L233.5 852.0L234.0 852.0L234.5 852.0L235.0 852.0L235.5 852.0L236.0 852.0L236.5 852.0L237.0 852.0L237.5 852.0L238.0 852.0L238.5 852.0L239.0 852.0L239.5 852.0L240.0 852.0L240.5 852.0L241.0 852.0L241.5 852.0L242.0 852.0L242.5 852.0L243.0 852.0L243.5 852.0L244.0 852.0L244.5 852.0L245.0 852.0L245.5 852.0L246.0 852.0L246.5 852.0L247.0 852.0L247.5 852.0L248.0 852.0L248.5 852.0L249.0 852.0L249.5 852.0L250.0 852.0L250.5 852.0L251.0 852.0L251.5 852.0L252.0 852.0L252.5 852.0L253.0 852.0L253.5 852.0L254.0 852.0L254.5 852.0L255.0 852.0L255.5 852.0L256.0 852.0L256.5 852.0L257.0 852.0L257.5 852.0L258.0 852.0L258.5 852.0L259.0 852.0L259.5 852.0L260.0 852.0L260.5 852.0L261.0 852.0L261.5 852.0L262.0 852.0L262.5 852.0L263.0 852.0L263.5 852.0L264.0 852.0L264.5 852.0L265.0 852.0L265.5 852.0L266.0 852.0L266.5 852.0L267.0 852.0L267.5 852.0L268.0 852.0L268.5 852.0L269.0 852.0L269.5 852.0L270.0 852.0L270.5 852.0L271.0 852.0L271.5 852.0L272.0 852.0L272.5 852.0L273.0 852.0L273.5 852.0L274.0 852.0L274.5 852.0L275.0 852.0L275.5 852.0L276.0 852.0L276.5 852.0L277.0 852.0L277.5 852.0L278.0 852.0L278.5 852.0L279.0 852.0L279.5 852.0L280.0 852.0L280.5 852.0L281.0 852.0L281.5 852.0L282.0 852.0L282.5 852.0L283.0 852.0L283.5 852.0L284.0 852.0L284.5 852.0L285.0 852.0L285.5 852.0L286.0 852.0L286.5 852.0L287.0 852.0L287.5 852.0L288.0 852.0L288.5 852.0L289.0 852.0L289.5 852.0L290.0 852.0L290.5 852.0L291.0 852.0L291.5 852.0L292.0 852.0L292.5 852.0L293.0 852.0L293.5 852.0L294.0 852.0L294.5 852.0L295.0 852.0L295.5 852.0L296.0 852.0L296.5 852.0L297.0 852.0L297.5 852.0L298.0 852.0L298.5 852.0L299.0 852.0L299.5 852.0L300.0 852.0L300.5 852.0L301.0 852.0L301.5 852.0L302.0 852.0L302.5 852.0L303.0 852.0L303.5 852.0L304.0 852.0L304.5 852.0L305.0 852.0L305.5 852.0L306.0 852.0L306.5 852.0L307.0 852.0L307.5 852.0L308.0 852.0L308.5 852.0L309.0 852.0L309.5 852.0L310.0 852.0L310.5 852.0L311.0 852.0L311.5 852.0L312.0 852.0L312.5 852.0L313.0 852.0L313.5 852.0L314.0 852.0L314.5 852.0L315.0 852.0L315.5 852.0L316.0 852.0L316.5 852.0L317.0 852.0L317.5 852.0L318.0 852.0L318.5 852.0L319.0 852.0L319.5 852.0L320.0 852.0L320.5 852.0L321.0 852.0L321.5 852.0L322.0 852.0L322.5 852.0L323.0 852.0L323.5 852.0L324.0 852.0L324.5 852.0L325.0 852.0L325.5 852.0L326.0 852.0L326.5 852.0L327.0 852.0L327.5 852.0L328.0 852.0L328.5 852.0L329.0 852.0L329.5 852.0L330.0 852.0L330.5 852.0L331.0 852.0L331.5 852.0L332.0 852.0L332.5 852.0L333.0 852.0L333.5 852.0L334.0 852.0L334.5 851.9L335.0 851.4L335.5 850.9L336.0 850.5L336.5 850.3L337.0 850.8L337.5 852.0L338.0 850.7L338.5 847.8L339.0 845.0L339.5 842.2L340.0 840.7L340.5 839.3L341.0 837.9L341.5 836.5L342.0 835.7L342.5 840.4L343.0 844.8L343.5 842.5L344.0 840.2L344.5 841.2L345.0 843.4L345.5 845.6L346.0 847.8L346.5 848.7L347.0 849.3L347.5 849.9L348.0 850.0L348.5 848.1L349.0 846.3L349.5 842.8L350.0 840.1L350.5 840.1L351.0 840.1L351.5 839.2L352.0 837.2L352.5 835.1L353.0 834.8L353.5 834.5L354.0 835.3L354.5 836.6L355.0 837.4L355.5 836.3L356.0 835.1L356.5 833.6L357.0 832.1L357.5 831.2L358.0 833.1L358.5 834.9L359.0 835.8L359.5 835.9L360.0 836.0L360.5 836.1L361.0 840.2L361.5 845.7L362.0 851.2L362.5 852.0L363.0 852.0L363.5 833.3L364.0 833.3L365.4 835.8L366.9 835.0L368.3 833.9L369.8 837.7L371.2 836.4L372.7 833.0L374.1 834.1L375.6 834.1L377.0 838.1L378.5 833.8L379.9 838.4L381.4 833.0L382.8 836.1L384.3 839.0L385.7 835.8L387.2 832.7L388.6 837.2L390.1 833.4L391.5 838.9L393.0 832.6L394.4 833.1L395.9 835.8L397.3 835.4L398.8 840.2L400.2 837.5L401.7 834.5L403.1 834.0L404.6 834.0L406.0 833.7L407.5 833.4L408.9 833.3L410.4 832.4L411.8 833.5L413.3 832.6L414.7 837.8L416.2 832.9L417.6 833.5L419.1 837.2L420.5 832.8L422.0 838.6L423.4 832.4L424.9 839.5L426.3 835.9L427.8 832.8L429.2 835.9L430.7 836.2L432.1 832.3L433.6 835.0L435.0 838.2L436.5 833.2L437.9 839.6L439.4 838.6L440.8 833.2L442.3 835.6L443.7 832.3L445.2 834.5L446.6 834.0L448.1 838.7L449.5 833.9L451.0 834.1L452.4 832.7L453.9 837.4L455.3 835.7L456.8 835.8L458.2 833.7L459.7 837.3L461.1 834.2L462.6 837.3L464.0 833.2L465.5 834.2L466.9 832.4L468.4 838.0L469.8 836.3L471.3 834.2L472.7 835.4L474.2 832.5L475.6 832.9L477.1 835.1L478.5 838.1L480.0 837.8L481.4 833.9L482.9 833.3L484.3 836.6L485.8 832.6L487.2 837.0L488.7 832.5L490.1 833.9L491.6 833.3L493.0 836.8L494.5 834.9L495.9 836.5L497.4 837.2L498.8 837.3L500.3 834.9L501.7 833.1L503.2 833.1L504.6 832.4L506.1 832.5L507.5 839.9L509.0 833.9L510.4 833.2L511.9 840.2L513.3 833.1L514.8 832.7L516.2 833.2L517.7 832.5L519.1 836.2L520.6 834.1L522.0 832.9L523.5 841.7L524.9 836.7L526.4 837.9L527.8 838.0L529.3 832.1L530.7 838.9L532.2 833.5L533.6 838.2L535.1 836.8L536.5 833.7L538.0 833.1L539.4 833.8L540.9 833.0L542.3 833.8L543.8 834.7L545.2 833.3L546.7 833.6L548.1 833.8L549.6 838.1L551.1 832.5L552.5 832.4L554.0 833.9L555.4 836.7L556.9 833.3L558.3 837.6L559.8 833.6L561.2 833.4L562.7 833.1L564.1 835.5L565.6 833.7L567.0 832.3L568.5 832.3L569.9 835.6L571.4 836.0L572.8 837.8L574.3 836.1L575.7 833.6L577.2 836.7L578.6 837.5L580.1 832.7L581.5 832.4L583.0 832.6L584.4 832.4L585.9 832.3L587.3 835.4L588.8 835.2L590.2 835.1L591.7 834.2L593.1 834.4L594.6 834.9L596.0 836.5L597.5 834.8L598.9 832.7L600.4 835.8L601.8 834.3L603.3 835.3L604.7 833.2L606.2 832.6L607.6 834.8L609.1 833.2L610.5 838.0L612.0 834.7L613.4 835.4L614.9 833.6L616.3 834.6L617.8 836.5L619.2 836.1L620.7 833.2L622.1 833.9L623.6 833.4L625.0 832.4L626.5 836.3L627.9 842.2L629.4 832.5L630.8 833.5L632.3 833.4L633.7 833.0L635.2 837.0L636.6 837.6L638.1 838.2L639.5 835.6L641.0 832.3L642.4 833.8L643.9 832.7L645.3 835.8L646.8 833.9L648.2 833.8L649.7 834.0L651.1 832.2L652.6 832.5L654.0 833.0L655.5 833.6L656.9 835.4L658.4 833.2L659.8 832.5L661.3 833.0L662.7 836.1L664.2 832.9L665.6 836.8L667.1 839.0L668.5 836.3L670.0 837.7L671.4 833.1L672.9 833.2L674.3 833.9L675.8 833.0L677.2 835.2L678.7 832.9L680.1 835.9L681.6 839.1L683.0 834.0L684.5 833.4L685.9 837.0L687.4 837.1L688.8 836.7L690.3 835.9L691.7 833.4L693.2 838.9L694.6 833.5L696.1 836.4L697.5 836.4L699.0 832.6L700.4 833.2L701.9 833.2L703.3 832.3L704.8 836.7L706.2 834.4L707.7 833.7L709.1 832.7L710.6 834.0L712.0 832.4L713.5 836.2L714.9 833.1L716.4 835.4L717.8 833.3L719.3 833.4L720.7 838.2L722.2 833.2L723.6 834.1L725.1 836.5L726.5 832.9L728.0 833.0L729.4 833.3L730.9 832.3L732.3 832.7L733.8 834.4L735.2 837.2L736.7 832.4L738.1 832.5L739.6 837.9L741.0 833.9L742.5 837.8L743.9 835.4L745.4 834.1L746.8 835.4L748.3 834.2L749.7 834.0L751.2 833.5L752.6 833.2L754.1 834.9L755.5 834.0L757.0 833.1L758.4 832.3L759.9 832.9L761.3 833.5L762.8 832.7L764.2 840.0L765.7 833.9L767.1 835.3L768.6 833.7L770.0 833.4L771.5 833.3L772.9 835.4L774.4 837.6L775.8 834.2L777.3 836.6L778.7 833.4L780.2 834.0L781.6 835.8L783.1 833.2L784.5 833.5L786.0 832.5L787.4 832.6L788.9 833.9L790.3 834.0L791.8 833.7L793.2 832.9L794.7 834.0L796.1 833.2L797.6 834.8L799.0 832.9L800.5 839.5L801.9 837.8L803.4 836.7L804.8 842.0L806.3 835.9L807.7 832.8L809.2 835.4L810.6 836.8L812.1 837.2L813.5 833.4L815.0 837.1L816.4 835.8L817.9 832.5L819.3 839.2L820.8 833.6L822.2 833.2L823.7 837.2L825.1 834.2L826.6 833.5L828.0 835.6L829.5 833.2L830.9 837.2L832.4 833.8L833.8 833.9L835.3 833.1L836.7 833.1L838.2 835.1L839.6 832.4L841.1 836.4L842.5 835.5L844.0 833.8L845.4 833.1L846.9 832.7L848.3 833.9L849.8 833.3L851.2 835.4L852.7 833.4L854.1 836.9L855.6 832.9L857.0 833.2L858.5 833.1L859.9 835.5L861.4 835.4L862.8 833.5L864.3 839.5L865.7 837.4L867.2 832.8L868.6 833.6L870.1 834.0L871.5 841.4L873.0 836.7L874.4 834.6L875.9 835.3L877.3 833.0L878.8 835.1L880.2 837.6L881.7 833.2L883.1 834.0L884.6 833.3L886.0 837.1L887.5 833.1L888.9 834.7L890.4 834.2L891.8 833.6L893.3 836.6L894.7 838.8L896.2 835.3L897.6 837.6L899.1 834.1L900.5 834.0L902.0 837.5L903.4 833.2L904.9 838.1L906.3 836.7L907.8 837.5L909.2 834.0L910.7 837.1L912.1 833.8L913.6 833.4L915.0 834.0L916.5 833.5L917.9 833.1L919.4 836.3L920.8 840.7L922.3 835.4L923.7 833.1L925.2 836.6L926.6 836.6L928.1 837.9L929.5 837.3L931.0 836.0L932.4 833.2L933.9 832.8L935.3 834.4L936.8 833.6L938.2 832.9L939.7 833.6L941.1 834.6L942.6 832.6L944.0 834.2L945.5 832.5L946.9 837.6L948.4 835.1L949.8 838.8L951.3 833.1L952.7 834.2L954.2 833.9L955.6 836.4L957.1 836.5L958.5 836.4L960.0 837.6L961.4 834.4L962.9 836.2L964.3 840.4L965.8 836.8L967.2 838.6L968.7 838.2L970.1 834.2L971.6 836.8L973.0 833.7L974.5 832.6L975.9 834.3L977.4 838.3L978.8 837.0L980.3 835.0L981.7 836.7L983.2 837.0L984.6 837.4L986.1 835.2L987.5 836.9L989.0 834.1L990.4 833.0L991.9 833.1L993.3 832.9L994.8 832.8L996.2 832.2L997.7 833.3L999.1 833.7L1000.6 838.2L1002.0 835.3L1003.5 832.8L1004.9 832.2L1006.4 833.2L1007.8 833.3L1009.3 836.6L1010.7 837.4L1012.2 832.6L1013.6 837.1L1015.1 832.7L1016.5 832.9L1018.0 837.8L1019.4 835.1L1020.9 836.0L1022.3 832.6L1023.8 833.9L1025.2 832.6L1026.7 833.0L1028.1 833.8L1029.6 834.2L1031.0 833.7L1032.5 836.5L1033.9 838.0L1035.4 840.3L1036.8 832.8L1038.3 836.5L1039.7 837.4L1041.2 832.7L1042.6 832.6L1044.1 832.1L1045.5 833.8L1047.0 837.1L1048.4 832.6L1049.9 834.8L1051.3 834.7L1052.8 835.2L1054.2 835.7L1055.7 833.7L1057.1 835.7L1058.6 832.5L1060.0 834.0L1061.5 833.1L1062.9 832.6L1064.4 836.3L1065.8 832.8L1067.3 833.0L1068.7 838.4L1070.2 832.5L1071.6 832.8L1073.1 836.5L1074.5 833.9L1076.0 832.9L1077.4 838.1L1078.9 836.7L1080.3 835.4L1081.8 834.3L1083.2 832.9L1084.7 833.1L1086.1 833.1L1087.6 836.5L1089.0 833.0L1090.5 833.3L1091.0 832.4L1091 852Z" fill="#62501a"/>
<rect x="221" y="854" width="870" height="7" fill="#6cb75f"/>
<rect x="221" y="854" width="870" height="1" fill="#417a39"/>
<rect x="221" y="854" width="1" height="7" fill="#4a8741"/>
<rect x="1090" y="854" width="1" height="7" fill="#4a8741"/>
<path d="M221 861L221.0 861.0L221.5 861.0L222.0 861.0L222.5 861.0L223.0 861.0L223.5 861.0L224.0 861.0L224.5 861.0L225.0 861.0L225.5 861.0L226.0 861.0L226.5 861.0L227.0 861.0L227.5 861.0L228.0 861.0L228.5 861.0L229.0 861.0L229.5 861.0L230.0 861.0L230.5 861.0L231.0 861.0L231.5 861.0L232.0 861.0L232.5 861.0L233.0 861.0L233.5 861.0L234.0 861.0L234.5 861.0L235.0 861.0L235.5 861.0L236.0 861.0L236.5 861.0L237.0 861.0L237.5 861.0L238.0 861.0L238.5 861.0L239.0 861.0L239.5 861.0L240.0 861.0L240.5 861.0L241.0 861.0L241.5 861.0L242.0 861.0L242.5 861.0L243.0 861.0L243.5 861.0L244.0 861.0L244.5 861.0L245.0 861.0L245.5 861.0L246.0 861.0L246.5 861.0L247.0 861.0L247.5 861.0L248.0 861.0L248.5 861.0L249.0 861.0L249.5 861.0L250.0 861.0L250.5 861.0L251.0 861.0L251.5 861.0L252.0 861.0L252.5 861.0L253.0 861.0L253.5 861.0L254.0 861.0L254.5 861.0L255.0 861.0L255.5 861.0L256.0 861.0L256.5 861.0L257.0 861.0L257.5 861.0L258.0 861.0L258.5 861.0L259.0 861.0L259.5 861.0L260.0 861.0L260.5 861.0L261.0 861.0L261.5 861.0L262.0 861.0L262.5 861.0L263.0 861.0L263.5 861.0L264.0 861.0L264.5 861.0L265.0 861.0L265.5 861.0L266.0 861.0L266.5 861.0L267.0 861.0L267.5 861.0L268.0 861.0L268.5 861.0L269.0 861.0L269.5 861.0L270.0 861.0L270.5 861.0L271.0 861.0L271.5 861.0L272.0 861.0L272.5 861.0L273.0 861.0L273.5 861.0L274.0 861.0L274.5 861.0L275.0 861.0L275.5 861.0L276.0 861.0L276.5 861.0L277.0 861.0L277.5 861.0L278.0 861.0L278.5 861.0L279.0 861.0L279.5 861.0L280.0 861.0L280.5 861.0L281.0 861.0L281.5 861.0L282.0 861.0L282.5 861.0L283.0 861.0L283.5 861.0L284.0 861.0L284.5 861.0L285.0 861.0L285.5 861.0L286.0 861.0L286.5 861.0L287.0 861.0L287.5 861.0L288.0 861.0L288.5 861.0L289.0 861.0L289.5 861.0L290.0 861.0L290.5 861.0L291.0 861.0L291.5 861.0L292.0 861.0L292.5 861.0L293.0 861.0L293.5 861.0L294.0 861.0L294.5 861.0L295.0 861.0L295.5 861.0L296.0 861.0L296.5 861.0L297.0 861.0L297.5 861.0L298.0 861.0L298.5 861.0L299.0 861.0L299.5 861.0L300.0 861.0L300.5 861.0L301.0 861.0L301.5 861.0L302.0 861.0L302.5 861.0L303.0 861.0L303.5 861.0L304.0 861.0L304.5 861.0L305.0 861.0L305.5 861.0L306.0 861.0L306.5 861.0L307.0 861.0L307.5 861.0L308.0 861.0L308.5 861.0L309.0 861.0L309.5 861.0L310.0 861.0L310.5 861.0L311.0 861.0L311.5 861.0L312.0 861.0L312.5 861.0L313.0 861.0L313.5 861.0L314.0 861.0L314.5 861.0L315.0 861.0L315.5 861.0L316.0 861.0L316.5 861.0L317.0 861.0L317.5 861.0L318.0 861.0L318.5 861.0L319.0 861.0L319.5 861.0L320.0 861.0L320.5 861.0L321.0 861.0L321.5 861.0L322.0 861.0L322.5 861.0L323.0 861.0L323.5 861.0L324.0 861.0L324.5 861.0L325.0 861.0L325.5 861.0L326.0 861.0L326.5 861.0L327.0 861.0L327.5 861.0L328.0 861.0L328.5 861.0L329.0 861.0L329.5 861.0L330.0 861.0L330.5 861.0L331.0 861.0L331.5 861.0L332.0 861.0L332.5 861.0L333.0 861.0L333.5 861.0L334.0 861.0L334.5 861.0L335.0 861.0L335.5 861.0L336.0 861.0L336.5 861.0L337.0 861.0L337.5 861.0L338.0 861.0L338.5 861.0L339.0 861.0L339.5 861.0L340.0 861.0L340.5 861.0L341.0 861.0L341.5 861.0L342.0 861.0L342.5 861.0L343.0 861.0L343.5 861.0L344.0 861.0L344.5 861.0L345.0 861.0L345.5 861.0L346.0 861.0L346.5 861.0L347.0 861.0L347.5 861.0L348.0 861.0L348.5 861.0L349.0 861.0L349.5 861.0L350.0 861.0L350.5 861.0L351.0 861.0L351.5 861.0L352.0 860.0L352.5 858.5L353.0 859.9L353.5 861.0L354.0 861.0L354.5 861.0L355.0 861.0L355.5 861.0L356.0 861.0L356.5 861.0L357.0 861.0L357.5 861.0L358.0 860.2L358.5 858.8L359.0 858.0L359.5 861.0L360.0 861.0L360.5 861.0L361.0 861.0L361.5 861.0L362.0 861.0L362.5 861.0L363.0 861.0L363.5 856.8L364.0 856.8L365.4 856.0L366.9 857.8L368.3 856.1L369.8 861.0L371.2 856.5L372.7 861.0L374.1 856.9L375.6 860.8L377.0 857.2L378.5 861.0L379.9 855.8L381.4 855.9L382.8 858.0L384.3 857.2L385.7 856.9L387.2 856.7L388.6 857.0L390.1 859.7L391.5 860.7L393.0 859.0L394.4 857.0L395.9 860.3L397.3 856.7L398.8 859.5L400.2 857.1L401.7 857.1L403.1 856.3L404.6 861.0L406.0 861.0L407.5 859.5L408.9 859.8L410.4 861.0L411.8 856.4L413.3 858.3L414.7 861.0L416.2 859.7L417.6 861.0L419.1 861.0L420.5 860.4L422.0 856.3L423.4 859.8L424.9 860.4L426.3 859.5L427.8 856.9L429.2 857.0L430.7 860.3L432.1 859.5L433.6 855.7L435.0 860.3L436.5 856.4L437.9 857.9L439.4 857.7L440.8 857.6L442.3 861.0L443.7 856.8L445.2 857.0L446.6 857.2L448.1 860.9L449.5 860.4L451.0 856.2L452.4 860.3L453.9 857.7L455.3 856.1L456.8 856.7L458.2 861.0L459.7 855.8L461.1 858.6L462.6 857.8L464.0 858.6L465.5 856.3L466.9 857.6L468.4 860.2L469.8 856.7L471.3 858.4L472.7 860.5L474.2 858.6L475.6 857.6L477.1 856.5L478.5 860.9L480.0 856.9L481.4 861.0L482.9 860.4L484.3 860.4L485.8 859.8L487.2 855.8L488.7 857.2L490.1 856.4L491.6 858.7L493.0 856.4L494.5 861.0L495.9 861.0L497.4 857.7L498.8 861.0L500.3 860.3L501.7 857.1L503.2 856.9L504.6 858.5L506.1 857.5L507.5 857.8L509.0 857.9L510.4 855.8L511.9 856.5L513.3 857.6L514.8 861.0L516.2 856.9L517.7 858.1L519.1 861.0L520.6 858.8L522.0 859.8L523.5 857.3L524.9 860.2L526.4 856.1L527.8 856.7L529.3 860.9L530.7 857.0L532.2 859.2L533.6 856.0L535.1 861.0L536.5 857.3L538.0 860.1L539.4 856.2L540.9 857.6L542.3 857.1L543.8 857.1L545.2 858.8L546.7 855.8L548.1 860.1L549.6 857.5L551.1 859.8L552.5 857.3L554.0 856.4L555.4 857.6L556.9 859.7L558.3 857.6L559.8 857.0L561.2 856.2L562.7 859.2L564.1 861.0L565.6 857.4L567.0 859.5L568.5 857.0L569.9 859.9L571.4 856.6L572.8 857.8L574.3 856.9L575.7 857.3L577.2 860.1L578.6 856.7L580.1 859.2L581.5 856.2L583.0 857.2L584.4 861.0L585.9 859.3L587.3 860.9L588.8 857.3L590.2 858.2L591.7 861.0L593.1 857.0L594.6 858.8L596.0 860.9L597.5 857.3L598.9 856.7L600.4 858.8L601.8 856.5L603.3 856.3L604.7 861.0L606.2 861.0L607.6 856.1L609.1 860.2L610.5 857.1L612.0 857.0L613.4 856.2L614.9 856.0L616.3 857.0L617.8 857.6L619.2 857.6L620.7 857.9L622.1 856.9L623.6 857.5L625.0 857.2L626.5 857.4L627.9 856.6L629.4 857.5L630.8 857.8L632.3 857.2L633.7 860.4L635.2 857.3L636.6 859.8L638.1 861.0L639.5 860.1L641.0 856.2L642.4 856.4L643.9 860.9L645.3 857.6L646.8 857.6L648.2 857.4L649.7 860.5L651.1 857.7L652.6 859.0L654.0 857.0L655.5 855.9L656.9 860.4L658.4 856.5L659.8 856.4L661.3 856.1L662.7 859.5L664.2 860.8L665.6 861.0L667.1 858.4L668.5 861.0L670.0 859.7L671.4 857.4L672.9 860.2L674.3 858.4L675.8 857.2L677.2 858.1L678.7 857.3L680.1 857.3L681.6 856.1L683.0 857.6L684.5 858.0L685.9 861.0L687.4 860.0L688.8 859.0L690.3 860.6L691.7 857.8L693.2 861.0L694.6 858.3L696.1 856.1L697.5 861.0L699.0 859.5L700.4 858.1L701.9 856.4L703.3 857.0L704.8 860.6L706.2 860.7L707.7 857.5L709.1 861.0L710.6 859.2L712.0 860.3L713.5 861.0L714.9 856.5L716.4 861.0L717.8 861.0L719.3 860.6L720.7 856.5L722.2 858.1L723.6 859.9L725.1 855.8L726.5 858.6L728.0 859.2L729.4 856.0L730.9 861.0L732.3 857.6L733.8 856.3L735.2 859.9L736.7 861.0L738.1 861.0L739.6 860.4L741.0 856.8L742.5 861.0L743.9 859.9L745.4 857.5L746.8 857.1L748.3 856.4L749.7 856.0L751.2 856.8L752.6 857.1L754.1 856.0L755.5 856.9L757.0 861.0L758.4 859.7L759.9 860.3L761.3 856.0L762.8 861.0L764.2 859.9L765.7 861.0L767.1 856.9L768.6 855.8L770.0 860.8L771.5 859.8L772.9 861.0L774.4 858.2L775.8 856.8L777.3 859.0L778.7 856.6L780.2 856.2L781.6 856.6L783.1 860.5L784.5 860.6L786.0 861.0L787.4 858.8L788.9 859.1L790.3 856.9L791.8 859.7L793.2 858.4L794.7 855.6L796.1 859.1L797.6 859.9L799.0 856.1L800.5 857.4L801.9 858.4L803.4 857.4L804.8 857.9L806.3 856.3L807.7 857.0L809.2 858.4L810.6 858.0L812.1 860.2L813.5 857.1L815.0 855.9L816.4 856.2L817.9 856.6L819.3 856.4L820.8 857.3L822.2 856.9L823.7 859.3L825.1 860.3L826.6 857.4L828.0 861.0L829.5 857.3L830.9 860.0L832.4 856.3L833.8 857.2L835.3 857.0L836.7 860.0L838.2 858.0L839.6 860.3L841.1 855.8L842.5 858.5L844.0 856.7L845.4 857.2L846.9 858.6L848.3 860.5L849.8 856.5L851.2 859.1L852.7 858.4L854.1 860.5L855.6 859.0L857.0 860.2L858.5 856.8L859.9 856.6L861.4 856.3L862.8 856.3L864.3 856.5L865.7 857.7L867.2 856.2L868.6 856.2L870.1 857.0L871.5 857.7L873.0 860.0L874.4 861.0L875.9 860.0L877.3 857.4L878.8 857.7L880.2 860.5L881.7 857.5L883.1 856.6L884.6 861.0L886.0 861.0L887.5 857.4L888.9 856.8L890.4 857.3L891.8 857.2L893.3 860.7L894.7 856.3L896.2 858.5L897.6 860.6L899.1 859.4L900.5 856.8L902.0 857.4L903.4 857.2L904.9 857.2L906.3 856.7L907.8 856.0L909.2 855.8L910.7 861.0L912.1 861.0L913.6 856.4L915.0 857.3L916.5 858.6L917.9 857.1L919.4 857.8L920.8 858.4L922.3 858.6L923.7 857.4L925.2 861.0L926.6 860.8L928.1 857.1L929.5 856.6L931.0 858.9L932.4 856.1L933.9 861.0L935.3 856.8L936.8 861.0L938.2 856.6L939.7 856.8L941.1 859.5L942.6 857.2L944.0 856.0L945.5 856.0L946.9 855.9L948.4 857.7L949.8 859.3L951.3 857.3L952.7 860.5L954.2 857.6L955.6 856.0L957.1 856.8L958.5 856.4L960.0 859.9L961.4 861.0L962.9 860.0L964.3 860.6L965.8 856.9L967.2 856.8L968.7 856.3L970.1 861.0L971.6 861.0L973.0 857.5L974.5 857.3L975.9 858.8L977.4 857.0L978.8 859.7L980.3 857.1L981.7 857.1L983.2 859.1L984.6 859.2L986.1 859.3L987.5 856.5L989.0 857.5L990.4 860.4L991.9 860.2L993.3 861.0L994.8 860.6L996.2 860.0L997.7 857.0L999.1 856.9L1000.6 856.8L1002.0 856.9L1003.5 859.0L1004.9 860.1L1006.4 857.2L1007.8 860.9L1009.3 861.0L1010.7 861.0L1012.2 857.3L1013.6 861.0L1015.1 861.0L1016.5 860.3L1018.0 857.3L1019.4 861.0L1020.9 860.8L1022.3 857.3L1023.8 860.0L1025.2 860.6L1026.7 856.6L1028.1 859.1L1029.6 857.0L1031.0 856.0L1032.5 861.0L1033.9 856.4L1035.4 857.3L1036.8 855.5L1038.3 855.8L1039.7 861.0L1041.2 856.3L1042.6 860.3L1044.1 858.9L1045.5 856.0L1047.0 857.3L1048.4 857.6L1049.9 856.5L1051.3 858.9L1052.8 861.0L1054.2 858.1L1055.7 861.0L1057.1 861.0L1058.6 857.1L1060.0 856.5L1061.5 857.4L1062.9 859.7L1064.4 860.4L1065.8 858.4L1067.3 861.0L1068.7 856.5L1070.2 857.4L1071.6 856.4L1073.1 860.5L1074.5 861.0L1076.0 857.7L1077.4 857.8L1078.9 857.0L1080.3 859.4L1081.8 856.4L1083.2 858.5L1084.7 861.0L1086.1 861.0L1087.6 859.5L1089.0 858.5L1090.5 858.2L1091.0 857.1L1091 861Z" fill="#62501a"/>
<path d="M221 887L221.0 886.2L221.5 886.2L222.0 886.2L222.5 886.2L223.0 886.2L223.5 886.2L224.0 886.2L224.5 886.2L225.0 886.2L225.5 886.2L226.0 886.2L226.5 886.2L227.0 886.2L227.5 886.2L228.0 886.2L228.5 886.2L229.0 886.2L229.5 886.2L230.0 886.2L230.5 886.2L231.0 886.2L231.5 886.2L232.0 886.2L232.5 886.2L233.0 886.2L233.5 886.2L234.0 886.2L234.5 886.2L235.0 886.2L235.5 886.2L236.0 886.2L236.5 886.2L237.0 886.2L237.5 886.2L238.0 886.2L238.5 886.2L239.0 886.2L239.5 886.2L240.0 886.2L240.5 886.2L241.0 886.2L241.5 886.2L242.0 886.2L242.5 886.2L243.0 886.2L243.5 886.2L244.0 886.2L244.5 886.2L245.0 886.2L245.5 886.2L246.0 886.2L246.5 886.2L247.0 886.2L247.5 886.2L248.0 886.2L248.5 886.2L249.0 886.2L249.5 886.2L250.0 886.2L250.5 886.2L251.0 886.2L251.5 886.2L252.0 886.2L252.5 886.2L253.0 886.2L253.5 886.2L254.0 886.2L254.5 886.2L255.0 886.2L255.5 886.2L256.0 886.2L256.5 886.2L257.0 886.2L257.5 886.2L258.0 886.2L258.5 886.2L259.0 886.2L259.5 886.2L260.0 886.2L260.5 886.2L261.0 886.2L261.5 886.2L262.0 886.2L262.5 886.2L263.0 886.2L263.5 886.2L264.0 886.2L264.5 886.2L265.0 886.2L265.5 886.2L266.0 886.2L266.5 886.2L267.0 886.2L267.5 886.2L268.0 886.2L268.5 886.2L269.0 886.2L269.5 886.2L270.0 886.2L270.5 886.2L271.0 886.2L271.5 886.2L272.0 886.2L272.5 886.2L273.0 886.2L273.5 886.2L274.0 886.2L274.5 886.2L275.0 886.2L275.5 886.2L276.0 886.2L276.5 886.2L277.0 886.2L277.5 886.2L278.0 886.2L278.5 886.2L279.0 886.2L279.5 886.2L280.0 886.2L280.5 886.2L281.0 886.2L281.5 886.2L282.0 886.2L282.5 886.2L283.0 886.2L283.5 886.2L284.0 886.2L284.5 886.2L285.0 886.2L285.5 886.2L286.0 886.2L286.5 886.2L287.0 886.2L287.5 886.2L288.0 886.2L288.5 886.2L289.0 886.2L289.5 886.2L290.0 886.2L290.5 886.2L291.0 886.2L291.5 886.2L292.0 886.2L292.5 886.2L293.0 886.2L293.5 886.2L294.0 886.2L294.5 886.2L295.0 886.2L295.5 886.2L296.0 886.2L296.5 886.2L297.0 886.2L297.5 886.2L298.0 886.2L298.5 886.2L299.0 886.2L299.5 886.2L300.0 886.2L300.5 886.2L301.0 886.2L301.5 886.2L302.0 886.2L302.5 886.2L303.0 886.2L303.5 886.2L304.0 886.2L304.5 886.2L305.0 886.2L305.5 886.2L306.0 886.2L306.5 886.2L307.0 886.2L307.5 886.2L308.0 886.2L308.5 886.2L309.0 886.2L309.5 886.2L310.0 886.2L310.5 886.2L311.0 886.2L311.5 886.2L312.0 886.2L312.5 886.2L313.0 886.2L313.5 886.2L314.0 886.2L314.5 886.2L315.0 886.2L315.5 886.2L316.0 886.2L316.5 886.2L317.0 886.2L317.5 886.2L318.0 886.2L318.5 886.2L319.0 886.2L319.5 886.2L320.0 886.2L320.5 886.2L321.0 886.2L321.5 886.2L322.0 886.2L322.5 886.2L323.0 886.2L323.5 886.2L324.0 886.2L324.5 886.2L325.0 886.2L325.5 886.2L326.0 886.2L326.5 886.2L327.0 886.2L327.5 886.2L328.0 886.2L328.5 886.2L329.0 886.2L329.5 886.2L330.0 886.2L330.5 886.2L331.0 886.2L331.5 886.2L332.0 886.2L332.5 886.2L333.0 886.2L333.5 886.2L334.0 886.2L334.5 886.2L335.0 886.2L335.5 886.2L336.0 886.2L336.5 886.2L337.0 886.2L337.5 887.0L338.0 885.8L338.5 884.7L339.0 883.7L339.5 882.6L340.0 881.5L340.5 880.5L341.0 879.4L341.5 878.3L342.0 878.6L342.5 879.0L343.0 879.3L343.5 879.0L344.0 877.9L344.5 876.8L345.0 875.8L345.5 876.4L346.0 877.0L346.5 877.6L347.0 878.2L347.5 876.9L348.0 875.4L348.5 874.0L349.0 873.0L349.5 872.6L350.0 872.2L350.5 871.7L351.0 871.7L351.5 872.1L352.0 872.5L352.5 873.0L353.0 872.9L353.5 872.1L354.0 871.3L354.5 870.5L355.0 869.7L355.5 869.7L356.0 869.9L356.5 870.2L357.0 870.4L357.5 870.7L358.0 871.0L358.5 871.4L359.0 871.7L359.5 872.2L360.0 875.7L360.5 879.1L361.0 882.4L361.5 884.5L362.0 886.7L362.5 887.0L363.0 887.0L363.5 868.8L364.0 868.8L365.4 868.9L366.9 869.2L368.3 869.0L369.8 868.8L371.2 868.4L372.7 868.7L374.1 868.8L375.6 868.6L377.0 868.9L378.5 868.4L379.9 868.6L381.4 868.3L382.8 869.2L384.3 868.2L385.7 868.5L387.2 868.2L388.6 869.2L390.1 869.2L391.5 868.6L393.0 868.9L394.4 868.4L395.9 868.4L397.3 870.0L398.8 868.7L400.2 868.5L401.7 869.4L403.1 869.2L404.6 869.1L406.0 868.9L407.5 869.5L408.9 869.1L410.4 869.1L411.8 868.9L413.3 869.0L414.7 868.5L416.2 868.4L417.6 868.3L419.1 868.1L420.5 868.2L422.0 869.1L423.4 869.0L424.9 869.1L426.3 868.7L427.8 868.8L429.2 868.8L430.7 868.4L432.1 868.6L433.6 868.9L435.0 868.8L436.5 868.2L437.9 868.8L439.4 868.8L440.8 868.9L442.3 868.7L443.7 869.2L445.2 868.2L446.6 868.2L448.1 868.9L449.5 868.6L451.0 868.7L452.4 868.3L453.9 868.1L455.3 868.1L456.8 868.6L458.2 868.9L459.7 869.0L461.1 868.5L462.6 869.3L464.0 869.1L465.5 869.2L466.9 869.2L468.4 868.7L469.8 868.9L471.3 869.3L472.7 868.7L474.2 869.5L475.6 869.3L477.1 869.0L478.5 868.8L480.0 868.5L481.4 869.2L482.9 868.4L484.3 868.5L485.8 868.8L487.2 868.6L488.7 869.0L490.1 868.7L491.6 868.8L493.0 869.6L494.5 868.9L495.9 868.7L497.4 868.6L498.8 868.6L500.3 869.3L501.7 868.3L503.2 868.4L504.6 868.5L506.1 868.9L507.5 868.4L509.0 869.0L510.4 868.6L511.9 868.5L513.3 868.8L514.8 868.7L516.2 869.3L517.7 868.5L519.1 869.1L520.6 868.8L522.0 868.7L523.5 868.8L524.9 868.8L526.4 868.5L527.8 870.0L529.3 868.6L530.7 868.7L532.2 869.2L533.6 869.1L535.1 869.1L536.5 868.8L538.0 868.7L539.4 868.8L540.9 868.4L542.3 869.0L543.8 868.3L545.2 868.4L546.7 868.5L548.1 868.8L549.6 869.3L551.1 868.6L552.5 868.9L554.0 869.2L555.4 869.0L556.9 870.0L558.3 869.1L559.8 869.1L561.2 869.3L562.7 869.2L564.1 868.7L565.6 869.4L567.0 869.4L568.5 869.1L569.9 869.4L571.4 868.8L572.8 868.6L574.3 868.7L575.7 868.7L577.2 868.4L578.6 868.9L580.1 869.6L581.5 869.2L583.0 869.2L584.4 868.6L585.9 868.7L587.3 869.0L588.8 868.7L590.2 869.1L591.7 869.2L593.1 868.9L594.6 868.3L596.0 868.9L597.5 868.8L598.9 868.7L600.4 868.9L601.8 868.6L603.3 868.5L604.7 868.2L606.2 869.0L607.6 868.0L609.1 868.8L610.5 868.5L612.0 868.9L613.4 869.0L614.9 868.7L616.3 868.7L617.8 868.6L619.2 868.3L620.7 868.9L622.1 868.7L623.6 868.4L625.0 868.7L626.5 869.1L627.9 869.4L629.4 868.3L630.8 868.6L632.3 869.0L633.7 869.0L635.2 869.2L636.6 868.9L638.1 868.9L639.5 868.8L641.0 868.8L642.4 868.5L643.9 869.0L645.3 869.0L646.8 868.4L648.2 868.8L649.7 869.0L651.1 868.8L652.6 869.1L654.0 869.0L655.5 868.9L656.9 868.9L658.4 868.8L659.8 868.8L661.3 869.6L662.7 868.8L664.2 868.8L665.6 869.1L667.1 869.4L668.5 868.8L670.0 868.5L671.4 868.6L672.9 869.2L674.3 868.5L675.8 869.1L677.2 869.0L678.7 868.9L680.1 869.5L681.6 869.1L683.0 869.3L684.5 869.2L685.9 868.5L687.4 868.6L688.8 869.8L690.3 868.5L691.7 868.6L693.2 869.1L694.6 868.8L696.1 868.8L697.5 868.6L699.0 868.3L700.4 868.6L701.9 868.3L703.3 867.9L704.8 868.5L706.2 868.8L707.7 868.6L709.1 869.0L710.6 868.8L712.0 868.8L713.5 868.7L714.9 868.4L716.4 868.4L717.8 868.5L719.3 869.3L720.7 869.0L722.2 869.3L723.6 868.9L725.1 869.4L726.5 868.9L728.0 868.7L729.4 869.9L730.9 869.2L732.3 868.5L733.8 869.6L735.2 869.2L736.7 869.1L738.1 869.5L739.6 868.5L741.0 869.3L742.5 868.8L743.9 869.9L745.4 868.9L746.8 868.5L748.3 869.0L749.7 868.8L751.2 868.7L752.6 868.8L754.1 868.7L755.5 868.6L757.0 869.5L758.4 868.8L759.9 869.4L761.3 869.2L762.8 868.8L764.2 868.9L765.7 869.1L767.1 869.6L768.6 868.8L770.0 869.3L771.5 869.1L772.9 869.2L774.4 868.6L775.8 868.5L777.3 869.2L778.7 868.4L780.2 869.1L781.6 869.0L783.1 870.2L784.5 868.6L786.0 869.6L787.4 868.5L788.9 868.8L790.3 868.7L791.8 869.2L793.2 868.4L794.7 869.9L796.1 869.6L797.6 869.2L799.0 868.9L800.5 868.7L801.9 868.8L803.4 868.6L804.8 868.3L806.3 869.8L807.7 868.9L809.2 868.5L810.6 868.9L812.1 868.2L813.5 868.2L815.0 868.1L816.4 868.6L817.9 868.5L819.3 868.9L820.8 868.1L822.2 868.6L823.7 868.4L825.1 868.4L826.6 868.5L828.0 869.1L829.5 868.4L830.9 868.6L832.4 868.8L833.8 868.3L835.3 869.0L836.7 868.6L838.2 868.7L839.6 869.0L841.1 869.9L842.5 869.1L844.0 869.1L845.4 868.7L846.9 869.0L848.3 868.3L849.8 869.1L851.2 869.4L852.7 868.6L854.1 869.1L855.6 869.4L857.0 868.3L858.5 868.6L859.9 868.6L861.4 869.0L862.8 868.9L864.3 869.1L865.7 868.4L867.2 869.2L868.6 869.3L870.1 869.0L871.5 868.5L873.0 868.9L874.4 868.6L875.9 869.4L877.3 869.4L878.8 868.3L880.2 869.1L881.7 868.5L883.1 869.2L884.6 869.3L886.0 868.5L887.5 868.9L888.9 868.7L890.4 868.8L891.8 868.8L893.3 869.0L894.7 869.7L896.2 869.0L897.6 869.1L899.1 868.6L900.5 869.4L902.0 868.7L903.4 868.7L904.9 868.7L906.3 869.3L907.8 869.1L909.2 869.0L910.7 869.6L912.1 869.3L913.6 868.8L915.0 869.0L916.5 868.8L917.9 869.1L919.4 869.7L920.8 869.0L922.3 869.4L923.7 869.6L925.2 868.9L926.6 868.9L928.1 869.2L929.5 869.3L931.0 869.6L932.4 869.5L933.9 869.4L935.3 868.7L936.8 868.8L938.2 869.2L939.7 869.1L941.1 869.2L942.6 868.9L944.0 868.9L945.5 868.5L946.9 869.2L948.4 868.7L949.8 868.2L951.3 869.0L952.7 868.8L954.2 868.5L955.6 868.8L957.1 868.3L958.5 868.8L960.0 869.0L961.4 869.1L962.9 868.6L964.3 868.6L965.8 869.2L967.2 868.8L968.7 869.1L970.1 868.5L971.6 868.9L973.0 869.1L974.5 868.9L975.9 868.1L977.4 868.8L978.8 868.7L980.3 868.0L981.7 868.8L983.2 868.6L984.6 868.1L986.1 868.0L987.5 868.8L989.0 868.5L990.4 868.4L991.9 868.5L993.3 868.4L994.8 868.7L996.2 868.3L997.7 869.0L999.1 868.9L1000.6 868.6L1002.0 868.5L1003.5 868.1L1004.9 868.7L1006.4 868.2L1007.8 868.7L1009.3 868.6L1010.7 868.6L1012.2 868.7L1013.6 869.4L1015.1 869.2L1016.5 868.3L1018.0 869.1L1019.4 868.9L1020.9 868.8L1022.3 868.3L1023.8 868.8L1025.2 868.4L1026.7 868.8L1028.1 868.7L1029.6 868.4L1031.0 869.0L1032.5 868.6L1033.9 868.8L1035.4 868.6L1036.8 868.3L1038.3 868.5L1039.7 868.8L1041.2 869.4L1042.6 868.3L1044.1 868.0L1045.5 868.7L1047.0 868.7L1048.4 869.2L1049.9 869.0L1051.3 868.3L1052.8 868.9L1054.2 868.2L1055.7 868.4L1057.1 869.8L1058.6 869.1L1060.0 869.9L1061.5 868.7L1062.9 868.6L1064.4 869.3L1065.8 868.9L1067.3 868.4L1068.7 868.1L1070.2 868.9L1071.6 869.3L1073.1 868.2L1074.5 868.8L1076.0 869.0L1077.4 868.6L1078.9 868.4L1080.3 868.8L1081.8 868.4L1083.2 869.1L1084.7 869.9L1086.1 869.3L1087.6 869.3L1089.0 868.5L1090.5 868.5L1091.0 869.8L1091 887Z" fill="#62501a"/>
<rect x="446.0" y="599" width="59.0" height="1" fill="#e2501a"/>
<rect x="509.0" y="599" width="2.0" height="1" fill="#e2501a"/>
<rect x="582.0" y="599" width="4.0" height="1" fill="#e2501a"/>
<rect x="446.0" y="649" width="220.0" height="1" fill="#e2501a"/>
<rect x="666.0" y="649" width="34.0" height="1" fill="#e2501a"/>
<rect x="819.1" y="599" width="2.5" height="1" fill="#e2501a"/>
<rect x="940.6" y="599" width="2.9" height="1" fill="#e2501a"/>
<rect x="901.6" y="599" width="2.8" height="1" fill="#e2501a"/>
<rect x="400.4" y="599" width="1.9" height="1" fill="#e2501a"/>
<rect x="1045.1" y="599" width="2.3" height="1" fill="#e2501a"/>
<rect x="1015.1" y="599" width="1.2" height="1" fill="#e2501a"/>
<rect x="710.7" y="624" width="1.5" height="1" fill="#e2501a"/>
<rect x="763.4" y="624" width="2.1" height="1" fill="#e2501a"/>
<rect x="389.2" y="624" width="1.4" height="1" fill="#e2501a"/>
<rect x="577.0" y="624" width="2.8" height="1" fill="#e2501a"/>
<rect x="919.8" y="624" width="1.3" height="1" fill="#e2501a"/>
<rect x="942.0" y="624" width="1.3" height="1" fill="#e2501a"/>
<rect x="815.3" y="649" width="1.3" height="1" fill="#e2501a"/>
<rect x="381.3" y="649" width="2.7" height="1" fill="#e2501a"/>
<rect x="527.7" y="649" width="1.4" height="1" fill="#e2501a"/>
<rect x="1072.6" y="649" width="2.7" height="1" fill="#e2501a"/>
<rect x="584.0" y="649" width="2.9" height="1" fill="#e2501a"/>
<rect x="760.2" y="649" width="2.4" height="1" fill="#e2501a"/>
<rect x="524.4" y="674" width="2.9" height="1" fill="#e2501a"/>
<rect x="866.9" y="674" width="2.9" height="1" fill="#e2501a"/>
<rect x="1010.1" y="674" width="1.6" height="1" fill="#e2501a"/>
<rect x="634.6" y="674" width="1.3" height="1" fill="#e2501a"/>
<rect x="482.7" y="674" width="1.1" height="1" fill="#e2501a"/>
<rect x="592.5" y="674" width="2.2" height="1" fill="#e2501a"/>
<rect x="382.4" y="700" width="2.4" height="1" fill="#e2501a"/>
<rect x="618.2" y="700" width="1.6" height="1" fill="#e2501a"/>
<rect x="957.1" y="700" width="2.0" height="1" fill="#e2501a"/>
<rect x="602.6" y="700" width="2.0" height="1" fill="#e2501a"/>
<rect x="876.8" y="700" width="1.1" height="1" fill="#e2501a"/>
<rect x="1067.4" y="700" width="1.0" height="1" fill="#e2501a"/>
<rect x="908.6" y="725" width="2.7" height="1" fill="#e2501a"/>
<rect x="392.7" y="725" width="2.6" height="1" fill="#e2501a"/>
<rect x="638.2" y="725" width="2.2" height="1" fill="#e2501a"/>
<rect x="386.4" y="725" width="1.1" height="1" fill="#e2501a"/>
<rect x="507.5" y="725" width="2.9" height="1" fill="#e2501a"/>
<rect x="518.5" y="725" width="2.5" height="1" fill="#e2501a"/>
<rect x="1035.4" y="750" width="2.9" height="1" fill="#e2501a"/>
<rect x="622.8" y="750" width="1.7" height="1" fill="#e2501a"/>
<rect x="749.9" y="750" width="2.6" height="1" fill="#e2501a"/>
<rect x="456.2" y="750" width="2.5" height="1" fill="#e2501a"/>
<rect x="942.0" y="750" width="2.7" height="1" fill="#e2501a"/>
<rect x="405.8" y="750" width="2.9" height="1" fill="#e2501a"/>
<rect x="444.3" y="775" width="1.7" height="1" fill="#e2501a"/>
<rect x="810.6" y="775" width="2.8" height="1" fill="#e2501a"/>
<rect x="619.7" y="775" width="2.8" height="1" fill="#e2501a"/>
<rect x="764.3" y="775" width="1.6" height="1" fill="#e2501a"/>
<rect x="603.3" y="775" width="1.4" height="1" fill="#e2501a"/>
<rect x="435.1" y="775" width="1.3" height="1" fill="#e2501a"/>
<rect x="865.9" y="800" width="3.0" height="1" fill="#e2501a"/>
<rect x="493.9" y="800" width="1.1" height="1" fill="#e2501a"/>
<rect x="1075.6" y="800" width="2.1" height="1" fill="#e2501a"/>
<rect x="666.2" y="800" width="1.5" height="1" fill="#e2501a"/>
<rect x="798.7" y="800" width="2.7" height="1" fill="#e2501a"/>
<rect x="701.2" y="800" width="1.8" height="1" fill="#e2501a"/>
<rect x="419.3" y="826" width="2.8" height="1" fill="#e2501a"/>
<rect x="403.1" y="826" width="2.0" height="1" fill="#e2501a"/>
<rect x="971.1" y="826" width="1.3" height="1" fill="#e2501a"/>
<rect x="895.8" y="826" width="2.9" height="1" fill="#e2501a"/>
<rect x="824.4" y="826" width="2.6" height="1" fill="#e2501a"/>
<rect x="455.2" y="826" width="1.9" height="1" fill="#e2501a"/>
<rect x="485.2" y="851" width="2.7" height="1" fill="#e2501a"/>
<rect x="587.8" y="851" width="1.9" height="1" fill="#e2501a"/>
<rect x="1084.5" y="851" width="2.7" height="1" fill="#e2501a"/>
<rect x="1068.1" y="851" width="1.9" height="1" fill="#e2501a"/>
<rect x="724.2" y="851" width="2.5" height="1" fill="#e2501a"/>
<rect x="717.7" y="851" width="1.6" height="1" fill="#e2501a"/>
<rect x="659.9" y="886" width="1.4" height="1" fill="#e2501a"/>
<rect x="640.7" y="886" width="4.0" height="1" fill="#e2501a"/>
<rect x="1059.1" y="886" width="2.9" height="1" fill="#e2501a"/>
<rect x="728.5" y="886" width="2.0" height="1" fill="#e2501a"/>
<rect x="434.0" y="886" width="1.8" height="1" fill="#e2501a"/>
<rect x="931.5" y="886" width="3.6" height="1" fill="#e2501a"/>
<rect x="629.4" y="886" width="3.4" height="1" fill="#e2501a"/>
<rect x="926.4" y="886" width="3.1" height="1" fill="#e2501a"/>
<rect x="846.8" y="886" width="3.3" height="1" fill="#e2501a"/>
<rect x="630.9" y="886" width="3.1" height="1" fill="#e2501a"/>
<rect x="571.7" y="886" width="2.5" height="1" fill="#e2501a"/>
<rect x="922.7" y="886" width="3.1" height="1" fill="#e2501a"/>
<rect x="581.0" y="886" width="3.8" height="1" fill="#e2501a"/>
<rect x="836.5" y="886" width="2.7" height="1" fill="#e2501a"/>
<rect x="378.3" y="886" width="2.6" height="1" fill="#e2501a"/>
<rect x="550.0" y="886" width="3.0" height="1" fill="#e2501a"/>
<rect x="702.4" y="886" width="3.5" height="1" fill="#e2501a"/>
<rect x="834.9" y="886" width="3.4" height="1" fill="#e2501a"/>
<rect x="619.8" y="886" width="2.9" height="1" fill="#e2501a"/>
<rect x="899.8" y="886" width="3.5" height="1" fill="#e2501a"/>
<rect x="621.3" y="886" width="3.5" height="1" fill="#e2501a"/>
<rect x="994.6" y="886" width="3.1" height="1" fill="#e2501a"/>
<rect x="1070.9" y="886" width="3.9" height="1" fill="#e2501a"/>
<rect x="742.0" y="886" width="2.6" height="1" fill="#e2501a"/>
<rect x="489.3" y="886" width="3.5" height="1" fill="#e2501a"/>
<rect x="1043.0" y="886" width="2.4" height="1" fill="#e2501a"/>
<rect x="866.4" y="886" width="3.2" height="1" fill="#e2501a"/>
<rect x="894.4" y="886" width="1.5" height="1" fill="#e2501a"/>
<rect x="930.3" y="886" width="2.7" height="1" fill="#e2501a"/>
<rect x="847.9" y="886" width="2.3" height="1" fill="#e2501a"/>
<rect x="817.8" y="886" width="3.3" height="1" fill="#e2501a"/>
<rect x="827.3" y="886" width="3.2" height="1" fill="#e2501a"/>
<rect x="389.8" y="886" width="1.5" height="1" fill="#e2501a"/>
<rect x="686.7" y="886" width="3.0" height="1" fill="#e2501a"/>
<rect x="527.3" y="886" width="3.1" height="1" fill="#e2501a"/>
<rect x="823.0" y="886" width="1.1" height="1" fill="#e2501a"/>
<rect x="708.6" y="886" width="1.7" height="1" fill="#e2501a"/>
<rect x="408.9" y="886" width="1.4" height="1" fill="#e2501a"/>
<rect x="597.9" y="886" width="1.5" height="1" fill="#e2501a"/>
<rect x="508.8" y="886" width="1.1" height="1" fill="#e2501a"/>
<rect x="704.1" y="886" width="2.1" height="1" fill="#e2501a"/>
<rect x="809.3" y="886" width="2.8" height="1" fill="#e2501a"/>
<rect x="540.8" y="886" width="3.7" height="1" fill="#e2501a"/>
<rect x="370.5" y="886" width="2.2" height="1" fill="#e2501a"/>
<rect x="570.0" y="886" width="2.2" height="1" fill="#e2501a"/>
<rect x="452.6" y="886" width="3.5" height="1" fill="#e2501a"/>
<rect x="638.4" y="886" width="1.1" height="1" fill="#e2501a"/>
<rect x="810.5" y="886" width="1.3" height="1" fill="#e2501a"/>
<rect x="761.5" y="886" width="2.0" height="1" fill="#e2501a"/>
<rect x="787.1" y="886" width="3.9" height="1" fill="#e2501a"/>
<rect x="957.7" y="886" width="2.3" height="1" fill="#e2501a"/>
<rect x="953.7" y="886" width="2.9" height="1" fill="#e2501a"/>
<rect x="635.3" y="886" width="1.4" height="1" fill="#e2501a"/>
<rect x="797.9" y="886" width="2.7" height="1" fill="#e2501a"/>
<rect x="1057.3" y="886" width="3.9" height="1" fill="#e2501a"/>
<rect x="807.0" y="886" width="2.1" height="1" fill="#e2501a"/>
<rect x="1011.5" y="886" width="1.0" height="1" fill="#e2501a"/>
<rect x="447.5" y="886" width="2.7" height="1" fill="#e2501a"/>
<rect x="811.7" y="886" width="1.4" height="1" fill="#e2501a"/>
<rect x="821.9" y="886" width="3.7" height="1" fill="#e2501a"/>
<rect x="639.9" y="886" width="2.3" height="1" fill="#e2501a"/>
<rect x="532.5" y="886" width="1.9" height="1" fill="#e2501a"/>
<rect x="1068.2" y="886" width="2.1" height="1" fill="#e2501a"/>
<rect x="1060.1" y="886" width="3.7" height="1" fill="#e2501a"/>
<rect x="797.8" y="886" width="1.8" height="1" fill="#e2501a"/>
<rect x="1074.3" y="886" width="2.5" height="1" fill="#e2501a"/>
<rect x="668.3" y="886" width="2.0" height="1" fill="#e2501a"/>
<rect x="1076.7" y="886" width="2.5" height="1" fill="#e2501a"/>
<rect x="575.6" y="886" width="2.4" height="1" fill="#e2501a"/>
<rect x="457.5" y="886" width="2.9" height="1" fill="#e2501a"/>
<rect x="688.4" y="886" width="1.9" height="1" fill="#e2501a"/>
<rect x="931.3" y="886" width="3.5" height="1" fill="#e2501a"/>
<rect x="379.5" y="886" width="2.6" height="1" fill="#e2501a"/>
<rect x="566.6" y="886" width="3.8" height="1" fill="#e2501a"/>
<rect x="931.4" y="886" width="1.7" height="1" fill="#e2501a"/>
<rect x="562.2" y="886" width="1.5" height="1" fill="#e2501a"/>
<rect x="1080.0" y="886" width="1.9" height="1" fill="#e2501a"/>
<rect x="806.6" y="886" width="2.4" height="1" fill="#e2501a"/>
<rect x="833.0" y="886" width="2.8" height="1" fill="#e2501a"/>
<rect x="903.8" y="886" width="1.4" height="1" fill="#e2501a"/>
<rect x="18" y="575" width="1074" height="1" fill="#000"/>
<rect x="18" y="600" width="1074" height="1" fill="#000"/>
<rect x="18" y="625" width="1074" height="1" fill="#000"/>
<rect x="18" y="650" width="1074" height="1" fill="#000"/>
<rect x="18" y="675" width="1074" height="1" fill="#000"/>
<rect x="18" y="701" width="1074" height="1" fill="#000"/>
<rect x="18" y="726" width="1074" height="1" fill="#000"/>
<rect x="18" y="751" width="1074" height="1" fill="#000"/>
<rect x="18" y="776" width="1074" height="1" fill="#000"/>
<rect x="18" y="801" width="1074" height="1" fill="#000"/>
<rect x="18" y="827" width="1074" height="1" fill="#000"/>
<rect x="18" y="852" width="1074" height="1" fill="#000"/>
<rect x="4" y="575" width="1098" height="1" fill="#000"/>
<rect x="4" y="861" width="1098" height="1" fill="#000"/>
<rect x="4" y="887" width="1098" height="1" fill="#000"/>
<rect x="18" y="576" width="1" height="285" fill="#000"/>
<rect x="220" y="576" width="1" height="285" fill="#000"/>
<rect x="221" y="548" width="1" height="27" fill="#000"/>
<rect x="221" y="861" width="1" height="26" fill="#000"/>
<rect x="1092" y="861" width="1" height="26" fill="#000"/>
<rect x="1102" y="548" width="1" height="341" fill="#000"/>
<path d="M19.5 600 V576.5 H219.5 V600" fill="none" stroke="#fff" stroke-width="1"/>
<rect x="19" y="599" width="201" height="1" fill="#fff"/>
<path d="M19.5 625 V601.5 H219.5 V625" fill="none" stroke="#fff" stroke-width="1"/>
<rect x="19" y="624" width="201" height="1" fill="#fff"/>
<path d="M19.5 650 V626.5 H219.5 V650" fill="none" stroke="#fff" stroke-width="1"/>
<rect x="19" y="649" width="201" height="1" fill="#fff"/>
<path d="M19.5 675 V651.5 H219.5 V675" fill="none" stroke="#fff" stroke-width="1"/>
<rect x="19" y="674" width="201" height="1" fill="#fff"/>
<path d="M19.5 701 V676.5 H219.5 V701" fill="none" stroke="#fff" stroke-width="1"/>
<rect x="19" y="700" width="201" height="1" fill="#fff"/>
<path d="M19.5 726 V702.5 H219.5 V726" fill="none" stroke="#fff" stroke-width="1"/>
<rect x="19" y="725" width="201" height="1" fill="#fff"/>
<path d="M19.5 751 V727.5 H219.5 V751" fill="none" stroke="#fff" stroke-width="1"/>
<rect x="19" y="750" width="201" height="1" fill="#fff"/>
<path d="M19.5 776 V752.5 H219.5 V776" fill="none" stroke="#fff" stroke-width="1"/>
<rect x="19" y="775" width="201" height="1" fill="#fff"/>
<path d="M19.5 801 V777.5 H219.5 V801" fill="none" stroke="#fff" stroke-width="1"/>
<rect x="19" y="800" width="201" height="1" fill="#fff"/>
<path d="M19.5 827 V802.5 H219.5 V827" fill="none" stroke="#fff" stroke-width="1"/>
<rect x="19" y="826" width="201" height="1" fill="#fff"/>
<path d="M19.5 852 V828.5 H219.5 V852" fill="none" stroke="#fff" stroke-width="1"/>
<rect x="19" y="851" width="201" height="1" fill="#fff"/>
<path d="M19.5 861 V853.5 H219.5 V861" fill="none" stroke="#fff" stroke-width="1"/>
<rect x="19" y="860" width="201" height="1" fill="#fff"/>
<rect x="363" y="576" width="1" height="311" fill="#fff"/>
<rect x="1092.5" y="577" width="8.7" height="145" rx="4.3" fill="#c1c1c1"/>
<rect x="222.95" y="567" width="1.1" height="8" fill="#000"/>
<rect x="228.74" y="571.6" width="1.1" height="3.4" fill="#222"/>
<rect x="234.53" y="571" width="1.1" height="4" fill="#222"/>
<rect x="240.31" y="571.6" width="1.1" height="3.4" fill="#222"/>
<rect x="246.10" y="571" width="1.1" height="4" fill="#222"/>
<rect x="251.89" y="571.6" width="1.1" height="3.4" fill="#222"/>
<rect x="257.68" y="571" width="1.1" height="4" fill="#222"/>
<rect x="263.47" y="571.6" width="1.1" height="3.4" fill="#222"/>
<rect x="269.25" y="571" width="1.1" height="4" fill="#222"/>
<rect x="275.04" y="571.6" width="1.1" height="3.4" fill="#222"/>
<rect x="280.83" y="567" width="1.1" height="8" fill="#000"/>
<rect x="286.62" y="571.6" width="1.1" height="3.4" fill="#222"/>
<rect x="292.41" y="571" width="1.1" height="4" fill="#222"/>
<rect x="298.19" y="571.6" width="1.1" height="3.4" fill="#222"/>
<rect x="303.98" y="571" width="1.1" height="4" fill="#222"/>
<rect x="309.77" y="571.6" width="1.1" height="3.4" fill="#222"/>
<rect x="315.56" y="571" width="1.1" height="4" fill="#222"/>
<rect x="321.35" y="571.6" width="1.1" height="3.4" fill="#222"/>
<rect x="327.13" y="571" width="1.1" height="4" fill="#222"/>
<rect x="332.92" y="571.6" width="1.1" height="3.4" fill="#222"/>
<rect x="338.71" y="567" width="1.1" height="8" fill="#000"/>
<rect x="344.50" y="571.6" width="1.1" height="3.4" fill="#222"/>
<rect x="350.29" y="571" width="1.1" height="4" fill="#222"/>
<rect x="356.07" y="571.6" width="1.1" height="3.4" fill="#222"/>
<rect x="361.86" y="571" width="1.1" height="4" fill="#222"/>
<rect x="367.65" y="571.6" width="1.1" height="3.4" fill="#222"/>
<rect x="373.44" y="571" width="1.1" height="4" fill="#222"/>
<rect x="379.23" y="571.6" width="1.1" height="3.4" fill="#222"/>
<rect x="385.01" y="571" width="1.1" height="4" fill="#222"/>
<rect x="390.80" y="571.6" width="1.1" height="3.4" fill="#222"/>
<rect x="396.59" y="567" width="1.1" height="8" fill="#000"/>
<rect x="402.38" y="571.6" width="1.1" height="3.4" fill="#222"/>
<rect x="408.17" y="571" width="1.1" height="4" fill="#222"/>
<rect x="413.95" y="571.6" width="1.1" height="3.4" fill="#222"/>
<rect x="419.74" y="571" width="1.1" height="4" fill="#222"/>
<rect x="425.53" y="571.6" width="1.1" height="3.4" fill="#222"/>
<rect x="431.32" y="571" width="1.1" height="4" fill="#222"/>
<rect x="437.11" y="571.6" width="1.1" height="3.4" fill="#222"/>
<rect x="442.89" y="571" width="1.1" height="4" fill="#222"/>
<rect x="448.68" y="571.6" width="1.1" height="3.4" fill="#222"/>
<rect x="454.47" y="567" width="1.1" height="8" fill="#000"/>
<rect x="460.26" y="571.6" width="1.1" height="3.4" fill="#222"/>
<rect x="466.05" y="571" width="1.1" height="4" fill="#222"/>
<rect x="471.83" y="571.6" width="1.1" height="3.4" fill="#222"/>
<rect x="477.62" y="571" width="1.1" height="4" fill="#222"/>
<rect x="483.41" y="571.6" width="1.1" height="3.4" fill="#222"/>
<rect x="489.20" y="571" width="1.1" height="4" fill="#222"/>
<rect x="494.99" y="571.6" width="1.1" height="3.4" fill="#222"/>
<rect x="500.77" y="571" width="1.1" height="4" fill="#222"/>
<rect x="506.56" y="571.6" width="1.1" height="3.4" fill="#222"/>
<rect x="512.35" y="567" width="1.1" height="8" fill="#000"/>
<rect x="518.14" y="571.6" width="1.1" height="3.4" fill="#222"/>
<rect x="523.93" y="571" width="1.1" height="4" fill="#222"/>
<rect x="529.71" y="571.6" width="1.1" height="3.4" fill="#222"/>
<rect x="535.50" y="571" width="1.1" height="4" fill="#222"/>
<rect x="541.29" y="571.6" width="1.1" height="3.4" fill="#222"/>
<rect x="547.08" y="571" width="1.1" height="4" fill="#222"/>
<rect x="552.87" y="571.6" width="1.1" height="3.4" fill="#222"/>
<rect x="558.65" y="571" width="1.1" height="4" fill="#222"/>
<rect x="564.44" y="571.6" width="1.1" height="3.4" fill="#222"/>
<rect x="570.23" y="567" width="1.1" height="8" fill="#000"/>
<rect x="576.02" y="571.6" width="1.1" height="3.4" fill="#222"/>
<rect x="581.81" y="571" width="1.1" height="4" fill="#222"/>
<rect x="587.59" y="571.6" width="1.1" height="3.4" fill="#222"/>
<rect x="593.38" y="571" width="1.1" height="4" fill="#222"/>
<rect x="599.17" y="571.6" width="1.1" height="3.4" fill="#222"/>
<rect x="604.96" y="571" width="1.1" height="4" fill="#222"/>
<rect x="610.75" y="571.6" width="1.1" height="3.4" fill="#222"/>
<rect x="616.53" y="571" width="1.1" height="4" fill="#222"/>
<rect x="622.32" y="571.6" width="1.1" height="3.4" fill="#222"/>
<rect x="628.11" y="567" width="1.1" height="8" fill="#000"/>
<rect x="633.90" y="571.6" width="1.1" height="3.4" fill="#222"/>
<rect x="639.69" y="571" width="1.1" height="4" fill="#222"/>
<rect x="645.47" y="571.6" width="1.1" height="3.4" fill="#222"/>
<rect x="651.26" y="571" width="1.1" height="4" fill="#222"/>
<rect x="657.05" y="571.6" width="1.1" height="3.4" fill="#222"/>
<rect x="662.84" y="571" width="1.1" height="4" fill="#222"/>
<rect x="668.63" y="571.6" width="1.1" height="3.4" fill="#222"/>
<rect x="674.41" y="571" width="1.1" height="4" fill="#222"/>
<rect x="680.20" y="571.6" width="1.1" height="3.4" fill="#222"/>
<rect x="685.99" y="567" width="1.1" height="8" fill="#000"/>
<rect x="691.78" y="571.6" width="1.1" height="3.4" fill="#222"/>
<rect x="697.57" y="571" width="1.1" height="4" fill="#222"/>
<rect x="703.35" y="571.6" width="1.1" height="3.4" fill="#222"/>
<rect x="709.14" y="571" width="1.1" height="4" fill="#222"/>
<rect x="714.93" y="571.6" width="1.1" height="3.4" fill="#222"/>
<rect x="720.72" y="571" width="1.1" height="4" fill="#222"/>
<rect x="726.51" y="571.6" width="1.1" height="3.4" fill="#222"/>
<rect x="732.29" y="571" width="1.1" height="4" fill="#222"/>
<rect x="738.08" y="571.6" width="1.1" height="3.4" fill="#222"/>
<rect x="743.87" y="567" width="1.1" height="8" fill="#000"/>
<rect x="749.66" y="571.6" width="1.1" height="3.4" fill="#222"/>
<rect x="755.45" y="571" width="1.1" height="4" fill="#222"/>
<rect x="761.23" y="571.6" width="1.1" height="3.4" fill="#222"/>
<rect x="767.02" y="571" width="1.1" height="4" fill="#222"/>
<rect x="772.81" y="571.6" width="1.1" height="3.4" fill="#222"/>
<rect x="778.60" y="571" width="1.1" height="4" fill="#222"/>
<rect x="784.39" y="571.6" width="1.1" height="3.4" fill="#222"/>
<rect x="790.17" y="571" width="1.1" height="4" fill="#222"/>
<rect x="795.96" y="571.6" width="1.1" height="3.4" fill="#222"/>
<rect x="801.75" y="567" width="1.1" height="8" fill="#000"/>
<rect x="807.54" y="571.6" width="1.1" height="3.4" fill="#222"/>
<rect x="813.33" y="571" width="1.1" height="4" fill="#222"/>
<rect x="819.11" y="571.6" width="1.1" height="3.4" fill="#222"/>
<rect x="824.90" y="571" width="1.1" height="4" fill="#222"/>
<rect x="830.69" y="571.6" width="1.1" height="3.4" fill="#222"/>
<rect x="836.48" y="571" width="1.1" height="4" fill="#222"/>
<rect x="842.27" y="571.6" width="1.1" height="3.4" fill="#222"/>
<rect x="848.05" y="571" width="1.1" height="4" fill="#222"/>
<rect x="853.84" y="571.6" width="1.1" height="3.4" fill="#222"/>
<rect x="859.63" y="567" width="1.1" height="8" fill="#000"/>
<rect x="865.42" y="571.6" width="1.1" height="3.4" fill="#222"/>
<rect x="871.21" y="571" width="1.1" height="4" fill="#222"/>
<rect x="876.99" y="571.6" width="1.1" height="3.4" fill="#222"/>
<rect x="882.78" y="571" width="1.1" height="4" fill="#222"/>
<rect x="888.57" y="571.6" width="1.1" height="3.4" fill="#222"/>
<rect x="894.36" y="571" width="1.1" height="4" fill="#222"/>
<rect x="900.15" y="571.6" width="1.1" height="3.4" fill="#222"/>
<rect x="905.93" y="571" width="1.1" height="4" fill="#222"/>
<rect x="911.72" y="571.6" width="1.1" height="3.4" fill="#222"/>
<rect x="917.51" y="567" width="1.1" height="8" fill="#000"/>
<rect x="923.30" y="571.6" width="1.1" height="3.4" fill="#222"/>
<rect x="929.09" y="571" width="1.1" height="4" fill="#222"/>
<rect x="934.87" y="571.6" width="1.1" height="3.4" fill="#222"/>
<rect x="940.66" y="571" width="1.1" height="4" fill="#222"/>
<rect x="946.45" y="571.6" width="1.1" height="3.4" fill="#222"/>
<rect x="952.24" y="571" width="1.1" height="4" fill="#222"/>
<rect x="958.03" y="571.6" width="1.1" height="3.4" fill="#222"/>
<rect x="963.81" y="571" width="1.1" height="4" fill="#222"/>
<rect x="969.60" y="571.6" width="1.1" height="3.4" fill="#222"/>
<rect x="975.39" y="567" width="1.1" height="8" fill="#000"/>
<rect x="981.18" y="571.6" width="1.1" height="3.4" fill="#222"/>
<rect x="986.97" y="571" width="1.1" height="4" fill="#222"/>
<rect x="992.75" y="571.6" width="1.1" height="3.4" fill="#222"/>
<rect x="998.54" y="571" width="1.1" height="4" fill="#222"/>
<rect x="1004.33" y="571.6" width="1.1" height="3.4" fill="#222"/>
<rect x="1010.12" y="571" width="1.1" height="4" fill="#222"/>
<rect x="1015.91" y="571.6" width="1.1" height="3.4" fill="#222"/>
<rect x="1021.69" y="571" width="1.1" height="4" fill="#222"/>
<rect x="1027.48" y="571.6" width="1.1" height="3.4" fill="#222"/>
<rect x="1033.27" y="567" width="1.1" height="8" fill="#000"/>
<rect x="1039.06" y="571.6" width="1.1" height="3.4" fill="#222"/>
<rect x="1044.85" y="571" width="1.1" height="4" fill="#222"/>
<rect x="1050.63" y="571.6" width="1.1" height="3.4" fill="#222"/>
<rect x="1056.42" y="571" width="1.1" height="4" fill="#222"/>
<rect x="1062.21" y="571.6" width="1.1" height="3.4" fill="#222"/>
<rect x="1068.00" y="571" width="1.1" height="4" fill="#222"/>
<rect x="1073.79" y="571.6" width="1.1" height="3.4" fill="#222"/>
<rect x="1079.57" y="571" width="1.1" height="4" fill="#222"/>
<rect x="1085.36" y="571.6" width="1.1" height="3.4" fill="#222"/>
</svg>
<div class="abs" style="left:219.8px;top:8.3px;font-size:10px;letter-spacing:-0.15px;line-height:10px;color:#222">0s</div>
<div class="abs" style="left:257.3px;top:8.3px;width:40px;text-align:center;letter-spacing:-0.15px;font-size:10px;line-height:10px;color:#222">2s</div>
<div class="abs" style="left:315.2px;top:8.3px;width:40px;text-align:center;letter-spacing:-0.15px;font-size:10px;line-height:10px;color:#222">4s</div>
<div class="abs" style="left:373.1px;top:8.3px;width:40px;text-align:center;letter-spacing:-0.15px;font-size:10px;line-height:10px;color:#222">6s</div>
<div class="abs" style="left:431.0px;top:8.3px;width:40px;text-align:center;letter-spacing:-0.15px;font-size:10px;line-height:10px;color:#222">8s</div>
<div class="abs" style="left:488.9px;top:8.3px;width:40px;text-align:center;letter-spacing:-0.15px;font-size:10px;line-height:10px;color:#222">10s</div>
<div class="abs" style="left:546.7px;top:8.3px;width:40px;text-align:center;letter-spacing:-0.15px;font-size:10px;line-height:10px;color:#222">12s</div>
<div class="abs" style="left:604.6px;top:8.3px;width:40px;text-align:center;letter-spacing:-0.15px;font-size:10px;line-height:10px;color:#222">14s</div>
<div class="abs" style="left:662.5px;top:8.3px;width:40px;text-align:center;letter-spacing:-0.15px;font-size:10px;line-height:10px;color:#222">16s</div>
<div class="abs" style="left:720.4px;top:8.3px;width:40px;text-align:center;letter-spacing:-0.15px;font-size:10px;line-height:10px;color:#222">18s</div>
<div class="abs" style="left:778.2px;top:8.3px;width:40px;text-align:center;letter-spacing:-0.15px;font-size:10px;line-height:10px;color:#222">20s</div>
<div class="abs" style="left:836.1px;top:8.3px;width:40px;text-align:center;letter-spacing:-0.15px;font-size:10px;line-height:10px;color:#222">22s</div>
<div class="abs" style="left:894.0px;top:8.3px;width:40px;text-align:center;letter-spacing:-0.15px;font-size:10px;line-height:10px;color:#222">24s</div>
<div class="abs" style="left:951.9px;top:8.3px;width:40px;text-align:center;letter-spacing:-0.15px;font-size:10px;line-height:10px;color:#222">26s</div>
<div class="abs" style="left:1009.8px;top:8.3px;width:40px;text-align:center;letter-spacing:-0.15px;font-size:10px;line-height:10px;color:#222">28s</div>
<div class="abs" style="left:-68px;top:94.2px;width:150px;height:16px;line-height:16px;text-align:center;font-size:12.5px;color:#222;transform:rotate(-90deg);white-space:nowrap">Core Type / Logical Core</div>
<svg class="abs" style="left:24px;top:36px" width="10" height="8" viewBox="0 0 10 8"><polygon points="0.2,0.3 9.6,0.3 4.9,7.4" fill="#777"/></svg>
<div class="abs" style="left:38px;top:28px;height:24px;line-height:25px;font-size:12.5px;color:#222">P-Core</div>
<div class="abs" style="left:53px;top:53px;height:24px;line-height:25px;font-size:12.5px;color:#222">cpu_4</div>
<div class="abs" style="left:53px;top:78px;height:24px;line-height:25px;font-size:12.5px;color:#222">cpu_11</div>
<div class="abs" style="left:53px;top:103px;height:24px;line-height:25px;font-size:12.5px;color:#222">cpu_7</div>
<div class="abs" style="left:53px;top:128px;height:25px;line-height:26px;font-size:12.5px;color:#222">cpu_5</div>
<div class="abs" style="left:53px;top:154px;height:24px;line-height:25px;font-size:12.5px;color:#222">cpu_6</div>
<div class="abs" style="left:53px;top:179px;height:24px;line-height:25px;font-size:12.5px;color:#222">cpu_0</div>
<div class="abs" style="left:53px;top:204px;height:24px;line-height:25px;font-size:12.5px;color:#222">cpu_9</div>
<div class="abs" style="left:53px;top:229px;height:24px;line-height:25px;font-size:12.5px;color:#222">cpu_10</div>
<div class="abs" style="left:53px;top:254px;height:25px;line-height:26px;font-size:12.5px;color:#222">cpu_8</div>
<div class="abs" style="left:53px;top:280px;height:24px;line-height:25px;font-size:12.5px;color:#222">cpu_3</div>
<div class="abs" style="left:53px;top:305px;height:8px;width:60px;overflow:hidden"><div style="position:absolute;left:0;top:5.3px;line-height:14px;font-size:12.5px;color:#222">cpu_1</div></div>
<div class="abs" style="left:35px;top:314px;height:25px;line-height:24px;font-size:12.5px;color:#3a3a3a">CPU Time</div>
<svg class="abs" style="left:80px;top:4px" width="136" height="20" viewBox="84 552 136 20"><circle cx="94.2" cy="560.6" r="4.9" fill="none" stroke="#6a6a6a" stroke-width="1.7"/><path d="M90.6 564.3 L86.4 568.4" stroke="#6a6a6a" stroke-width="1.8"/><rect x="106.8" y="559.8" width="2.4" height="2.2" fill="#666"/><rect x="106.8" y="564.8" width="2.4" height="2.2" fill="#666"/><rect x="122" y="559.5" width="14" height="3.2" fill="#000"/><rect x="127.4" y="554.2" width="3.2" height="13.8" fill="#000"/><rect x="148" y="559.2" width="14" height="3.6" fill="#b4b4b4"/><path d="M174.8 564.9 L175.2 557.6 L177.5 559.5 Q181.6 555.7 187.9 556.5 Q182.7 558.5 180.3 561.9 L182.4 563.8 Z" fill="#b4b4b4"/><path d="M201.6 564.9 L202 557.6 L204.3 559.5 Q208.4 555.7 214.7 556.5 Q209.5 558.5 207.1 561.9 L209.2 563.8 Z" fill="#b4b4b4"/><path d="M200 559.8 V565.9 H206.6" fill="none" stroke="#c6c6c6" stroke-width="1.3"/></svg>
</div>
<div class="abs" style="left:1103px;top:548px;width:4px;height:341px;background:#fff"></div>
<div class="abs" style="left:1107px;top:548px;width:1px;height:341px;background:#000"></div>
<div class="abs" id="lg" style="left:1108px;top:548px;width:190px;height:341px;background:#f7f7f7;overflow:hidden;font-size:12.5px;color:#222">
<div class="abs" style="left:183px;top:0;width:7px;height:341px;background:#f1f1f1"></div>
<svg class="abs" style="left:6px;top:10px" width="13" height="13" viewBox="0 0 13 13"><rect x="0" y="0" width="13" height="13" rx="2.2" fill="#0b74f3"/><path d="M2.9 6.9 L5.3 9.3 L10.1 3.6" fill="none" stroke="#fff" stroke-width="1.9"/></svg>
<div class="sel" style="left:27px;top:8px;width:150px;height:17.5px;line-height:15.5px;font-size:13px;padding-left:4.5px;color:#111;border-radius:2.5px"><div style="width:125px;overflow:hidden">Core Type / Logical Core</div></div>
<svg class="abs" style="left:163px;top:13.5px" width="11" height="8" viewBox="0 0 11 8"><path d="M1.3 1.3 L5.5 5.6 L9.7 1.3" fill="none" stroke="#111" stroke-width="2"/></svg>
<svg class="abs" style="left:19px;top:30px" width="13" height="13" viewBox="0 0 13 13"><rect x="0" y="0" width="13" height="13" rx="2.2" fill="#0b74f3"/><path d="M2.9 6.9 L5.3 9.3 L10.1 3.6" fill="none" stroke="#fff" stroke-width="1.9"/></svg>
<div class="abs" style="left:37px;top:31px;width:15px;height:12px;background:#6cb75f;border:1px solid #3f7a38"></div>
<div class="abs" style="left:56px;top:28.5px;line-height:15px;white-space:nowrap">Running</div>
<svg class="abs" style="left:19px;top:50px" width="13" height="13" viewBox="0 0 13 13"><rect x="0" y="0" width="13" height="13" rx="2.2" fill="#0b74f3"/><path d="M2.9 6.9 L5.3 9.3 L10.1 3.6" fill="none" stroke="#fff" stroke-width="1.9"/></svg>
<svg class="abs" style="left:37px;top:51.5px" width="15" height="11" viewBox="0 0 15 11"><path d="M0 11 V7 L1.5 5.2 L2.6 6.4 L4.2 2.4 L5.4 4.6 L6.3 1.2 L7.6 4.4 L8.8 2.8 L10 5.4 L11.4 3.8 L12.8 5.6 L14 5 L15 6.6 V11Z" fill="#62501a"/></svg>
<div class="abs" style="left:56px;top:48.5px;line-height:15px;white-space:nowrap">CPU Time</div>
<svg class="abs" style="left:19px;top:69px" width="13" height="13" viewBox="0 0 13 13"><rect x="0" y="0" width="13" height="13" rx="2.2" fill="#0b74f3"/><path d="M2.9 6.9 L5.3 9.3 L10.1 3.6" fill="none" stroke="#fff" stroke-width="1.9"/></svg>
<svg class="abs" style="left:37px;top:70.5px" width="15" height="11" viewBox="0 0 15 11"><path d="M0 11 V7 L1.5 5.2 L2.6 6.4 L4.2 2.4 L5.4 4.6 L6.3 1.2 L7.6 4.4 L8.8 2.8 L10 5.4 L11.4 3.8 L12.8 5.6 L14 5 L15 6.6 V11Z" fill="#e2501a"/></svg>
<div class="abs" style="left:56px;top:67.5px;line-height:15px;white-space:nowrap">Spin and Overhead&hellip;</div>
<div class="abs" style="left:19px;top:89px;width:13px;height:13px;border:1px solid #767676;border-radius:2.5px;background:#fff"></div>
<svg class="abs" style="left:40px;top:91.5px" width="9" height="8" viewBox="0 0 9 8"><path d="M0.6 0.6 H8.4 V3.4 L4.5 7.4 L0.6 3.4Z" fill="#5b9950" stroke="#3d6e36" stroke-width="0.9"/></svg>
<div class="abs" style="left:56px;top:87.5px;line-height:15px;white-space:nowrap">Clocktick Sample</div>
<svg class="abs" style="left:6px;top:115px" width="13" height="13" viewBox="0 0 13 13"><rect x="0" y="0" width="13" height="13" rx="2.2" fill="#0b74f3"/><path d="M2.9 6.9 L5.3 9.3 L10.1 3.6" fill="none" stroke="#fff" stroke-width="1.9"/></svg>
<div class="abs" style="left:28px;top:113.5px;line-height:15px;font-weight:bold;color:#222">CPU Time</div>
<svg class="abs" style="left:19px;top:135px" width="13" height="13" viewBox="0 0 13 13"><rect x="0" y="0" width="13" height="13" rx="2.2" fill="#0b74f3"/><path d="M2.9 6.9 L5.3 9.3 L10.1 3.6" fill="none" stroke="#fff" stroke-width="1.9"/></svg>
<svg class="abs" style="left:37px;top:136px" width="15" height="11" viewBox="0 0 15 11"><path d="M0 11 V7 L1.5 5.2 L2.6 6.4 L4.2 2.4 L5.4 4.6 L6.3 1.2 L7.6 4.4 L8.8 2.8 L10 5.4 L11.4 3.8 L12.8 5.6 L14 5 L15 6.6 V11Z" fill="#62501a"/></svg>
<div class="abs" style="left:56px;top:132.5px;line-height:15px;white-space:nowrap">CPU Time</div>
<svg class="abs" style="left:19px;top:154.5px" width="13" height="13" viewBox="0 0 13 13"><rect x="0" y="0" width="13" height="13" rx="2.2" fill="#0b74f3"/><path d="M2.9 6.9 L5.3 9.3 L10.1 3.6" fill="none" stroke="#fff" stroke-width="1.9"/></svg>
<svg class="abs" style="left:37px;top:155.5px" width="15" height="11" viewBox="0 0 15 11"><path d="M0 11 V7 L1.5 5.2 L2.6 6.4 L4.2 2.4 L5.4 4.6 L6.3 1.2 L7.6 4.4 L8.8 2.8 L10 5.4 L11.4 3.8 L12.8 5.6 L14 5 L15 6.6 V11Z" fill="#e2501a"/></svg>
<div class="abs" style="left:56px;top:152.0px;line-height:15px;white-space:nowrap">Spin and Overhead&hellip;</div>
</div>
<div class="abs" style="left:16.5px;top:899.5px;font-size:13.5px;line-height:16px;color:#70747e">FILTER</div>
<svg class="abs" style="left:77px;top:892px" width="28" height="28" viewBox="0 0 28 28"><circle cx="14" cy="14.2" r="13.3" fill="#fff"/><path d="M5.2 7 H22.8 L15.6 15.6 V23.4 L12.4 21.4 V15.6Z" fill="#a9adb9"/></svg>
<div class="abs" style="left:119.5px;top:899.5px;font-size:13.7px;line-height:16px;color:#1c1c1c">100.0%</div>
<svg class="abs" style="left:184px;top:897px" width="26" height="25" viewBox="0 0 26 25"><path d="M1 2 H18.5 L11.4 10.4 V18 L8.2 16 V10.4Z" fill="#d4d6dc"/><path d="M10.5 10.2 L22.5 22.2 M22.5 10.2 L10.5 22.2" stroke="#8f939d" stroke-width="3.6"/></svg>
<div class="abs" style="left:222px;top:896.5px;width:1px;height:20.5px;background:#5d616b"></div>
<div class="abs" style="left:821.5px;top:896.5px;width:1px;height:20.5px;background:#5d616b"></div>
<div class="sel" style="left:237px;top:896px;width:135px;height:21px;line-height:20.5px;font-size:12.5px;padding-left:3.5px;color:#111;border-radius:2.5px"><div style="width:114px;overflow:hidden">Any Process</div></div>
<svg class="abs" style="left:356.5px;top:903px" width="11" height="8" viewBox="0 0 11 8"><path d="M1.3 1.3 L5.5 5.6 L9.7 1.3" fill="none" stroke="#111" stroke-width="2"/></svg>
<div class="abs" style="left:387.5px;top:899.5px;font-size:13.5px;line-height:16px;color:#868a94">Thread</div>
<div class="sel" style="left:438px;top:896px;width:88px;height:21px;line-height:20.5px;font-size:12.5px;padding-left:3.5px;color:#111;border-radius:2.5px"><div style="width:67px;overflow:hidden">Any Thread</div></div>
<svg class="abs" style="left:510.5px;top:903px" width="11" height="8" viewBox="0 0 11 8"><path d="M1.3 1.3 L5.5 5.6 L9.7 1.3" fill="none" stroke="#111" stroke-width="2"/></svg>
<div class="abs" style="left:541.5px;top:899.5px;font-size:13.5px;line-height:16px;color:#868a94">Module</div>
<div class="sel" style="left:594px;top:896px;width:94px;height:21px;line-height:20.5px;font-size:12.5px;padding-left:3.5px;color:#111;border-radius:2.5px"><div style="width:73px;overflow:hidden">Any Module</div></div>
<svg class="abs" style="left:672.5px;top:903px" width="11" height="8" viewBox="0 0 11 8"><path d="M1.3 1.3 L5.5 5.6 L9.7 1.3" fill="none" stroke="#111" stroke-width="2"/></svg>
<div class="sel" style="left:702px;top:896px;width:105px;height:21px;line-height:20.5px;font-size:12.5px;padding-left:3.5px;color:#111;border-radius:2.5px"><div style="width:84px;overflow:hidden">Any Utilization</div></div>
<svg class="abs" style="left:791.5px;top:903px" width="11" height="8" viewBox="0 0 11 8"><path d="M1.3 1.3 L5.5 5.6 L9.7 1.3" fill="none" stroke="#111" stroke-width="2"/></svg>
<div class="sel" style="left:836.5px;top:896px;width:156.0px;height:21px;line-height:20.5px;font-size:12.5px;padding-left:3.5px;color:#111;border-radius:2.5px"><div style="width:135.0px;overflow:hidden">User functions + 1</div></div>
<svg class="abs" style="left:977.0px;top:903px" width="11" height="8" viewBox="0 0 11 8"><path d="M1.3 1.3 L5.5 5.6 L9.7 1.3" fill="none" stroke="#111" stroke-width="2"/></svg>
<div class="sel" style="left:1007px;top:896px;width:130px;height:21px;line-height:20.5px;font-size:12.5px;padding-left:3.5px;color:#111;border-radius:2.5px"><div style="width:109px;overflow:hidden">Functions only</div></div>
<svg class="abs" style="left:1121.5px;top:903px" width="11" height="8" viewBox="0 0 11 8"><path d="M1.3 1.3 L5.5 5.6 L9.7 1.3" fill="none" stroke="#111" stroke-width="2"/></svg>
<div class="sel" style="left:1151px;top:896px;width:136px;height:21px;line-height:20.5px;font-size:12.5px;padding-left:3.5px;color:#111;border-radius:2.5px"><div style="width:115px;overflow:hidden">Show inline function</div></div>
<svg class="abs" style="left:1271.5px;top:903px" width="11" height="8" viewBox="0 0 11 8"><path d="M1.3 1.3 L5.5 5.6 L9.7 1.3" fill="none" stroke="#111" stroke-width="2"/></svg>
</body></html>
